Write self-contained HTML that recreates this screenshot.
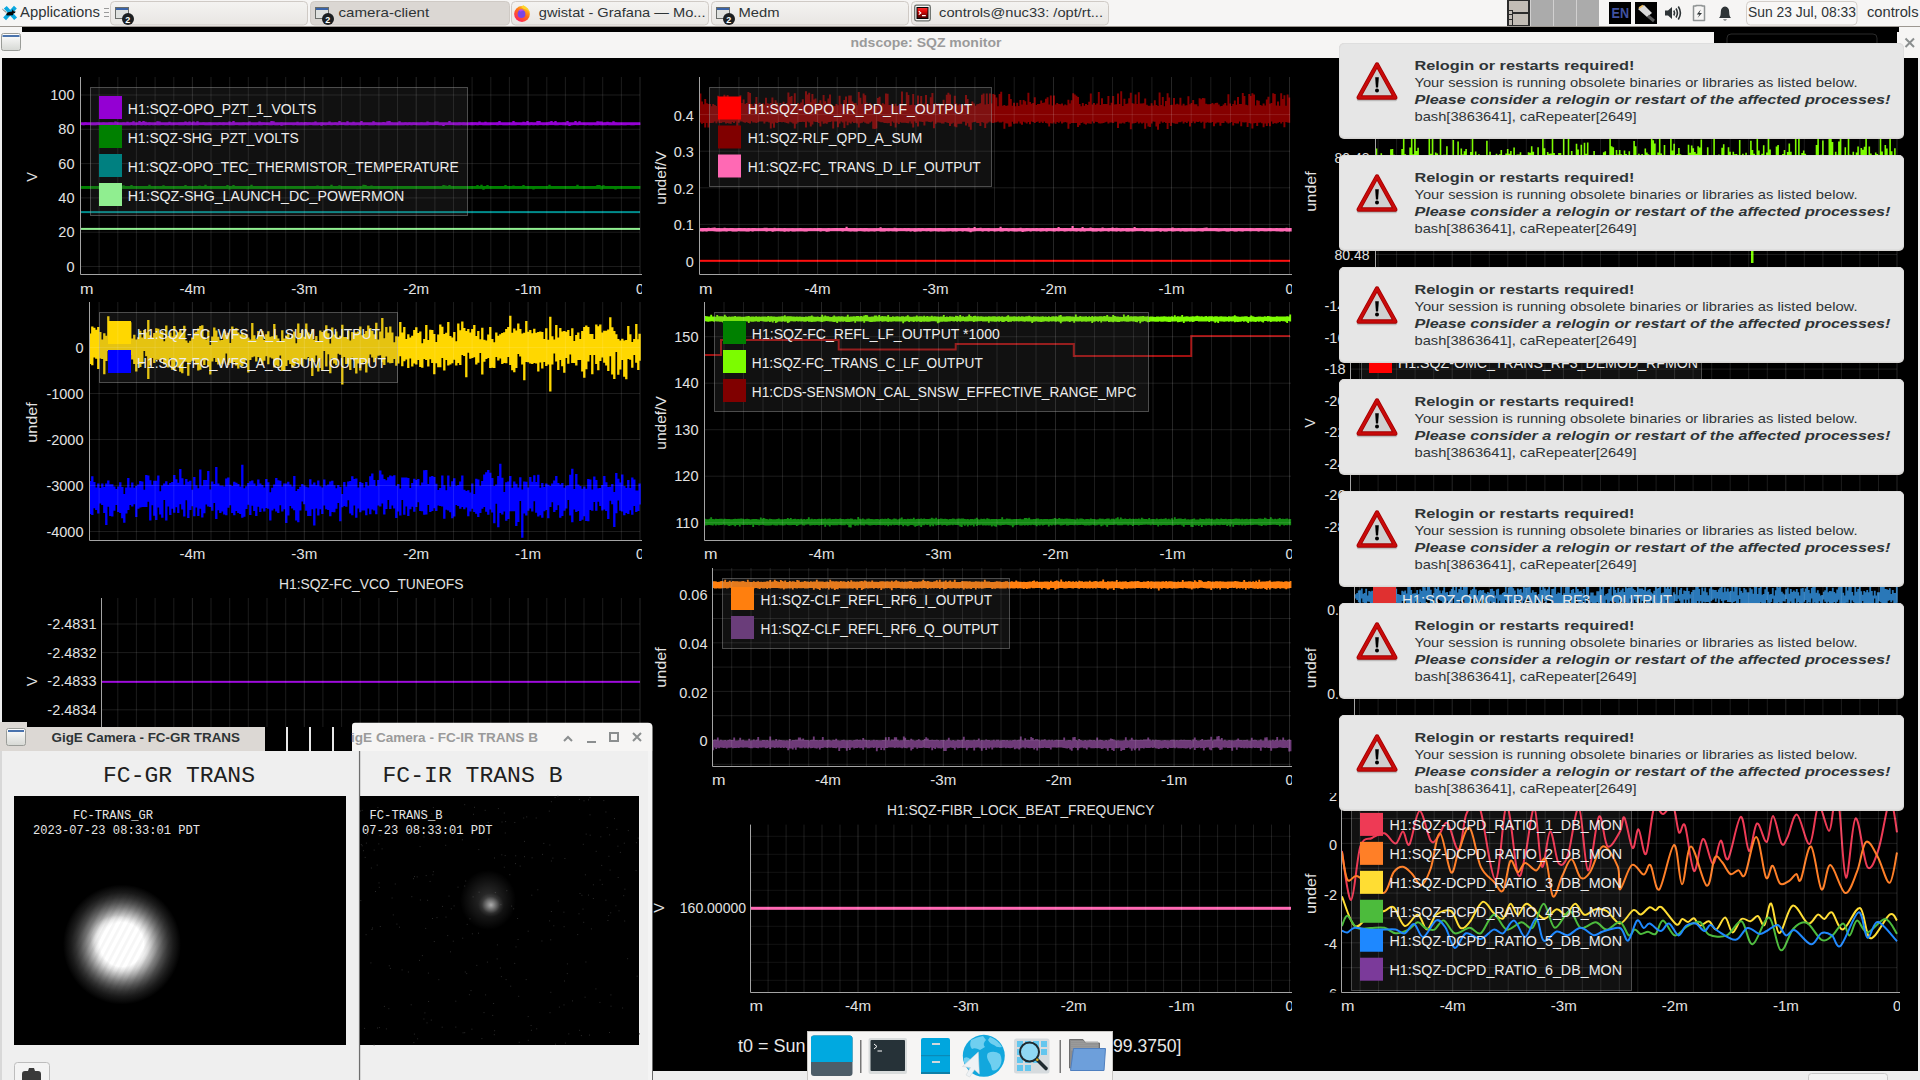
<!DOCTYPE html>
<html><head><meta charset="utf-8"><title>ndscope</title>
<style>html,body{margin:0;padding:0;background:#000;overflow:hidden}svg{display:block}text{font-family:"Liberation Sans",sans-serif}</style>
</head><body>
<svg width="1920" height="1080" viewBox="0 0 1920 1080">
<defs>
<linearGradient id="winico" x1="0" y1="0" x2="0" y2="1"><stop offset="0" stop-color="#ffffff"/><stop offset="1" stop-color="#d6d8d4"/></linearGradient>
<linearGradient id="ffg" x1="0.8" y1="0.1" x2="0.2" y2="0.95"><stop offset="0" stop-color="#ffc21a"/><stop offset="0.45" stop-color="#ff6a1a"/><stop offset="1" stop-color="#ff1f5e"/></linearGradient>
<linearGradient id="termg" x1="0" y1="0" x2="0" y2="1"><stop offset="0" stop-color="#ff3030"/><stop offset="0.35" stop-color="#e00808"/><stop offset="1" stop-color="#3a0000"/></linearGradient>
<radialGradient id="beamcore" cx="0.5" cy="0.5" r="0.5"><stop offset="0" stop-color="#fff" stop-opacity="1"/><stop offset="0.6" stop-color="#fff" stop-opacity="0.6"/><stop offset="1" stop-color="#fff" stop-opacity="0"/></radialGradient>
<linearGradient id="btn" x1="0" y1="0" x2="0" y2="1"><stop offset="0" stop-color="#f4f3f1"/><stop offset="1" stop-color="#e8e6e3"/></linearGradient>
<radialGradient id="beam1" cx="0.5" cy="0.5" r="0.5"><stop offset="0.000" stop-color="#ffffff"/><stop offset="0.367" stop-color="#ffffff"/><stop offset="0.450" stop-color="#dadada"/><stop offset="0.533" stop-color="#aaaaaa"/><stop offset="0.617" stop-color="#7a7a7a"/><stop offset="0.700" stop-color="#525252"/><stop offset="0.783" stop-color="#323232"/><stop offset="0.867" stop-color="#1a1a1a"/><stop offset="0.950" stop-color="#0a0a0a"/><stop offset="1.000" stop-color="#000000"/></radialGradient><pattern id="streak" width="6.5" height="6.5" patternUnits="userSpaceOnUse" patternTransform="rotate(28)"><rect width="2.6" height="6.5" fill="#000" fill-opacity="0.035"/></pattern>
<radialGradient id="beam2" cx="0.5" cy="0.5" r="0.5"><stop offset="0" stop-color="#fff" stop-opacity="0.62"/><stop offset="0.35" stop-color="#fff" stop-opacity="0.35"/><stop offset="0.7" stop-color="#fff" stop-opacity="0.08"/><stop offset="1" stop-color="#fff" stop-opacity="0"/></radialGradient>
<radialGradient id="beam2b" cx="0.5" cy="0.5" r="0.5"><stop offset="0" stop-color="#fff" stop-opacity="0.2"/><stop offset="0.5" stop-color="#fff" stop-opacity="0.1"/><stop offset="1" stop-color="#fff" stop-opacity="0"/></radialGradient>
<linearGradient id="warnfill" x1="0" y1="0" x2="0" y2="1"><stop offset="0" stop-color="#e8e8e8"/><stop offset="1" stop-color="#c8c8c8"/></linearGradient>
<linearGradient id="globe" x1="0" y1="0" x2="0" y2="1"><stop offset="0" stop-color="#5cc8ee"/><stop offset="1" stop-color="#2aa6dc"/></linearGradient>
<linearGradient id="folder" x1="0" y1="0" x2="0" y2="1"><stop offset="0" stop-color="#8fb7e6"/><stop offset="1" stop-color="#4f86c8"/></linearGradient>
</defs>
<rect x="0" y="0" width="1920" height="1080" fill="#000" />
<rect x="0" y="0" width="1920" height="27" fill="#f6f5f4" />
<rect x="0" y="26" width="1920" height="1.4" fill="#9c9791" />
<rect x="0" y="27" width="1920" height="5" fill="#f6f5f4" />
<rect x="22" y="27" width="1877" height="5" fill="#000" />
<rect x="0" y="32" width="1920" height="26" fill="#f6f5f4" />
<rect x="1.5" y="33.5" width="19" height="17" rx="2" fill="url(#winico)" stroke="#9a9c98" stroke-width="1"/>
<rect x="2.5" y="35" width="17" height="2" fill="#4a73ad" />
<text x="850.5" y="47" font-size="13.5" fill="#9a9a9a" font-weight="bold" textLength="151" lengthAdjust="spacingAndGlyphs" >ndscope: SQZ monitor</text>
<rect x="1714" y="32" width="183" height="11" fill="#000" />
<path d="M1727 43 V38 Q1727 34 1731 34 H1873 Q1877 34 1877 38 V43" fill="none" stroke="#2a2a2a" stroke-width="1"/>
<path d="M1905.5 38.5 L1914 47 M1914 38.5 L1905.5 47" stroke="#8a8e8e" stroke-width="2"/>
<rect x="0" y="58" width="2" height="1022" fill="#eeeeee" />
<rect x="1898" y="58" width="22" height="1022" fill="#000" />
<rect x="1918" y="58" width="2" height="1022" fill="#eeeeee" />
<path d="M5.3 7.2 L15.6 18.8 M15.4 7.2 L4.6 18.8" stroke="#0aa8e0" stroke-width="3.9" stroke-linecap="butt"/>
<path d="M6.2 14.8 Q6.5 12.2 9 12 L12 11.6 L12.6 9.3 L13.6 11.2 L15.6 11.5 L15 13 L13.4 13.6 L12.8 15.2 L6.8 15.4 Z" fill="#050505"/>
<path d="M2.4 9.2 L6.4 12.6" stroke="#555" stroke-width="0.8"/>
<text x="20" y="17.2" font-size="14" fill="#2e3436" textLength="80" lengthAdjust="spacingAndGlyphs" >Applications</text>
<rect x="104" y="8" width="5" height="1" fill="#9a9a9a" />
<rect x="104" y="12" width="5" height="1" fill="#9a9a9a" />
<rect x="104" y="16" width="5" height="1" fill="#9a9a9a" />
<rect x="110.5" y="1.5" width="197" height="23.5" rx="4" fill="url(#btn)" stroke="#cfcac5" stroke-width="1"/>
<rect x="115.5" y="7.5" width="13" height="11" fill="#dfe1de" stroke="#6a6d69" stroke-width="1"/>
<rect x="116" y="8" width="12" height="2" fill="#3b64a8" />
<circle cx="128" cy="19" r="6" fill="#1c1f21"/>
<text x="125.3" y="23.3" font-size="9" fill="#ffffff" font-weight="bold" >2</text>
<rect x="310.5" y="1.5" width="199" height="23.5" rx="4" fill="#dbd7d3" stroke="#cfcac5" stroke-width="1"/>
<rect x="315.5" y="7.5" width="13" height="11" fill="#dfe1de" stroke="#6a6d69" stroke-width="1"/>
<rect x="316" y="8" width="12" height="2" fill="#3b64a8" />
<circle cx="328" cy="19" r="6" fill="#1c1f21"/>
<text x="325.3" y="23.3" font-size="9" fill="#ffffff" font-weight="bold" >2</text>
<text x="338.5" y="17.2" font-size="13.5" fill="#2e3436" textLength="90.69999999999999" lengthAdjust="spacingAndGlyphs" >camera-client</text>
<rect x="511.5" y="1.5" width="197" height="23.5" rx="4" fill="url(#btn)" stroke="#cfcac5" stroke-width="1"/>
<circle cx="522" cy="14" r="7.9" fill="url(#ffg)"/>
<path d="M521 7 Q524 4.5 523 5 Q529 8 529.5 13 Q528 9 524 9 Z" fill="#ffd42a"/>
<circle cx="521.5" cy="14" r="3.9" fill="#7b45e6"/>
<path d="M518.5 10.5 Q521 8.5 524 10 Q522 11 520.5 11.5 Z" fill="#b44af0"/>
<text x="538.8" y="17.2" font-size="13.5" fill="#2e3436" textLength="166.70000000000005" lengthAdjust="spacingAndGlyphs" >gwistat - Grafana — Mo...</text>
<rect x="711.5" y="1.5" width="197" height="23.5" rx="4" fill="url(#btn)" stroke="#cfcac5" stroke-width="1"/>
<rect x="716.5" y="7.5" width="13" height="11" fill="#dfe1de" stroke="#6a6d69" stroke-width="1"/>
<rect x="717" y="8" width="12" height="2" fill="#3b64a8" />
<circle cx="729" cy="19" r="6" fill="#1c1f21"/>
<text x="726.3" y="23.3" font-size="9" fill="#ffffff" font-weight="bold" >2</text>
<text x="738.5" y="17.2" font-size="13.5" fill="#2e3436" textLength="41" lengthAdjust="spacingAndGlyphs" >Medm</text>
<rect x="911.5" y="1.5" width="197" height="23.5" rx="4" fill="url(#btn)" stroke="#cfcac5" stroke-width="1"/>
<rect x="914.7" y="5.2" width="15.6" height="15.6" rx="1.8" fill="#f6f6f6" stroke="#6b6f6b" stroke-width="1.3"/>
<rect x="917" y="7.5" width="11" height="11" fill="url(#termg)" stroke="#050505" stroke-width="1"/>
<path d="M918.8 11.2 L920.8 13 L918.8 14.6 M922 15.6 H925.8" stroke="#fff" stroke-width="1.1" fill="none"/>
<text x="939.1" y="17.2" font-size="13.5" fill="#2e3436" textLength="163.89999999999998" lengthAdjust="spacingAndGlyphs" >controls@nuc33: /opt/rt...</text>
<rect x="1507" y="0" width="23" height="26" fill="#2b2b2b" />
<rect x="1509" y="1" width="19" height="11" fill="#c2bcb5" />
<rect x="1509" y="14" width="19" height="11" fill="#c2bcb5" />
<rect x="1508" y="10" width="5" height="16" fill="#2b2b2b" />
<rect x="1509" y="11" width="3" height="3" fill="#c2bcb5" />
<rect x="1509" y="15" width="3" height="4" fill="#c2bcb5" />
<rect x="1509" y="20" width="3" height="5" fill="#c2bcb5" />
<rect x="1530.5" y="0" width="22.5" height="26" fill="#ababab" />
<rect x="1553.5" y="0" width="22.5" height="26" fill="#ababab" />
<rect x="1576.5" y="0" width="22.5" height="26" fill="#ababab" />
<rect x="1609" y="2" width="22" height="22" fill="#000" />
<text x="1611.5" y="17.8" font-size="14" fill="#4052a0" font-weight="bold" textLength="17.5" lengthAdjust="spacingAndGlyphs" >EN</text>
<rect x="1635" y="2" width="22" height="22" fill="#000" />
<path d="M1638 9 L1644 5 L1652 13 L1647 17 Z" fill="#d8d8d8"/>
<path d="M1639 8 L1643 5.5" stroke="#f0c060" stroke-width="1.5"/>
<path d="M1648 16 L1654 21" stroke="#5a5a5a" stroke-width="3"/>
<path d="M1665 10.5 H1668 L1672 7 V19 L1668 15.5 H1665 Z" fill="#2e3436"/>
<path d="M1673.8 10.5 Q1675.3 13 1673.8 15.5 M1676 8.5 Q1678.8 13 1676 17.5 M1678.3 6.5 Q1682.5 13 1678.3 19.5" stroke="#2e3436" stroke-width="1.6" fill="none"/>
<path d="M1696 6 V5.5 H1702 V6 H1704.5 V20.5 H1693.5 V6 Z" fill="none" stroke="#8f9393" stroke-width="1.5" stroke-linejoin="round"/>
<path d="M1700.8 9.5 L1696.8 14.5 H1699.5 L1697.5 18 L1702 13 H1699.3 Z" fill="#2e3436"/>
<path d="M1719 18 Q1720.8 16.5 1720.8 12 Q1720.8 7 1725 6.5 Q1729.2 7 1729.2 12 Q1729.2 16.5 1731 18 Z" fill="#2e3436"/>
<path d="M1723 19.5 H1727 Q1725 21.5 1723 19.5 Z" fill="#2e3436"/>
<rect x="1746.5" y="1.5" width="110.5" height="23.5" rx="4" fill="#f8f7f6" stroke="#d3cec9" stroke-width="1"/>
<text x="1748" y="17.2" font-size="14" fill="#2e3436" textLength="108" lengthAdjust="spacingAndGlyphs" >Sun 23 Jul, 08:33</text>
<text x="1867" y="17.2" font-size="14" fill="#2e3436" textLength="51.5" lengthAdjust="spacingAndGlyphs" >controls</text>
<rect x="80.5" y="227.9" width="559.5" height="2" fill="#90ee90" />
<rect x="80.5" y="211.1" width="559.5" height="2" fill="#008b8b" />
<rect x="80.5" y="186.1" width="559.5" height="2.6" fill="#008000" />
<path d="M81.5 186.1V188.8M83.5 186.1V188.7M85.5 185.9V188.7M87.5 186V188.7M89.5 186V188.8M91.5 185.9V188.8M93.5 186V188.7M95.5 185.9V188.7M97.5 186.1V188.7M99.5 186V188.8M101.5 186.1V188.7M103.5 185.9V189.3M105.5 185.9V188.8M107.5 186.1V188.8M109.5 185.4V188.7M111.5 186V188.8M113.5 186.1V188.8M115.5 185.9V189.4M117.5 186V188.8M119.5 186V188.8M121.5 186V188.7M123.5 185.2V188.7M125.5 186V188.8M127.5 185.9V188.7M129.5 186.1V188.8M131.5 185.1V188.7M133.5 186.1V188.7M135.5 185.9V188.7M137.5 186.1V188.7M139.5 186.1V188.8M141.5 186V188.7M143.5 186V188.7M145.5 186V188.8M147.5 186.1V188.8M149.5 184.7V188.8M151.5 185.9V188.8M153.5 186.1V188.7M155.5 186V188.7M157.5 186V188.7M159.5 186V188.8M161.5 186V188.7M163.5 185.3V188.8M165.5 186V188.8M167.5 186V188.8M169.5 186.1V188.8M171.5 186V188.7M173.5 186.1V188.8M175.5 185.9V188.8M177.5 185.9V188.7M179.5 186V188.8M181.5 186V188.8M183.5 186.1V188.8M185.5 185.1V188.8M187.5 185.9V188.7M189.5 186.1V188.8M191.5 186V188.8M193.5 186V188.8M195.5 186.1V188.8M197.5 186.1V188.7M199.5 185.4V188.7M201.5 185.9V188.8M203.5 186V188.7M205.5 184.8V188.8M207.5 186V188.8M209.5 185.9V188.8M211.5 186.1V188.8M213.5 186V188.7M215.5 186.1V188.7M217.5 186V188.7M219.5 186V188.7M221.5 186V188.8M223.5 185.9V188.7M225.5 186V188.7M227.5 185.1V188.8M229.5 186V189.5M231.5 186V188.7M233.5 185V188.7M235.5 186.1V188.7M237.5 185.9V188.7M239.5 186.1V188.7M241.5 186.1V188.8M243.5 185.9V188.8M245.5 186.1V188.8M247.5 185.9V189.3M249.5 186V188.7M251.5 184.8V188.7M253.5 186V188.7M255.5 185.9V188.7M257.5 186.1V188.7M259.5 186.1V188.8M261.5 186V188.7M263.5 186.1V188.7M265.5 186V188.7M267.5 186V188.8M269.5 186.1V188.8M271.5 185.9V188.7M273.5 186V188.8M275.5 186V188.7M277.5 185.9V188.7M279.5 185.9V188.8M281.5 186V188.8M283.5 186.1V188.8M285.5 185.9V188.8M287.5 186V188.8M289.5 186V188.8M291.5 185.9V188.7M293.5 186V188.7M295.5 186V188.7M297.5 185.9V188.8M299.5 186V188.7M301.5 186V188.8M303.5 185.9V188.8M305.5 186.1V188.7M307.5 186.1V188.7M309.5 186V188.7M311.5 185.9V188.8M313.5 186V188.7M315.5 186V188.7M317.5 185.5V188.8M319.5 186V188.7M321.5 186.1V188.8M323.5 186.1V188.7M325.5 185.9V188.8M327.5 185.9V188.8M329.5 186.1V188.8M331.5 184.8V188.8M333.5 185.9V188.8M335.5 185.9V188.8M337.5 186V188.8M339.5 185.3V188.8M341.5 186V188.7M343.5 186V188.8M345.5 185.9V188.7M347.5 185.9V188.7M349.5 186V188.7M351.5 186.1V188.8M353.5 185.9V188.8M355.5 186V188.8M357.5 186V189.3M359.5 186V188.8M361.5 185.9V188.8M363.5 184.8V188.7M365.5 184.9V188.7M367.5 186V188.7M369.5 186.1V188.8M371.5 185.4V188.7M373.5 186.1V188.7M375.5 186V188.7M377.5 186V188.7M379.5 186V188.7M381.5 186V188.8M383.5 186V188.8M385.5 185.9V188.7M387.5 186V188.8M389.5 185.9V188.7M391.5 186V189.6M393.5 186V188.7M395.5 186.1V188.8M397.5 185.9V188.8M399.5 186V188.8M401.5 186V188.8M403.5 186V188.7M405.5 185.9V188.8M407.5 186.1V188.8M409.5 185.9V188.8M411.5 186.1V188.7M413.5 186.1V188.8M415.5 185.9V188.8M417.5 186V188.7M419.5 186V188.8M421.5 186V188.8M423.5 185.9V188.7M425.5 185.9V188.8M427.5 186V188.7M429.5 186V188.7M431.5 186V188.7M433.5 185.9V188.8M435.5 186V188.8M437.5 186V188.8M439.5 186.1V188.7M441.5 186.1V188.8M443.5 185V188.7M445.5 185.5V188.7M447.5 186V188.7M449.5 185.1V188.8M451.5 186.1V188.8M453.5 186.1V188.7M455.5 186V188.8M457.5 186.1V188.8M459.5 186V188.7M461.5 186.1V188.7M463.5 186V188.7M465.5 186.1V188.7M467.5 186V188.7M469.5 186.1V188.7M471.5 186V188.7M473.5 186V188.7M475.5 186V188.8M477.5 184.9V188.7M479.5 186V188.7M481.5 184.7V188.7M483.5 186V189.7M485.5 185.9V188.8M487.5 185.1V188.7M489.5 186V188.7M491.5 186V188.8M493.5 186V188.8M495.5 186V188.7M497.5 186V188.8M499.5 185.9V188.8M501.5 186.1V188.8M503.5 186V188.7M505.5 185.1V188.8M507.5 186V188.7M509.5 185.9V188.7M511.5 185.9V188.8M513.5 185.4V188.8M515.5 186V188.8M517.5 186.1V188.8M519.5 185.9V188.8M521.5 186V188.8M523.5 185.1V188.7M525.5 186V188.8M527.5 186V188.8M529.5 186V188.8M531.5 186V188.8M533.5 186V189.5M535.5 186V188.8M537.5 186V188.7M539.5 185.9V188.7M541.5 185.9V188.8M543.5 186V188.8M545.5 186V188.8M547.5 186V188.7M549.5 184.7V188.7M551.5 186.1V188.8M553.5 186.1V188.7M555.5 186.1V188.7M557.5 186V188.7M559.5 186V188.8M561.5 186.1V188.8M563.5 186V188.7M565.5 186V188.8M567.5 186V188.7M569.5 186V188.7M571.5 186V188.7M573.5 186V188.8M575.5 185.9V188.7M577.5 184.7V188.7M579.5 186V188.7M581.5 186V188.7M583.5 186V188.8M585.5 186V188.7M587.5 186V188.7M589.5 186V188.8M591.5 186V188.8M593.5 186V188.8M595.5 186V188.7M597.5 185V188.8M599.5 185.1V188.7M601.5 186.1V189.4M603.5 185.2V188.8M605.5 186V188.8M607.5 186V188.7M609.5 186.1V188.7M611.5 185.9V188.8M613.5 186V188.8M615.5 185.9V189.4M617.5 185.9V188.8M619.5 186V188.8M621.5 185.9V188.7M623.5 186.1V188.8M625.5 186.1V188.8M627.5 186V188.8M629.5 186.1V188.8M631.5 186V188.7M633.5 186V188.8M635.5 186V188.7M637.5 185.9V188.8M639.2 185.9V188.8" stroke="#008000" stroke-width="2.35" fill="none"/>
<rect x="80.5" y="122.5" width="559.5" height="2.6" fill="#9400d3" />
<path d="M81.5 122.4V125.1M83.5 122.4V125.2M85.5 122.3V125.1M87.5 122.5V125.1M89.5 122.4V125.1M91.5 122.4V125.2M93.5 122.5V125.2M95.5 122.4V125.2M97.5 122.3V125.1M99.5 122.5V125.1M101.5 122.4V125.1M103.5 122.3V125.2M105.5 122.4V125.2M107.5 122.5V125.2M109.5 122.3V125.2M111.5 122.3V125.1M113.5 122.4V125.1M115.5 121.4V125.2M117.5 122.3V125.2M119.5 122.5V125.1M121.5 122.4V125.2M123.5 122.3V125.2M125.5 122.4V125.2M127.5 121.8V125.2M129.5 122.4V125.2M131.5 122.3V125.1M133.5 121.2V125.2M135.5 122.4V125.2M137.5 122.4V125.1M139.5 121V125.1M141.5 121.9V125.2M143.5 121.1V125.1M145.5 121.8V125.2M147.5 122.5V125.1M149.5 122.3V125.2M151.5 122.4V125.1M153.5 122.4V125.2M155.5 122.4V125.1M157.5 121.3V125.2M159.5 121.5V125.2M161.5 122.4V125.1M163.5 122.5V125.1M165.5 122.4V125.2M167.5 122.4V125.2M169.5 121.7V125.1M171.5 122.4V125.2M173.5 122.5V125.2M175.5 122.5V125.1M177.5 122.4V125.1M179.5 122.3V125.2M181.5 122.3V125.2M183.5 122.3V125.2M185.5 121.5V125.1M187.5 122.3V125.2M189.5 121.5V125.2M191.5 122.4V125.1M193.5 121.4V125.2M195.5 122.5V125.2M197.5 121.2V125.2M199.5 122.4V125.1M201.5 122.4V125.1M203.5 122.3V125.1M205.5 122.4V125.2M207.5 122.4V125.2M209.5 122.3V125.2M211.5 122.5V125.2M213.5 122.4V125.1M215.5 122.4V125.1M217.5 122.4V125.2M219.5 122.3V125.1M221.5 122.4V125.1M223.5 122.3V125.2M225.5 122.4V125.1M227.5 122.4V125.1M229.5 121.4V125.2M231.5 122.3V125.2M233.5 121V125.2M235.5 122.4V125.1M237.5 122.4V125.1M239.5 122.5V125.2M241.5 122.5V125.2M243.5 122.3V125.2M245.5 122.4V125.1M247.5 122.4V125.2M249.5 121.5V125.2M251.5 122.5V125.1M253.5 122.4V125.2M255.5 122.5V125.2M257.5 122.5V125.1M259.5 121.5V125.2M261.5 122.3V125.2M263.5 122.3V125.1M265.5 122.5V125.1M267.5 122.4V125.1M269.5 122.4V125.2M271.5 121.1V125.2M273.5 121.2V125.1M275.5 122.5V125.2M277.5 122.4V125.2M279.5 122.5V125.1M281.5 122.3V125.8M283.5 122.4V125.2M285.5 122.5V125.1M287.5 122.5V125.1M289.5 122.4V125.1M291.5 122.5V125.1M293.5 122.5V125.2M295.5 122.4V125.1M297.5 121.7V125.2M299.5 122.5V125.2M301.5 122.3V125.2M303.5 122.4V125.2M305.5 121.9V125.2M307.5 122.3V125.2M309.5 122.3V125.1M311.5 122.4V125.1M313.5 122.3V125.2M315.5 121.6V125.2M317.5 122.4V125.2M319.5 122.5V125.1M321.5 122.3V125.8M323.5 122.5V125.1M325.5 122.5V125.2M327.5 122.5V125.1M329.5 121.4V125.1M331.5 122.5V125.2M333.5 122.5V125.1M335.5 122.3V125.1M337.5 122.5V125.2M339.5 121V125.1M341.5 122.4V125.1M343.5 122.3V125.1M345.5 122.5V125.2M347.5 121.3V125.2M349.5 122.5V125.1M351.5 122.4V125.2M353.5 121.8V125.2M355.5 122.4V125.2M357.5 122.4V125.1M359.5 122.4V125.2M361.5 121V125.1M363.5 122.4V125.2M365.5 122.5V125.1M367.5 122.5V125.1M369.5 122.5V125.2M371.5 122.4V125.2M373.5 121.2V125.2M375.5 122.3V125.1M377.5 122.5V125.2M379.5 122.5V125.2M381.5 122.5V125.2M383.5 121.9V125.2M385.5 122.4V125.2M387.5 121.2V125.2M389.5 121V125.2M391.5 122.3V125.2M393.5 122.4V125.2M395.5 122.4V125.2M397.5 122.5V125.2M399.5 121.2V125.2M401.5 122.4V125.2M403.5 122.5V125.2M405.5 122.3V125.1M407.5 122.4V125.2M409.5 122.3V125.1M411.5 122.5V125.2M413.5 122.3V125.1M415.5 122.4V125.1M417.5 122.4V125.2M419.5 122.4V125.2M421.5 122.3V125.2M423.5 122.4V125.2M425.5 122.4V125.2M427.5 121.4V125.2M429.5 122.3V125.1M431.5 122.4V125.1M433.5 122.4V125.1M435.5 121.6V125.1M437.5 121.4V125.1M439.5 122.4V125.2M441.5 122.4V125.2M443.5 122.5V126.1M445.5 122.4V125.1M447.5 122.4V125.1M449.5 121V125.1M451.5 122.4V125.1M453.5 122.5V125.1M455.5 122.5V125.2M457.5 122.4V125.2M459.5 122.3V125.2M461.5 122.4V125.1M463.5 122.3V125.2M465.5 122.4V125.2M467.5 122.4V125.2M469.5 122.4V125.1M471.5 122.3V125.2M473.5 122.3V125.2M475.5 122.3V125.1M477.5 122.4V125.2M479.5 121.5V125.1M481.5 122.4V125.1M483.5 122.4V125.2M485.5 121.8V125.2M487.5 122.4V125.2M489.5 122.5V125.2M491.5 122.4V125.1M493.5 122.5V125.1M495.5 122.4V125.1M497.5 122.3V125.2M499.5 121V125.1M501.5 122.4V125.1M503.5 122.4V125.2M505.5 122.4V125.2M507.5 122.4V125.2M509.5 122.5V125.1M511.5 122.4V125.2M513.5 121.1V125.2M515.5 122.3V125.2M517.5 122.4V125.1M519.5 122.4V125.1M521.5 122.4V125.2M523.5 121.8V125.2M525.5 122.3V125.2M527.5 121.1V125.1M529.5 122.4V125.2M531.5 122.3V125.1M533.5 122.4V125.2M535.5 122.4V125.1M537.5 121.1V125.2M539.5 121V125.1M541.5 122.4V125.1M543.5 122.4V125.2M545.5 122.4V125.1M547.5 122.3V125.2M549.5 121.8V125.1M551.5 120.9V125.1M553.5 122.3V125.1M555.5 121.1V125.2M557.5 122.4V125.2M559.5 122.4V125.1M561.5 122.4V125.1M563.5 122.3V125.2M565.5 122.5V125.2M567.5 121.1V125.2M569.5 122.5V125.9M571.5 122.5V125.2M573.5 122.4V125.1M575.5 121.1V125.1M577.5 122.5V125.2M579.5 121.3V125.1M581.5 122.4V125.1M583.5 122.4V125.1M585.5 122.4V125.2M587.5 122.4V125.1M589.5 122.4V125.2M591.5 122.4V125.2M593.5 122.5V125.1M595.5 122.4V125.2M597.5 121.3V125.2M599.5 121.4V125.1M601.5 121.4V125.2M603.5 122.4V125.2M605.5 122.3V125.2M607.5 121.7V125.1M609.5 122.3V125.2M611.5 122.4V125.2M613.5 121.2V125.2M615.5 122.3V125.2M617.5 122.5V125.2M619.5 122.4V125.2M621.5 122.4V125.1M623.5 122.5V125.2M625.5 122.4V125.2M627.5 122.4V125.1M629.5 122.4V125.1M631.5 122.5V125.2M633.5 122.4V125.2M635.5 122.4V125.1M637.5 122.5V125.1M639.2 122.4V125.1" stroke="#9400d3" stroke-width="2.35" fill="none"/>
<path d="M621.4 77V274.5M602.7 77V274.5M584 77V274.5M565.4 77V274.5M546.8 77V274.5M509.4 77V274.5M490.8 77V274.5M472.1 77V274.5M453.5 77V274.5M434.9 77V274.5M397.5 77V274.5M378.9 77V274.5M360.2 77V274.5M341.6 77V274.5M322.9 77V274.5M285.7 77V274.5M267 77V274.5M248.3 77V274.5M229.7 77V274.5M211 77V274.5M173.8 77V274.5M155.1 77V274.5M136.4 77V274.5M117.8 77V274.5M99.1 77V274.5M80.5 266.5H640M80.5 232.2H640M80.5 197.9H640M80.5 163.6H640M80.5 129.3H640M80.5 95H640" stroke="rgba(255,255,255,0.11)" stroke-width="1" fill="none"/>
<path d="M640 77V274.5M528.1 77V274.5M416.2 77V274.5M304.3 77V274.5M192.4 77V274.5" stroke="rgba(255,255,255,0.15)" stroke-width="1" fill="none"/>
<path d="M80.5 77V274.5H642" stroke="#a4a4a4" stroke-width="1" fill="none"/>
<text x="74.5" y="271.5" font-size="14.5" fill="#e2e2e2" text-anchor="end" >0</text>
<text x="74.5" y="237.2" font-size="14.5" fill="#e2e2e2" text-anchor="end" >20</text>
<text x="74.5" y="202.9" font-size="14.5" fill="#e2e2e2" text-anchor="end" >40</text>
<text x="74.5" y="168.6" font-size="14.5" fill="#e2e2e2" text-anchor="end" >60</text>
<text x="74.5" y="134.3" font-size="14.5" fill="#e2e2e2" text-anchor="end" >80</text>
<text x="74.5" y="100" font-size="14.5" fill="#e2e2e2" text-anchor="end" >100</text>
<rect x="90.5" y="87.5" width="377" height="128" fill="rgba(100,100,100,0.17)" stroke="rgba(160,160,160,0.45)" stroke-width="1"/>
<rect x="99" y="96.0" width="23" height="23" fill="#9400d3" />
<text x="127.80000000000001" y="113.5" font-size="14" fill="#ececec" textLength="188.5" lengthAdjust="spacingAndGlyphs" >H1:SQZ-OPO_PZT_1_VOLTS</text>
<rect x="99" y="125.0" width="23" height="23" fill="#008000" />
<text x="127.80000000000001" y="142.5" font-size="14" fill="#ececec" textLength="171" lengthAdjust="spacingAndGlyphs" >H1:SQZ-SHG_PZT_VOLTS</text>
<rect x="99" y="154.0" width="23" height="23" fill="#008080" />
<text x="127.80000000000001" y="171.5" font-size="14" fill="#ececec" textLength="331" lengthAdjust="spacingAndGlyphs" >H1:SQZ-OPO_TEC_THERMISTOR_TEMPERATURE</text>
<rect x="99" y="183.0" width="23" height="23" fill="#90ee90" />
<text x="127.80000000000001" y="200.5" font-size="14" fill="#ececec" textLength="276.5" lengthAdjust="spacingAndGlyphs" >H1:SQZ-SHG_LAUNCH_DC_POWERMON</text>
<text x="528.1" y="293.8" font-size="14.5" fill="#e2e2e2" text-anchor="middle" textLength="26" lengthAdjust="spacingAndGlyphs" >-1m</text>
<text x="416.2" y="293.8" font-size="14.5" fill="#e2e2e2" text-anchor="middle" textLength="26" lengthAdjust="spacingAndGlyphs" >-2m</text>
<text x="304.3" y="293.8" font-size="14.5" fill="#e2e2e2" text-anchor="middle" textLength="26" lengthAdjust="spacingAndGlyphs" >-3m</text>
<text x="192.4" y="293.8" font-size="14.5" fill="#e2e2e2" text-anchor="middle" textLength="26" lengthAdjust="spacingAndGlyphs" >-4m</text>
<clipPath id="cz103"><rect x="620" y="273.8" width="22" height="30"/></clipPath><g clip-path="url(#cz103)">
<text x="640" y="293.8" font-size="14.5" fill="#e2e2e2" text-anchor="middle" >0</text>
</g>
<text x="80.0" y="293.8" font-size="14.5" fill="#e2e2e2" textLength="13.5" lengthAdjust="spacingAndGlyphs" >m</text>
<text transform="translate(32 177) rotate(-90)" x="0" y="5" font-size="14.5" fill="#e2e2e2" text-anchor="middle">V</text>
<path d="M90.3 481V514M92.3 476.3V515M94.3 481.9V508.2M96.3 487.6V510M98.3 483.5V513.4M100.3 488.1V503.6M102.3 483.5V505M104.3 487V513M106.3 483.5V524.9M108.3 480.5V506.7M110.3 484.3V515.9M112.3 484.2V516.6M114.3 486.6V510.7M116.3 488.9V505.1M118.3 486.5V511.9M120.3 482.2V513.1M122.3 487V518.3M124.3 494.1V522.8M126.3 487.5V513.5M128.3 478.1V510.1M130.3 487.5V504.9M132.3 482.5V506.6M134.3 487.7V504.3M136.3 485.9V517M138.3 484.4V508.7M140.3 481.1V507.6M142.3 481.5V507.1M144.3 489.7V507M146.3 474.9V507M148.3 475.5V501.7M150.3 480.3V520.5M152.3 484.7V505.2M154.3 480.8V515.8M156.3 480.8V519.9M158.3 475.4V507.4M160.3 491.3V514.4M162.3 485.5V517.8M164.3 483.6V499.9M166.3 481.3V520.4M168.3 484.7V506.5M170.3 483V514.9M172.3 482.1V508.8M174.3 475V512.7M176.3 479.2V507.2M178.3 482.7V512.9M180.3 468.9V504.3M182.3 478.3V509.5M184.3 484.7V516.5M186.3 478.9V500.3M188.3 481.8V518M190.3 480.7V509.9M192.3 489.7V506.2M194.3 477.1V516.2M196.3 485.3V507.6M198.3 488.2V516.1M200.3 469.4V508.8M202.3 485.4V517.6M204.3 479.9V513.3M206.3 479.9V504.6M208.3 471V506.4M210.3 489.4V507M212.3 481.4V510.7M214.3 484V503M216.3 467V518.9M218.3 483.6V510.2M220.3 485.6V513.1M222.3 485.5V511.5M224.3 486.4V514.5M226.3 478.5V515.2M228.3 477.4V507.8M230.3 484.8V505.2M232.3 486.1V513M234.3 481.8V515.3M236.3 482.8V511M238.3 484V513.1M240.3 486.5V514M242.3 464.8V517.7M244.3 488.2V516.8M246.3 486.2V509.1M248.3 483.1V504.8M250.3 481.3V515.1M252.3 480.4V505.7M254.3 483.4V511M256.3 485.9V516M258.3 479.6V506.8M260.3 483.5V512.1M262.3 485V508.4M264.3 487.5V511.5M266.3 479V508M268.3 482.2V508.7M270.3 492.3V520.4M272.3 487.7V510.4M274.3 484.6V508.8M276.3 478V511.6M278.3 480.2V512.9M280.3 480.7V505.3M282.3 486.6V511.4M284.3 483.4V509.3M286.3 483.6V523M288.3 481.8V515.4M290.3 484.4V505.9M292.3 486.5V508.4M294.3 475.9V510.3M296.3 490.9V520.5M298.3 489.1V522.2M300.3 486.7V510.5M302.3 484.1V501.4M304.3 485.6V504.3M306.3 486.7V510.8M308.3 487.5V515.9M310.3 479.3V515.9M312.3 484.4V509.3M314.3 482.5V525.5M316.3 485.3V508.5M318.3 480.5V515.5M320.3 486.3V509.3M322.3 487.6V514.1M324.3 479.4V505.5M326.3 485.5V509.3M328.3 484.4V510M330.3 481.5V516.2M332.3 480.8V511.9M334.3 485.3V512.3M336.3 488.2V508.8M338.3 484.9V503M340.3 486.9V521.2M342.3 494.1V507.2M344.3 482V506.1M346.3 486.4V506.8M348.3 481.4V500.3M350.3 481.1V513.6M352.3 476.3V515.2M354.3 479.1V505.5M356.3 478.6V517.8M358.3 487.5V508.4M360.3 482V512.3M362.3 483.1V510.4M364.3 487.6V510.6M366.3 482.1V515.2M368.3 485.7V508.5M370.3 476.2V514.2M372.3 473.5V509.5M374.3 479.9V510.5M376.3 486.1V514.2M378.3 480V505.6M380.3 470.5V506.6M382.3 474.5V503.6M384.3 479.1V514.4M386.3 480.3V509M388.3 477.3V499.9M390.3 475.5V509M392.3 476.2V505.6M394.3 475.3V508.5M396.3 485.9V518M398.3 484.1V511.5M400.3 488.4V515.6M402.3 477.4V500.1M404.3 477.6V514.7M406.3 477.4V506.4M408.3 478V515.9M410.3 487.9V509.2M412.3 483.1V506.7M414.3 478.8V511.8M416.3 480V507.1M418.3 479V502.3M420.3 485.6V510.9M422.3 482.4V511.2M424.3 470.3V514.8M426.3 469.9V514.5M428.3 483.9V505M430.3 476.8V511.9M432.3 476.1V511M434.3 477.1V508.2M436.3 483.8V511.1M438.3 489.9V505.5M440.3 488V506M442.3 475.6V506.5M444.3 485.3V518.8M446.3 490.3V509.8M448.3 475.4V510.4M450.3 486.6V512.2M452.3 481.3V518.2M454.3 478.3V516.6M456.3 485.7V505.1M458.3 484.9V506M460.3 481.6V508.8M462.3 475.6V507.1M464.3 489.8V509.2M466.3 491V507.6M468.3 490.3V516.2M470.3 492.6V511.4M472.3 483.4V508.8M474.3 494.1V512M476.3 478.8V513.7M478.3 479.5V517.1M480.3 485.8V512.9M482.3 480.9V508.7M484.3 474.5V507M486.3 472.2V511.7M488.3 469.9V514.8M490.3 472.7V509.5M492.3 478.1V512.5M494.3 485.9V523.3M496.3 484.5V503.7M498.3 476V527.3M500.3 463.7V513.1M502.3 477.8V514.5M504.3 492.1V511.6M506.3 482.3V520.7M508.3 481.5V519.1M510.3 476.1V511.3M512.3 487.7V511.3M514.3 481.4V511.2M516.3 483.7V526.1M518.3 487.4V521.9M520.3 477.3V501.1M522.3 489.5V537.7M524.3 481.6V513.6M526.3 481.8V515.4M528.3 487.5V510.7M530.3 477V508.4M532.3 481.8V511.6M534.3 475.3V501.3M536.3 481.9V512.8M538.3 474.7V516.6M540.3 487.8V515.3M542.3 483V517.8M544.3 486.9V511.3M546.3 483.4V510M548.3 484.8V518.2M550.3 485.9V506.9M552.3 483.6V502.2M554.3 480.4V511.9M556.3 475.9V509.9M558.3 483V505.3M560.3 484.5V517.7M562.3 483.1V516.1M564.3 487.7V510.7M566.3 485.7V508.5M568.3 485.3V499.9M570.3 474.8V515.5M572.3 468.8V522.3M574.3 488.9V509.5M576.3 473.9V512.1M578.3 484.4V511.1M580.3 486.1V521.1M582.3 488.7V519.8M584.3 486.4V516.3M586.3 488.8V520.9M588.3 479.1V521.3M590.3 479.5V510.1M592.3 489.5V510.7M594.3 476.6V502.1M596.3 480V510.7M598.3 488.3V501.8M600.3 488.1V505.9M602.3 484.9V510.4M604.3 475.9V509.6M606.3 482.3V511.1M608.3 486.9V519M610.3 486.8V500.7M612.3 483.9V504.2M614.3 492.1V526.9M616.3 473V513.3M618.3 478.8V500.5M620.3 482.5V510.8M622.3 474.5V511.5M624.3 485.9V515.2M626.3 488.1V513.1M628.3 480V514.1M630.3 487.9V510.3M632.3 477.6V514.8M634.3 479.5V505.9M636.3 490.5V511.9M638.3 490.4V511.1M639.6 483.6V504.4" stroke="#0000ff" stroke-width="2.35" fill="none"/>
<path d="M90.3 333.5V364M92.3 326.4V365.2M94.3 327.8V357.5M96.3 329.7V358.8M98.3 327.1V369.1M100.3 331.9V358.6M102.3 339.6V359.1M104.3 333.3V374.3M106.3 335.7V361M108.3 316.2V351M110.3 341.1V362M112.3 336.2V358.2M114.3 322.7V357.9M116.3 337.4V365.6M118.3 330.3V356.7M120.3 330.1V363M122.3 341.1V363.3M124.3 338V357.5M126.3 324.3V356.4M128.3 332.3V358.6M130.3 322.2V355.1M132.3 338.6V359.6M134.3 334.7V364M136.3 339.5V371.5M138.3 337.3V363.9M140.3 330.8V367M142.3 337.4V363.9M144.3 329.9V351M146.3 332.6V356.2M148.3 320.1V379M150.3 335.3V365.6M152.3 337.3V357.9M154.3 332.9V363M156.3 328.3V359.8M158.3 328.8V359.7M160.3 332.8V361.5M162.3 331.2V359.2M164.3 341.3V364.4M166.3 325.6V363.5M168.3 336V367.5M170.3 332.4V358.2M172.3 336.6V369.7M174.3 326V370M176.3 334.7V361.8M178.3 332.3V367.6M180.3 329.7V371.7M182.3 332.7V373.2M184.3 325.7V361.5M186.3 340.4V361.7M188.3 342.7V375.8M190.3 340.7V362.5M192.3 337.6V360.7M194.3 333.2V360.7M196.3 331.8V364.6M198.3 328.5V370.5M200.3 325.9V369.8M202.3 325.3V359.4M204.3 336.9V364.9M206.3 339.5V360.3M208.3 330.8V366.2M210.3 345V374.6M212.3 336.6V361.4M214.3 327.5V358M216.3 330.5V361.9M218.3 336.8V364.6M220.3 340.3V365.6M222.3 339.9V363.8M224.3 331V359.8M226.3 335.1V353.5M228.3 332.7V365.1M230.3 343V362.9M232.3 326.5V363.5M234.3 329.9V361.9M236.3 328.2V365.5M238.3 332.5V368.5M240.3 334.4V364.8M242.3 332.5V365.9M244.3 335.3V363.4M246.3 334.1V359.2M248.3 337.6V372.4M250.3 339.4V360M252.3 323V357.2M254.3 335.3V356.6M256.3 339.3V361.5M258.3 331V357M260.3 336.1V361.5M262.3 331V364.1M264.3 340.1V360.8M266.3 334.3V356.2M268.3 331.3V364.2M270.3 336.7V357.4M272.3 336.3V358.6M274.3 324.1V367.6M276.3 335.3V365.5M278.3 338.5V366.4M280.3 341V355.5M282.3 330.2V370.9M284.3 338.6V371.1M286.3 335.6V365.9M288.3 333.7V360.2M290.3 338.2V364M292.3 335.2V367.8M294.3 331.6V365.7M296.3 343.3V361.8M298.3 323.6V363.7M300.3 332.9V364.4M302.3 329.8V366.3M304.3 336.7V359.1M306.3 323.5V359.4M308.3 332.6V357.1M310.3 334.1V361.1M312.3 328.9V376M314.3 339.7V361.9M316.3 335.9V355.4M318.3 341.9V371.5M320.3 330.4V358.4M322.3 332.1V371.1M324.3 330.5V351M326.3 325.2V366.6M328.3 333.2V354.3M330.3 343.4V373.2M332.3 327.4V358.2M334.3 334.5V363.4M336.3 331.6V365.3M338.3 337.5V353.7M340.3 335.8V354.8M342.3 324.7V384.5M344.3 337.1V356.9M346.3 336.9V364.1M348.3 330.9V363.7M350.3 340.4V369.9M352.3 332V357.7M354.3 332.4V360.4M356.3 332.5V373.4M358.3 331.6V363.6M360.3 326.5V370.5M362.3 335.3V363.3M364.3 334.1V362M366.3 331V372.4M368.3 325.4V363.5M370.3 327.9V354.4M372.3 330.9V357.4M374.3 334.3V362.3M376.3 322.7V358.5M378.3 339.5V355.7M380.3 331.4V355.3M382.3 317.9V362.2M384.3 338.3V365.1M386.3 327V356.6M388.3 332.6V362.6M390.3 326.4V363.3M392.3 332.6V363.1M394.3 342.2V359.1M396.3 336.2V365.8M398.3 336.4V363.4M400.3 322.1V356.2M402.3 332.5V366.2M404.3 326.9V361.3M406.3 339.1V359.5M408.3 334.3V367.9M410.3 337.6V358.4M412.3 335.8V366.6M414.3 329.9V363.5M416.3 327.3V364.5M418.3 332.9V359.9M420.3 331.4V366.9M422.3 343.2V367.8M424.3 338.9V359.1M426.3 324.9V359.9M428.3 340V366.6M430.3 329.7V359.3M432.3 330V363.1M434.3 334V374.2M436.3 342V363.2M438.3 334.5V367.2M440.3 324.5V367.2M442.3 326.7V358.1M444.3 334.1V370.5M446.3 332.7V360.1M448.3 322V365.6M450.3 336.1V364.6M452.3 337.6V363.2M454.3 332V359.8M456.3 341.3V365.5M458.3 323.5V363M460.3 330.2V365M462.3 321.5V355.1M464.3 328.1V356M466.3 331V377.2M468.3 329.1V352.8M470.3 332.4V358.8M472.3 329V358M474.3 324.9V357.3M476.3 336.1V364.5M478.3 331V362.8M480.3 339.2V353M482.3 327.7V374.6M484.3 339.8V361.7M486.3 340.6V358.9M488.3 334.5V358M490.3 326.9V368M492.3 338.9V367.7M494.3 342.3V368M496.3 332.6V356.9M498.3 335.8V360.6M500.3 334.2V358.6M502.3 332.9V363.9M504.3 332.3V363.1M506.3 328.9V363.2M508.3 327.1V357M510.3 315.8V364.9M512.3 332.7V370.3M514.3 328.5V372.3M516.3 330.5V367.9M518.3 323.6V353.9M520.3 329.1V356.5M522.3 333.4V364.5M524.3 332.7V380.3M526.3 321.1V362.1M528.3 331.8V362.3M530.3 330.1V363.4M532.3 333.3V364.1M534.3 328.7V362.9M536.3 332.7V363.5M538.3 332.1V371.5M540.3 331.5V362.6M542.3 332V368.4M544.3 339.1V362.1M546.3 328.3V366M548.3 339.7V364.6M550.3 316.7V391.4M552.3 336.2V364.6M554.3 339.4V353.5M556.3 325.1V361.5M558.3 337.4V370M560.3 328.1V360.1M562.3 331.6V366.2M564.3 330.9V372.7M566.3 331.7V358M568.3 329.9V363.8M570.3 335.9V354.5M572.3 328.3V363.1M574.3 341.1V363M576.3 334.9V365.6M578.3 332.5V360M580.3 339V359.9M582.3 330.9V371.6M584.3 326.9V377.8M586.3 325.5V369.3M588.3 326.9V361.5M590.3 333.9V355M592.3 334V374.3M594.3 339V355M596.3 324.4V364M598.3 326.2V370.2M600.3 324.6V361M602.3 332.4V357.4M604.3 330.7V362.8M606.3 330.8V365.6M608.3 329.6V371.1M610.3 317.3V356.3M612.3 327.2V374.5M614.3 330.9V378.9M616.3 334.2V352.1M618.3 338.9V374.7M620.3 340.6V369.4M622.3 338.7V359.9M624.3 340.4V376.8M626.3 340V379.3M628.3 326V359M630.3 334.2V359.8M632.3 342V367.7M634.3 339.1V354.9M636.3 323.9V362.7M638.3 339.2V370M639.6 333.7V360.7" stroke="#ffd700" stroke-width="2.35" fill="none"/>
<rect x="99.5" y="312.5" width="298" height="70" fill="rgba(100,100,100,0.17)" stroke="rgba(160,160,160,0.45)" stroke-width="1"/>
<rect x="108" y="321.0" width="23" height="23" fill="#ffd700" />
<text x="137.0" y="338.5" font-size="14" fill="#ececec" textLength="243" lengthAdjust="spacingAndGlyphs" >H1:SQZ-FC_WFS_A_I_SUM_OUTPUT</text>
<rect x="108" y="350.0" width="23" height="23" fill="#0000ff" />
<text x="137.0" y="367.5" font-size="14" fill="#ececec" textLength="249" lengthAdjust="spacingAndGlyphs" >H1:SQZ-FC_WFS_A_Q_SUM_OUTPUT</text>
<path d="M621.4 302V540.4M602.7 302V540.4M584 302V540.4M565.4 302V540.4M546.8 302V540.4M509.4 302V540.4M490.8 302V540.4M472.1 302V540.4M453.5 302V540.4M434.9 302V540.4M397.5 302V540.4M378.9 302V540.4M360.2 302V540.4M341.6 302V540.4M322.9 302V540.4M285.7 302V540.4M267 302V540.4M248.3 302V540.4M229.7 302V540.4M211 302V540.4M173.8 302V540.4M155.1 302V540.4M136.4 302V540.4M117.8 302V540.4M99.1 302V540.4M89.3 347.5H640M89.3 393.5H640M89.3 439.5H640M89.3 485.5H640M89.3 531.5H640" stroke="rgba(255,255,255,0.11)" stroke-width="1" fill="none"/>
<path d="M640 302V540.4M528.1 302V540.4M416.2 302V540.4M304.3 302V540.4M192.4 302V540.4" stroke="rgba(255,255,255,0.15)" stroke-width="1" fill="none"/>
<path d="M89.5 302V540.5H642" stroke="#a4a4a4" stroke-width="1" fill="none"/>
<text x="83.5" y="352.5" font-size="14.5" fill="#e2e2e2" text-anchor="end" >0</text>
<text x="83.5" y="398.5" font-size="14.5" fill="#e2e2e2" text-anchor="end" >-1000</text>
<text x="83.5" y="444.5" font-size="14.5" fill="#e2e2e2" text-anchor="end" >-2000</text>
<text x="83.5" y="490.5" font-size="14.5" fill="#e2e2e2" text-anchor="end" >-3000</text>
<text x="83.5" y="536.5" font-size="14.5" fill="#e2e2e2" text-anchor="end" >-4000</text>
<text x="528.1" y="559" font-size="14.5" fill="#e2e2e2" text-anchor="middle" textLength="26" lengthAdjust="spacingAndGlyphs" >-1m</text>
<text x="416.2" y="559" font-size="14.5" fill="#e2e2e2" text-anchor="middle" textLength="26" lengthAdjust="spacingAndGlyphs" >-2m</text>
<text x="304.3" y="559" font-size="14.5" fill="#e2e2e2" text-anchor="middle" textLength="26" lengthAdjust="spacingAndGlyphs" >-3m</text>
<text x="192.4" y="559" font-size="14.5" fill="#e2e2e2" text-anchor="middle" textLength="26" lengthAdjust="spacingAndGlyphs" >-4m</text>
<clipPath id="cz127"><rect x="620" y="539" width="22" height="30"/></clipPath><g clip-path="url(#cz127)">
<text x="640" y="559" font-size="14.5" fill="#e2e2e2" text-anchor="middle" >0</text>
</g>
<text transform="translate(32 422.5) rotate(-90)" x="0" y="5" font-size="14.5" fill="#e2e2e2" text-anchor="middle" textLength="40.5" lengthAdjust="spacingAndGlyphs">undef</text>
<text x="279" y="589" font-size="14" fill="#e2e2e2" textLength="184.5" lengthAdjust="spacingAndGlyphs" >H1:SQZ-FC_VCO_TUNEOFS</text>
<rect x="101.5" y="680.9" width="538.5" height="2" fill="#9400d3" />
<path d="M621.4 598V760M602.7 598V760M584 598V760M565.4 598V760M546.8 598V760M509.4 598V760M490.8 598V760M472.1 598V760M453.5 598V760M434.9 598V760M397.5 598V760M378.9 598V760M360.2 598V760M341.6 598V760M322.9 598V760M285.7 598V760M267 598V760M248.3 598V760M229.7 598V760M211 598V760M173.8 598V760M155.1 598V760M136.4 598V760M117.8 598V760M101.5 624H640M101.5 652.6H640M101.5 681.2H640M101.5 709.8H640" stroke="rgba(255,255,255,0.11)" stroke-width="1" fill="none"/>
<path d="M640 598V760M528.1 598V760M416.2 598V760M304.3 598V760M192.4 598V760" stroke="rgba(255,255,255,0.15)" stroke-width="1" fill="none"/>
<path d="M101.5 598V760.5H642" stroke="#a4a4a4" stroke-width="1" fill="none"/>
<text x="96.5" y="629" font-size="14.5" fill="#e2e2e2" text-anchor="end" >-2.4831</text>
<text x="96.5" y="657.6" font-size="14.5" fill="#e2e2e2" text-anchor="end" >-2.4832</text>
<text x="96.5" y="686.2" font-size="14.5" fill="#e2e2e2" text-anchor="end" >-2.4833</text>
<text x="96.5" y="714.8" font-size="14.5" fill="#e2e2e2" text-anchor="end" >-2.4834</text>
<text transform="translate(32 681.5) rotate(-90)" x="0" y="5" font-size="14.5" fill="#e2e2e2" text-anchor="middle">V</text>
<path d="M700.4 93.4V122.5M702 101.4V123.7M703.6 104.2V123.1M705.2 99V127.4M706.8 103.2V122.9M708.4 104V127.5M710 103.9V123M711.6 106.2V122.9M713.2 104V122.8M714.8 104.9V121.4M716.4 106V123.3M718 95.8V121.4M719.6 103.7V122.9M721.2 104.1V123M722.8 103.4V122.3M724.4 94.7V122.3M726 105.5V123.4M727.6 95.1V123M729.2 105.2V123.5M730.8 106.1V123.7M732.4 103.3V121.9M734 105.5V123M735.6 106.1V121.5M737.2 101.5V127.4M738.8 100.4V122.7M740.4 95.2V121.4M742 103.1V121.6M743.6 99.4V122.3M745.2 104V122.8M746.8 102.9V122M748.4 92.1V122.9M750 93V123.6M751.6 104.1V121.3M753.2 106V122.5M754.8 103.5V122.6M756.4 97.1V122.9M758 104.5V122.3M759.6 102.8V121.5M761.2 104.9V121.5M762.8 103.3V121.6M764.4 104.6V123.4M766 97.8V121.7M767.6 103.3V121.8M769.2 104.1V122.4M770.8 102.9V128.5M772.4 97.4V123.4M774 105V127.7M775.6 100.2V122.6M777.2 102.8V123M778.8 105.8V121.9M780.4 103.1V122M782 105V122.2M783.6 101.8V121.9M785.2 104.5V122.5M786.8 103.2V123M788.4 92.4V123.4M790 96.9V121.8M791.6 96V122.4M793.2 105.2V123.6M794.8 93.2V128.5M796.4 105.4V123.7M798 103V122.4M799.6 104.1V122M801.2 102.4V122M802.8 99.3V121.7M804.4 105V122M806 91.3V127.5M807.6 94.5V121.5M809.2 92.8V122.6M810.8 102.3V126.6M812.4 94V124.5M814 99.5V121.5M815.6 98.5V122M817.2 105.2V122M818.8 103.1V123.1M820.4 100.2V126.6M822 104.5V121.5M823.6 94.9V123.8M825.2 101.3V123.2M826.8 103.6V123.7M828.4 98.5V122.3M830 94.6V122M831.6 105.9V121.5M833.2 106.1V128.4M834.8 106V121.5M836.4 104V121.6M838 105.3V127.3M839.6 95.7V123.5M841.2 104V121.6M842.8 105.4V122.4M844.4 100V128M846 96.5V121.4M847.6 105.5V125.3M849.2 95.5V122.6M850.8 95.4V123.5M852.4 101.6V121.8M854 103.2V122.9M855.6 103.1V122.8M857.2 105.3V123.5M858.8 91.9V127.6M860.4 97.7V123.3M862 104.1V122.8M863.6 93.4V121.8M865.2 95.2V122.8M866.8 102.8V123.6M868.4 103.9V123.8M870 103V122.6M871.6 104.5V121.6M873.2 105.7V128.8M874.8 103.7V129M876.4 105.7V128.4M878 98V121.3M879.6 96.8V121.8M881.2 104.7V122.2M882.8 103.3V122.3M884.4 104.3V123.1M886 93.4V123M887.6 93.8V123.3M889.2 105.1V123M890.8 105.1V126.1M892.4 103.7V121.5M894 106.3V122.8M895.6 103.7V127.5M897.2 106V122.7M898.8 105.3V123.9M900.4 103.8V122.2M902 91.5V122.7M903.6 106.2V122.7M905.2 105.6V122.8M906.8 92.2V123.1M908.4 94.9V123.3M910 105.3V121.6M911.6 104.7V123.5M913.2 93.9V127.6M914.8 105.1V121.4M916.4 105.3V123.1M918 95.5V126.5M919.6 103.8V121.6M921.2 96V121.8M922.8 105.2V121.9M924.4 103.7V125.4M926 94.9V121.5M927.6 104.6V121.4M929.2 104.9V122M930.8 97.2V122.2M932.4 93.1V121.6M934 104.4V128.2M935.6 103.2V123.8M937.2 104.2V122.6M938.8 103.5V122.4M940.4 103.9V122.7M942 104.3V123.4M943.6 99.7V123.4M945.2 103.9V122M946.8 94.8V122.6M948.4 92.8V123.1M950 94.5V126.1M951.6 103.9V123.7M953.2 105.7V122.8M954.8 95.8V126.4M956.4 103.4V127.2M958 105.2V123.8M959.6 103.9V123.8M961.2 104.4V123.7M962.8 105V121.8M964.4 105.6V121.7M966 95.1V125.6M967.6 99.1V123.2M969.2 105.1V126.7M970.8 105.9V129.7M972.4 101.5V122.4M974 103.5V122.1M975.6 105.7V121.7M977.2 104.3V123M978.8 103.9V123M980.4 103.3V125.9M982 94.8V121.9M983.6 93.5V122.7M985.2 104.5V127.9M986.8 93.5V123.4M988.4 104.1V122.4M990 93.5V121.5M991.6 103.4V122.8M993.2 94.1V123.1M994.8 94.7V122.4M996.4 97.5V122.3M998 106.3V121.5M999.6 94V122.6M1001.2 91.7V122.4M1002.8 105.8V121.8M1004.4 105V128.8M1006 105.9V123.3M1007.6 105.5V123.4M1009.2 94.1V126.7M1010.8 98.9V126.6M1012.4 105.8V121.7M1014 102.8V123.8M1015.6 106.3V123.4M1017.2 102.8V123.5M1018.8 106V121.4M1020.4 99.9V123.6M1022 104.6V124.8M1023.6 99.9V121.7M1025.2 101.3V122.4M1026.8 104.8V123.4M1028.4 92.8V121.9M1030 101.9V124.3M1031.6 103.7V121.6M1033.2 103.1V122M1034.8 97.3V122.9M1036.4 104.9V122M1038 104V121.4M1039.6 103.9V123.1M1041.2 100.4V121.7M1042.8 103.1V123M1044.4 102.5V121.6M1046 98.8V123.1M1047.6 97.3V123.5M1049.2 104.6V126.5M1050.8 95.4V123.2M1052.4 105.4V123.4M1054 95.4V122.4M1055.6 104.6V123.7M1057.2 102.9V122M1058.8 104.1V122.7M1060.4 104.3V121.6M1062 103.5V123.6M1063.6 105.5V122.6M1065.2 104.6V122.1M1066.8 105.3V122.4M1068.4 99.7V128.8M1070 103.4V123.7M1071.6 100.3V123M1073.2 93.2V123M1074.8 94.4V123M1076.4 95.8V123.1M1078 96.9V127M1079.6 103.9V125.2M1081.2 106.2V123M1082.8 103.1V122.6M1084.4 105.8V123.7M1086 104.1V124.5M1087.6 105.1V123.2M1089.2 101.8V123.4M1090.8 93.5V123.7M1092.4 104.6V121.4M1094 103V123.2M1095.6 104.8V121.8M1097.2 103.6V122M1098.8 92.1V123.3M1100.4 104.9V123.6M1102 98.3V123.3M1103.6 104.1V122.9M1105.2 104V122.2M1106.8 103.9V121.8M1108.4 96.1V123.6M1110 105.2V122.4M1111.6 102.8V122.5M1113.2 96V123.1M1114.8 104.6V121.8M1116.4 104.3V121.7M1118 93.4V127.9M1119.6 103.9V123.5M1121.2 91.2V123.5M1122.8 105.9V122.8M1124.4 98.7V123.6M1126 103.9V122M1127.6 103.6V121.8M1129.2 98.2V122.6M1130.8 92.7V129.2M1132.4 103.2V123.5M1134 103.7V123.2M1135.6 94.6V123.1M1137.2 103.9V121.8M1138.8 92.2V123.4M1140.4 103.4V122.4M1142 103.6V123.4M1143.6 103.3V122.7M1145.2 98.6V128.7M1146.8 104.8V123.3M1148.4 105.7V126.5M1150 105.7V127M1151.6 103.3V123.6M1153.2 105.5V121.4M1154.8 100.3V121.8M1156.4 104.9V126.4M1158 105.9V129.7M1159.6 92.6V123.7M1161.2 104.9V121.4M1162.8 96.9V122.7M1164.4 106.2V121.9M1166 101V122.9M1167.6 93.2V128.9M1169.2 97.5V122.9M1170.8 105V126.1M1172.4 104.8V122.8M1174 98V123.2M1175.6 104.4V123.7M1177.2 103.8V123.7M1178.8 104.4V122.3M1180.4 97.8V122.2M1182 105.5V121.4M1183.6 103.8V123.5M1185.2 105.5V121.9M1186.8 105.2V123.1M1188.4 96.2V121.6M1190 104.3V126.5M1191.6 103.1V123M1193.2 100V121.6M1194.8 104.3V123.3M1196.4 104.3V121.8M1198 106.2V122M1199.6 98.2V121.5M1201.2 99.3V122.8M1202.8 97.9V121.8M1204.4 98.3V128.5M1206 103.8V122.7M1207.6 104.3V122.2M1209.2 104.2V122.7M1210.8 103.9V122.7M1212.4 102.9V121.9M1214 104.3V126.2M1215.6 102.9V123.4M1217.2 102.8V122.5M1218.8 104.5V122.5M1220.4 106.2V125.8M1222 106V123.1M1223.6 104.4V122.9M1225.2 103V121.3M1226.8 105.5V122.6M1228.4 94.3V123.6M1230 103.6V122.8M1231.6 106.1V122.1M1233.2 104V125.5M1234.8 100.4V123.1M1236.4 104.8V123.4M1238 97V123.6M1239.6 104V121.5M1241.2 104.1V126.3M1242.8 92.9V122.2M1244.4 95.9V122.4M1246 104.7V122.3M1247.6 105.3V127M1249.2 94V123M1250.8 96V123.5M1252.4 93.3V128.5M1254 94.4V123.3M1255.6 105.5V122.9M1257.2 100.2V125.9M1258.8 100.7V122.7M1260.4 105.1V122.4M1262 105.7V123.3M1263.6 103.4V127.2M1265.2 105.4V123.4M1266.8 99.5V126.1M1268.4 96.7V123.3M1270 103.7V126.3M1271.6 103V121.5M1273.2 93.3V123.7M1274.8 94.1V123M1276.4 105.4V123.6M1278 101.5V122.7M1279.6 105.7V121.9M1281.2 93.3V123.4M1282.8 99V121.9M1284.4 95.2V127.3M1286 105.7V121.9M1287.6 94.5V122.4M1289.2 97.5V122.8" stroke="#850000" stroke-width="1.9500000000000002" fill="none"/>
<rect x="699.6" y="228.2" width="590.4" height="3" fill="#ff69b4" />
<path d="M700.6 228.5V231.3M702.6 228.1V231.6M704.6 228V231.2M706.6 228.1V231.5M708.6 227.7V230.9M710.6 227.9V230.8M712.6 227.7V230.9M714.6 227.5V231.3M716.6 228.2V231.6M718.6 228V231.4M720.6 228.5V231.5M722.6 228.4V231.2M724.6 227.8V231.2M726.6 228.3V231.4M728.6 228.4V231.1M730.6 228V231M732.6 227.9V231.4M734.6 228.4V231.5M736.6 228.6V231.5M738.6 228.1V231.1M740.6 227.9V231.2M742.6 228.2V231.2M744.6 228.1V231.2M746.6 228.4V231.4M748.6 228V231.4M750.6 228.4V230.9M752.6 228.1V231.4M754.6 228V231.1M756.6 228.5V231M758.6 228.5V231.1M760.6 228.6V231M762.6 228.2V230.9M764.6 227.8V230.9M766.6 227.7V231.5M768.6 228.4V231.1M770.6 228.2V230.9M772.6 228.3V231.7M774.6 227.8V231.3M776.6 228.5V230.9M778.6 228.2V230.9M780.6 228.2V231.2M782.6 228.5V231.2M784.6 228.1V231.7M786.6 228.5V231.2M788.6 228.5V231.5M790.6 228.5V230.9M792.6 228.2V231.6M794.6 228.4V231.4M796.6 228.6V231.3M798.6 228.4V231.3M800.6 228V231.3M802.6 228.4V231.3M804.6 228.4V231.4M806.6 228.5V231.5M808.6 228.6V231M810.6 228.3V231.1M812.6 228.4V231M814.6 228.1V230.8M816.6 228.5V230.8M818.6 228V231M820.6 227.9V231.4M822.6 228.5V230.9M824.6 228.4V231.1M826.6 228.5V231.8M828.6 227.9V231.4M830.6 228.6V230.9M832.6 228.2V230.9M834.6 228V231.1M836.6 227.9V230.9M838.6 228.3V231M840.6 227.9V231M842.6 228V231.5M844.6 228.3V231M846.6 226.8V231M848.6 227.9V231.3M850.6 228.3V231.4M852.6 228.3V231.2M854.6 228V231.5M856.6 228.4V231.4M858.6 228.5V230.9M860.6 228.1V230.9M862.6 228.3V231.3M864.6 227.9V231.4M866.6 228.1V231.2M868.6 228.4V231.4M870.6 228.6V231.2M872.6 228.5V231.2M874.6 228.2V231.4M876.6 228.4V230.9M878.6 228.3V231.1M880.6 227.3V231.4M882.6 228.4V231.5M884.6 228.3V231.4M886.6 228.4V231M888.6 228.3V231.2M890.6 228.4V231M892.6 228.5V231.2M894.6 227.8V231.2M896.6 228.3V231.4M898.6 228.4V230.9M900.6 228.2V230.9M902.6 228.4V231M904.6 228V230.9M906.6 228.2V231.3M908.6 228V231.1M910.6 228.4V231.4M912.6 228.4V231.1M914.6 228.3V231.7M916.6 228.6V231.6M918.6 228V231.2M920.6 228.2V231.4M922.6 228.1V231M924.6 228.4V231M926.6 228.2V231.2M928.6 227.9V231.1M930.6 228.1V231.5M932.6 228.2V231.2M934.6 228.3V231.1M936.6 228.2V231.2M938.6 228.1V231.5M940.6 228V231.3M942.6 228V231.5M944.6 228.1V231.4M946.6 228.4V231.2M948.6 228V231.2M950.6 228.2V231M952.6 228.1V231.5M954.6 227.9V231.3M956.6 228.1V231.5M958.6 228.2V231M960.6 228.3V231M962.6 228V231.4M964.6 228V231.1M966.6 228V231.2M968.6 227.8V231.4M970.6 228.4V232.3M972.6 228.3V231.4M974.6 227V231.3M976.6 228.4V231.1M978.6 227.9V231M980.6 227.8V231.1M982.6 228.5V231.5M984.6 228.3V231M986.6 228.2V230.9M988.6 228V231.5M990.6 228.5V231.1M992.6 228.6V231.1M994.6 228.4V231.4M996.6 228.3V231.3M998.6 228.3V231M1000.6 226.8V231.6M1002.6 228.3V231.4M1004.6 228.3V231M1006.6 228V231.1M1008.6 228.5V231.4M1010.6 228.4V230.8M1012.6 228.1V231.2M1014.6 228.3V231.5M1016.6 228.4V231.5M1018.6 228.2V231.3M1020.6 227.7V231.2M1022.6 228.6V232M1024.6 228.4V231.4M1026.6 228.1V231.2M1028.6 228.3V231.1M1030.6 228.4V231.4M1032.6 228.3V230.9M1034.6 228.4V231M1036.6 227.9V231.3M1038.6 228.4V231M1040.6 228.3V231.4M1042.6 228.1V231.3M1044.6 228.4V230.8M1046.6 228V231.4M1048.6 227.9V230.8M1050.6 228.3V230.9M1052.6 228.5V231.3M1054.6 228V231.5M1056.6 228.2V230.8M1058.6 227.1V231.3M1060.6 228.1V230.9M1062.6 228.3V231M1064.6 228.1V231.4M1066.6 227.9V231.2M1068.6 228.3V230.8M1070.6 227.9V231.2M1072.6 225.9V231.1M1074.6 227.9V231.2M1076.6 227.9V231.4M1078.6 228.4V230.9M1080.6 228.5V231.5M1082.6 227V231.3M1084.6 228.2V231.4M1086.6 228.4V231.1M1088.6 228.2V230.9M1090.6 227.6V231M1092.6 227.9V231.6M1094.6 228.4V231.5M1096.6 228.3V231.5M1098.6 228.5V230.9M1100.6 228.5V231.4M1102.6 227.5V231.2M1104.6 228.2V231.1M1106.6 228.6V231.1M1108.6 227.9V231.4M1110.6 228.1V231.1M1112.6 227.4V231.3M1114.6 228V231.3M1116.6 227.8V231.4M1118.6 227.9V231.1M1120.6 228.5V231.4M1122.6 228.1V231.3M1124.6 228.5V231M1126.6 228.1V231.5M1128.6 227.9V231.5M1130.6 228.2V231.3M1132.6 228.5V231.4M1134.6 227.1V231.2M1136.6 227.9V231M1138.6 228.5V231.1M1140.6 228.5V230.9M1142.6 228V230.9M1144.6 228.3V231.4M1146.6 228.1V231.1M1148.6 228.2V231.2M1150.6 227.9V231.4M1152.6 227.9V231.6M1154.6 227.9V231.2M1156.6 228V230.9M1158.6 228.4V231M1160.6 228.3V231.7M1162.6 228.5V230.9M1164.6 228.4V231.5M1166.6 228.5V231.5M1168.6 228.2V231.1M1170.6 228.4V230.8M1172.6 227.5V231.5M1174.6 228.3V231.2M1176.6 228.5V230.9M1178.6 227.9V230.9M1180.6 228.5V231.6M1182.6 228V231.1M1184.6 228V231.5M1186.6 228V231.5M1188.6 228.2V231.3M1190.6 227.9V231.3M1192.6 228.3V231.3M1194.6 227.9V231.4M1196.6 228.6V231.3M1198.6 228.4V231.1M1200.6 228.2V231.2M1202.6 227.9V231.5M1204.6 227.8V231.1M1206.6 227.5V230.9M1208.6 228.4V230.9M1210.6 228.2V230.9M1212.6 228.3V230.9M1214.6 228V230.9M1216.6 228.1V231.2M1218.6 228.4V231.4M1220.6 228.5V231.3M1222.6 228.5V230.8M1224.6 228V231M1226.6 228.3V231.5M1228.6 228.2V231.5M1230.6 228.5V231.1M1232.6 228V231.1M1234.6 227.9V231.5M1236.6 227.9V231.4M1238.6 228V231.1M1240.6 227.9V231.3M1242.6 227.9V231.4M1244.6 228.2V231.1M1246.6 227.9V231.1M1248.6 228.2V230.9M1250.6 227.9V231.2M1252.6 228.2V230.9M1254.6 228.4V231M1256.6 228V231.1M1258.6 228V231.5M1260.6 228.1V231M1262.6 228V231M1264.6 228.3V231.2M1266.6 228.5V231.3M1268.6 228.2V230.9M1270.6 227.9V231.3M1272.6 228.5V230.9M1274.6 228.5V231M1276.6 228V231.3M1278.6 228.6V231.2M1280.6 228.3V231.4M1282.6 228.4V231.6M1284.6 228.5V231M1286.6 227.7V231.5M1288.6 228.2V231.4M1290.6 228V231.5" stroke="#ff69b4" stroke-width="2.15" fill="none"/>
<rect x="699.6" y="259.8" width="590.4" height="2" fill="#ff0000" />
<path d="M1269.8 77V274.2M1250.2 77V274.2M1230.5 77V274.2M1210.8 77V274.2M1191.2 77V274.2M1151.9 77V274.2M1132.2 77V274.2M1112.5 77V274.2M1092.9 77V274.2M1073.2 77V274.2M1033.9 77V274.2M1014.2 77V274.2M994.5 77V274.2M974.9 77V274.2M955.2 77V274.2M915.9 77V274.2M896.2 77V274.2M876.6 77V274.2M856.9 77V274.2M837.2 77V274.2M797.9 77V274.2M778.3 77V274.2M758.6 77V274.2M738.9 77V274.2M719.3 77V274.2M699.6 261H1290M699.6 224.4H1290M699.6 187.8H1290M699.6 151.2H1290M699.6 114.6H1290" stroke="rgba(255,255,255,0.11)" stroke-width="1" fill="none"/>
<path d="M1289.5 77V274.2M1171.5 77V274.2M1053.5 77V274.2M935.6 77V274.2M817.6 77V274.2" stroke="rgba(255,255,255,0.15)" stroke-width="1" fill="none"/>
<path d="M699.5 77V274.5H1292" stroke="#a4a4a4" stroke-width="1" fill="none"/>
<text x="693.8" y="267" font-size="14.5" fill="#e2e2e2" text-anchor="end" >0</text>
<text x="693.8" y="230.4" font-size="14.5" fill="#e2e2e2" text-anchor="end" >0.1</text>
<text x="693.8" y="193.8" font-size="14.5" fill="#e2e2e2" text-anchor="end" >0.2</text>
<text x="693.8" y="157.2" font-size="14.5" fill="#e2e2e2" text-anchor="end" >0.3</text>
<text x="693.8" y="120.6" font-size="14.5" fill="#e2e2e2" text-anchor="end" >0.4</text>
<rect x="709.5" y="87.5" width="282" height="99" fill="rgba(100,100,100,0.17)" stroke="rgba(160,160,160,0.45)" stroke-width="1"/>
<rect x="718" y="96.5" width="23" height="23" fill="#ff0000" />
<text x="747.8" y="114" font-size="14" fill="#ececec" textLength="224.5" lengthAdjust="spacingAndGlyphs" >H1:SQZ-OPO_IR_PD_LF_OUTPUT</text>
<rect x="718" y="125.5" width="23" height="23" fill="#800000" />
<text x="747.8" y="143" font-size="14" fill="#ececec" textLength="174.5" lengthAdjust="spacingAndGlyphs" >H1:SQZ-RLF_QPD_A_SUM</text>
<rect x="718" y="154.5" width="23" height="23" fill="#ff69b4" />
<text x="747.8" y="172" font-size="14" fill="#ececec" textLength="233" lengthAdjust="spacingAndGlyphs" >H1:SQZ-FC_TRANS_D_LF_OUTPUT</text>
<text x="1171.5" y="293.8" font-size="14.5" fill="#e2e2e2" text-anchor="middle" textLength="26" lengthAdjust="spacingAndGlyphs" >-1m</text>
<text x="1053.5" y="293.8" font-size="14.5" fill="#e2e2e2" text-anchor="middle" textLength="26" lengthAdjust="spacingAndGlyphs" >-2m</text>
<text x="935.6" y="293.8" font-size="14.5" fill="#e2e2e2" text-anchor="middle" textLength="26" lengthAdjust="spacingAndGlyphs" >-3m</text>
<text x="817.6" y="293.8" font-size="14.5" fill="#e2e2e2" text-anchor="middle" textLength="26" lengthAdjust="spacingAndGlyphs" >-4m</text>
<clipPath id="cz164"><rect x="1269.5" y="273.8" width="22.5" height="30"/></clipPath><g clip-path="url(#cz164)">
<text x="1289.5" y="293.8" font-size="14.5" fill="#e2e2e2" text-anchor="middle" >0</text>
</g>
<text x="699.1" y="293.8" font-size="14.5" fill="#e2e2e2" textLength="13.5" lengthAdjust="spacingAndGlyphs" >m</text>
<text transform="translate(661 178) rotate(-90)" x="0" y="5" font-size="14.5" fill="#e2e2e2" text-anchor="middle" textLength="53.5" lengthAdjust="spacingAndGlyphs">undef/V</text>
<path d="M705.2 316.1V321.2M706.8 316.2V321.5M708.2 316.6V321.7M709.8 316.6V321.6M711.2 314.7V321.2M712.8 316.4V321.2M714.2 316.6V321.8M715.8 316.8V321.2M717.2 314.9V321.4M718.8 316.2V321.4M720.2 316.2V321.8M721.8 316.2V321.8M723.2 316.6V322.5M724.8 314.7V321.3M726.2 316.2V321.1M727.8 316.9V323.3M729.2 316.4V321.7M730.8 316.8V322.2M732.2 316.4V321.5M733.8 316.5V321.2M735.2 316.1V321.5M736.8 316.8V321.5M738.2 316.5V321.3M739.8 316.6V321.9M741.2 316.8V321.5M742.8 316.8V321.6M744.2 316.8V321.9M745.8 316.5V321.3M747.2 316.3V321.4M748.8 316.1V322.9M750.2 316.7V321.6M751.8 316.4V321.7M753.2 316.5V321.7M754.8 316.7V321.4M756.2 316.2V321.3M757.8 316.8V321.8M759.2 316.4V321.8M760.8 316.8V321.1M762.2 316.6V321.3M763.8 316.4V321.4M765.2 316.6V321.7M766.8 316.7V321.8M768.2 316.1V321.3M769.8 316.4V322M771.2 316.2V321.5M772.8 316.5V322.5M774.2 316.5V321.1M775.8 316.7V323M777.2 316.7V322.2M778.8 316.5V321.4M780.2 316.6V321.4M781.8 316.3V321.7M783.2 316.3V321.3M784.8 315.3V321.8M786.2 316.4V321.5M787.8 316.3V323.1M789.2 316.2V322.3M790.8 316.3V321.2M792.2 316.5V321.3M793.8 316.6V321.4M795.2 316.7V321.5M796.8 316.6V321.1M798.2 316.7V321.5M799.8 316.5V321.3M801.2 316.8V321.6M802.8 316.7V321.2M804.2 316.9V321.8M805.8 316.5V321.7M807.2 316.8V321.1M808.8 316.3V321.8M810.2 316.3V321.8M811.8 315.6V321.9M813.2 316.4V321.8M814.8 316.7V321.7M816.2 316.8V321.4M817.8 316.4V321.3M819.2 316.9V321.4M820.8 316.8V321.8M822.2 314.8V321.9M823.8 316.6V321.6M825.2 315.6V321.3M826.8 316.3V321.1M828.2 316.2V321.2M829.8 316.7V321.6M831.2 316.9V321.4M832.8 316.5V321.7M834.2 315.4V321.9M835.8 316.4V321.8M837.2 316.5V322.9M838.8 316.3V321.5M840.2 316.4V321.8M841.8 316.3V321.6M843.2 316.4V321.8M844.8 316.7V321.3M846.2 316.4V321.9M847.8 314.8V321.9M849.2 316.7V321.9M850.8 316.5V321.8M852.2 316.5V321.4M853.8 316.3V321.3M855.2 316.4V322.7M856.8 316.1V321.3M858.2 316.1V321.5M859.8 316.4V321.5M861.2 316.1V321.6M862.8 316.5V321.2M864.2 315.4V322.7M865.8 315V321.3M867.2 315.3V321.2M868.8 316.8V321.4M870.2 316.7V321.9M871.8 316.4V321.9M873.2 316.5V321.7M874.8 315.4V321.7M876.2 315.5V321.5M877.8 316.4V321.6M879.2 315.1V321.4M880.8 316.4V321.1M882.2 316.1V321.7M883.8 316.2V321.5M885.2 316.2V321.3M886.8 316.6V321.5M888.2 315V322M889.8 316.7V321.6M891.2 316.9V321.7M892.8 316.2V321.6M894.2 316.7V321.2M895.8 316.6V321.4M897.2 316.3V321.4M898.8 316.6V321.5M900.2 316.7V321.4M901.8 316.3V321.6M903.2 316.3V323.3M904.8 316.7V321.7M906.2 316.3V321.2M907.8 315.3V321.3M909.2 316.4V321.9M910.8 316.7V321.2M912.2 316.8V321.5M913.8 316.5V321.9M915.2 316.6V321.3M916.8 315.5V321.7M918.2 316.4V321.2M919.8 316.2V321.7M921.2 316.2V321.9M922.8 316.5V321.5M924.2 315.8V321.7M925.8 316.8V321.5M927.2 316.1V321.7M928.8 316.4V321.8M930.2 316.4V321.4M931.8 315.8V321.2M933.2 316.6V321.3M934.8 316.2V321.3M936.2 316.6V321.4M937.8 316.4V323.3M939.2 316.7V322.4M940.8 316.6V321.8M942.2 316.4V321.7M943.8 315.1V321.4M945.2 316.9V321.8M946.8 316.4V321.7M948.2 316.9V321.4M949.8 316.3V321.4M951.2 316.6V321.1M952.8 316.5V321.2M954.2 316.9V321.5M955.8 315.7V321.1M957.2 316.1V321.8M958.8 316.5V321.1M960.2 315.1V321.7M961.8 316.4V321.3M963.2 316.2V321.1M964.8 316.9V321.6M966.2 316.4V321.4M967.8 316.2V321.6M969.2 314.5V321.3M970.8 316.1V321.2M972.2 316.7V321.2M973.8 316.1V321.9M975.2 315.8V321.4M976.8 316.6V321.5M978.2 316.2V321.2M979.8 316.4V321.2M981.2 316.2V321.1M982.8 316.6V321.6M984.2 316.8V321.4M985.8 316.4V321.5M987.2 316.8V321.3M988.8 316.2V322.7M990.2 316.5V321.2M991.8 316.6V321.5M993.2 316.3V321.6M994.8 316.2V321.8M996.2 316.7V321.8M997.8 316.6V321.2M999.2 316.3V321.8M1000.8 316.7V321.1M1002.2 316.2V321.9M1003.8 316.7V322.1M1005.2 316.8V321.2M1006.8 316.3V321.1M1008.2 315.2V321.9M1009.8 316.6V321.7M1011.2 316.5V321.7M1012.8 316.4V321.1M1014.2 316.2V321.6M1015.8 316.4V321.3M1017.2 316.8V321.2M1018.8 316.3V321.6M1020.2 316.8V321.3M1021.8 316.2V321.2M1023.2 316.4V321.4M1024.8 316.7V321.7M1026.2 316.2V321.2M1027.8 316.3V321.5M1029.2 315.8V321.5M1030.8 316.4V321.6M1032.2 316.9V323M1033.8 316.3V321.8M1035.2 316.5V321.6M1036.8 316.4V321.3M1038.2 316.4V321.8M1039.8 316.7V321.7M1041.2 316.4V321.9M1042.8 316.2V321.8M1044.2 316.7V321.4M1045.8 316.6V321.3M1047.2 316.9V321.5M1048.8 316.3V321.7M1050.2 316.9V321.2M1051.8 316.6V321.5M1053.2 316.2V321.2M1054.8 316.4V321.4M1056.2 316.2V321.7M1057.8 316.8V321.2M1059.2 315.6V321.7M1060.8 315.1V323.2M1062.2 316.5V321.7M1063.8 316.6V321.6M1065.2 316.4V321.6M1066.8 316.3V321.3M1068.2 316.3V321.6M1069.8 316.3V321.9M1071.2 316.4V321.2M1072.8 316.4V321.2M1074.2 316.8V322.7M1075.8 314.5V321.3M1077.2 316.7V321.4M1078.8 316.7V321.4M1080.2 316.1V321.3M1081.8 316.4V321.7M1083.2 316.4V321.4M1084.8 316.4V321.6M1086.2 316.3V321.7M1087.8 316.9V321.4M1089.2 316.3V321.6M1090.8 316.9V321.2M1092.2 316.1V323M1093.8 316.7V321.7M1095.2 316.3V321.4M1096.8 316.4V321.1M1098.2 316.4V321.8M1099.8 316.3V321.1M1101.2 316.2V322.6M1102.8 316.5V321.3M1104.2 316V321.4M1105.8 316.3V321.5M1107.2 315V321.1M1108.8 316.5V321.9M1110.2 316.7V321.7M1111.8 316.7V321.8M1113.2 315V322.3M1114.8 316.1V321.4M1116.2 316.6V321.8M1117.8 316.4V321.9M1119.2 316.8V321.9M1120.8 316.8V321.5M1122.2 316.9V321.6M1123.8 314.6V321.3M1125.2 316.5V321.6M1126.8 316.2V321.8M1128.2 315.1V321.8M1129.8 316.5V321.6M1131.2 316.2V321.2M1132.8 316.5V321.4M1134.2 316.3V321.5M1135.8 316.3V321.9M1137.2 316.5V322.2M1138.8 316.4V321.1M1140.2 316.3V323.3M1141.8 316.3V321.7M1143.2 316V321.5M1144.8 316.4V321.1M1146.2 316.5V321.5M1147.8 316.3V322.2M1149.2 316.8V321.9M1150.8 316.6V321.5M1152.2 316.6V321.4M1153.8 316.8V321.4M1155.2 316.9V321.7M1156.8 316.4V321.7M1158.2 316.4V321.7M1159.8 316.8V321.2M1161.2 316.6V321.8M1162.8 316.5V321.7M1164.2 316.3V321.5M1165.8 316.6V321.5M1167.2 316.8V321.8M1168.8 316.4V321.9M1170.2 316.8V321.9M1171.8 316.3V321.6M1173.2 316.8V321.6M1174.8 315.3V321.6M1176.2 316.7V321.2M1177.8 316.2V322.3M1179.2 316.4V321.9M1180.8 316.4V321.8M1182.2 315.1V321.6M1183.8 316.8V322.9M1185.2 316.5V321.5M1186.8 316.3V321.4M1188.2 316.5V321.3M1189.8 316.8V321.7M1191.2 316.4V321.6M1192.8 316.3V321.9M1194.2 316.6V321.6M1195.8 316.3V321.1M1197.2 315.7V321.1M1198.8 316.3V321.5M1200.2 316.6V321.4M1201.8 316.3V321.6M1203.2 316.7V321.4M1204.8 316.6V321.5M1206.2 316.1V321.4M1207.8 316.8V321.2M1209.2 316.2V321.9M1210.8 316.2V321.3M1212.2 316.3V321.3M1213.8 316.8V321.5M1215.2 316.2V322.8M1216.8 316.2V321.8M1218.2 316.7V322.9M1219.8 316.5V321.2M1221.2 316.3V321.5M1222.8 316.4V321.4M1224.2 316.6V321.7M1225.8 316.6V321.6M1227.2 316.9V321.3M1228.8 316.2V321.8M1230.2 316.5V321.2M1231.8 316.4V321.5M1233.2 316.2V321.3M1234.8 315.2V322.3M1236.2 316.2V321.7M1237.8 316.5V321.9M1239.2 316.8V321.7M1240.8 316.8V321.8M1242.2 316.4V321.1M1243.8 316.4V321.8M1245.2 316.3V321.2M1246.8 316.2V321.7M1248.2 316.9V322.9M1249.8 316.7V321.5M1251.2 315.4V321.7M1252.8 316.3V321.6M1254.2 316.8V321.7M1255.8 316.9V321.9M1257.2 316.7V321.3M1258.8 316.5V321.7M1260.2 316.6V321.3M1261.8 316.7V321.8M1263.2 316.7V322.5M1264.8 316.3V321.1M1266.2 316.7V321.1M1267.8 316.1V321.6M1269.2 316.2V321.3M1270.8 316.6V321.9M1272.2 316.7V321.6M1273.8 316.7V321.4M1275.2 316.7V321.6M1276.8 316.3V321.7M1278.2 316.6V321.3M1279.8 316.6V321.7M1281.2 316.4V321.1M1282.8 316.5V321.3M1284.2 316.6V321.2M1285.8 316.4V321.8M1287.2 316.3V323M1288.8 316.6V321.1M1290.2 314.6V321.5" stroke="#7cfc00" stroke-width="1.85" fill="none"/>
<path d="M705.2 518.7V525.4M706.8 519.3V525.3M708.2 519.3V524.9M709.8 518.8V525M711.2 517.2V525.2M712.8 519.1V525.4M714.2 519.2V524.6M715.8 518.8V525.5M717.2 519.1V524.8M718.8 519V525.2M720.2 518.7V524.9M721.8 518.7V524.9M723.2 519.3V524.6M724.8 518.8V525.3M726.2 518.9V524.7M727.8 519V525.3M729.2 518.9V526M730.8 519.2V525.4M732.2 519.3V524.9M733.8 518.9V525.2M735.2 518.7V526.2M736.8 519V525.1M738.2 518.8V524.9M739.8 518.8V526.6M741.2 518.6V524.8M742.8 518.7V525M744.2 519.3V525M745.8 519.1V524.8M747.2 518.7V525M748.8 518.9V524.7M750.2 519.4V524.9M751.8 519.3V524.8M753.2 518.9V527.1M754.8 519V524.7M756.2 519V525.1M757.8 519.2V525.1M759.2 519.4V525.4M760.8 517.4V524.9M762.2 518.7V524.7M763.8 517.9V524.9M765.2 518.7V525.5M766.8 518.9V525.4M768.2 519.4V525.5M769.8 518.7V525.4M771.2 519.1V525.2M772.8 519.3V524.8M774.2 519.2V525.3M775.8 519.2V525.4M777.2 519.1V525.5M778.8 518.4V524.7M780.2 519.3V525.2M781.8 519.2V525.2M783.2 519.3V525.4M784.8 519.1V525.2M786.2 519.1V524.6M787.8 518.1V525M789.2 518.9V525.3M790.8 518V525.3M792.2 519.2V525.1M793.8 518.9V524.9M795.2 518.8V525M796.8 519.2V525.9M798.2 518.9V525.3M799.8 519.3V524.7M801.2 518.7V524.6M802.8 519.4V525.2M804.2 519.1V525.4M805.8 519.4V524.8M807.2 518.9V524.6M808.8 517.2V524.6M810.2 519.3V525.4M811.8 518.7V525.2M813.2 519.3V525.1M814.8 519V525.2M816.2 519.3V525M817.8 519.1V524.9M819.2 518.8V525.5M820.8 519V525.1M822.2 518.8V525.1M823.8 519.1V524.8M825.2 518.6V526.7M826.8 519.3V524.7M828.2 518.7V525.3M829.8 518.5V526.6M831.2 519.2V525.1M832.8 518.9V525.3M834.2 518.9V525.3M835.8 518.8V525.3M837.2 519.1V525.3M838.8 519.1V524.7M840.2 518.6V524.9M841.8 518.9V525.3M843.2 519.1V525.2M844.8 519.3V525.2M846.2 518.9V524.6M847.8 518.7V525M849.2 519.1V527.3M850.8 518.6V527.4M852.2 518.8V524.7M853.8 519.4V524.7M855.2 519.2V525.7M856.8 519.4V525.3M858.2 516.9V525.4M859.8 518.8V524.6M861.2 519.3V525.3M862.8 518.6V525.3M864.2 519.2V525.5M865.8 519.4V524.6M867.2 518.8V524.7M868.8 518.5V525.3M870.2 518.9V525.5M871.8 518.9V525.2M873.2 519.3V525M874.8 519.3V524.9M876.2 519V525.2M877.8 519V525.1M879.2 519.4V525M880.8 518.9V525.2M882.2 518.8V525.3M883.8 519V524.9M885.2 518.7V525.4M886.8 518.9V524.9M888.2 518.3V526.3M889.8 519.1V524.9M891.2 519.4V525.4M892.8 519.3V524.7M894.2 518.5V525.3M895.8 518.8V524.9M897.2 519.4V525.1M898.8 519.3V525.5M900.2 518.6V524.7M901.8 517.4V525M903.2 519.3V526.3M904.8 519.1V525.1M906.2 519.3V525.4M907.8 518.8V526.3M909.2 518.9V525.4M910.8 518.7V525.1M912.2 518.9V524.9M913.8 517.8V525.4M915.2 519.2V526.7M916.8 519V526.1M918.2 518.8V525.5M919.8 519V525.4M921.2 518.5V527M922.8 519V525.2M924.2 518.5V525.3M925.8 519.1V524.6M927.2 519V525M928.8 519V524.7M930.2 518.7V526.4M931.8 517.8V525.2M933.2 518.6V526.2M934.8 518.8V524.6M936.2 517.7V525.4M937.8 519.2V524.9M939.2 519.1V525M940.8 518.6V524.7M942.2 518.8V525.5M943.8 519V525.1M945.2 518.8V525M946.8 519V525.7M948.2 519.4V525.2M949.8 519V525.3M951.2 519.1V524.8M952.8 518.6V525.3M954.2 518.8V524.8M955.8 519.3V524.9M957.2 518.7V525M958.8 518.5V525.3M960.2 518.7V526.6M961.8 518.5V526.9M963.2 518.4V524.7M964.8 518.9V525.7M966.2 519.3V524.8M967.8 519V526.4M969.2 519.4V525M970.8 519V525.4M972.2 519.1V525M973.8 519.2V526.6M975.2 518.8V524.6M976.8 517.8V526.1M978.2 519.2V525.1M979.8 519.4V525.2M981.2 518.7V524.8M982.8 519V525.5M984.2 518.7V525.3M985.8 519.2V525.4M987.2 518.3V525.3M988.8 518.7V525.4M990.2 519.3V525.2M991.8 518.9V526.6M993.2 518.9V525.4M994.8 518.9V526.2M996.2 519.1V526.7M997.8 519.2V524.8M999.2 518.9V525.2M1000.8 518.9V525.5M1002.2 517.2V525.1M1003.8 519.3V525M1005.2 519.3V524.8M1006.8 518.6V524.8M1008.2 518.7V524.9M1009.8 518.7V525.3M1011.2 519.3V525.4M1012.8 519.3V527.2M1014.2 519.1V525.4M1015.8 519.1V525.1M1017.2 518.9V525M1018.8 519.1V524.7M1020.2 518.8V525.5M1021.8 519.3V525.4M1023.2 519.2V525.1M1024.8 517.9V525.5M1026.2 518.1V524.9M1027.8 518.6V525.5M1029.2 517.8V524.9M1030.8 519.3V525.2M1032.2 519.3V524.7M1033.8 518.9V524.9M1035.2 519V525.3M1036.8 518.6V526.3M1038.2 518.6V525M1039.8 519.2V525.4M1041.2 519.1V524.8M1042.8 519.3V525.4M1044.2 518.9V525.1M1045.8 519V524.7M1047.2 519V524.7M1048.8 519.2V526.5M1050.2 519.1V525M1051.8 518.9V525.5M1053.2 518.7V524.7M1054.8 518.1V525.3M1056.2 518.7V524.8M1057.8 519V524.6M1059.2 518V524.7M1060.8 518.8V525.4M1062.2 518.7V525.2M1063.8 519V524.9M1065.2 518.8V524.6M1066.8 518.6V525.5M1068.2 518.8V525.5M1069.8 518.7V525.1M1071.2 518.9V525M1072.8 519.1V525M1074.2 519.3V525.2M1075.8 519.4V524.8M1077.2 518.6V525.2M1078.8 519.2V524.9M1080.2 518.6V525.1M1081.8 518.5V524.8M1083.2 519.1V525M1084.8 519.4V525.4M1086.2 519V525.4M1087.8 518.9V525.2M1089.2 519.2V525.4M1090.8 518.5V525.3M1092.2 519V524.8M1093.8 519.1V525.1M1095.2 519.2V525.4M1096.8 519.4V525.3M1098.2 519.3V524.7M1099.8 518.5V524.7M1101.2 518.8V526.2M1102.8 518.7V525.4M1104.2 519.3V524.8M1105.8 518.9V525.2M1107.2 518.5V526.7M1108.8 518.5V525M1110.2 519.4V524.9M1111.8 518.7V525M1113.2 518.7V525M1114.8 519.3V524.7M1116.2 518.3V524.6M1117.8 517.2V525.3M1119.2 519.3V525.3M1120.8 517.6V525.3M1122.2 518.7V525.3M1123.8 519.1V524.8M1125.2 518.5V524.8M1126.8 519V524.7M1128.2 519V525.4M1129.8 518.6V524.8M1131.2 519.1V525.1M1132.8 518.7V526M1134.2 519V525M1135.8 518.7V524.9M1137.2 518.9V525.1M1138.8 518.5V525.4M1140.2 519.2V525M1141.8 517.7V525.1M1143.2 518.8V524.7M1144.8 519V524.7M1146.2 519.1V524.6M1147.8 519.2V524.8M1149.2 517.9V524.7M1150.8 519.3V525.3M1152.2 518.9V524.6M1153.8 519.1V525.1M1155.2 519.2V525M1156.8 518.5V525M1158.2 519.3V526.6M1159.8 518.9V525M1161.2 518.8V525.4M1162.8 519.1V525.1M1164.2 518.8V524.9M1165.8 518.3V525.3M1167.2 519.2V525.3M1168.8 518.7V525.1M1170.2 519.4V525M1171.8 518.3V525.2M1173.2 519.4V525.4M1174.8 517.3V524.9M1176.2 519.1V524.8M1177.8 518.7V525.1M1179.2 518.5V524.8M1180.8 518.6V524.7M1182.2 519V525.5M1183.8 519V526.7M1185.2 518.6V524.9M1186.8 519.4V525M1188.2 519.3V524.9M1189.8 519.4V525.1M1191.2 519.3V526.8M1192.8 519V527M1194.2 518.6V525M1195.8 519.4V525.5M1197.2 519.4V524.9M1198.8 519.4V525.9M1200.2 518.6V525.1M1201.8 518.9V527M1203.2 519.1V524.9M1204.8 519.3V525.2M1206.2 518.5V525.4M1207.8 518.7V525.1M1209.2 518.5V525M1210.8 519.1V525.6M1212.2 518.7V525.4M1213.8 519.4V524.8M1215.2 519.2V525.4M1216.8 518.5V524.7M1218.2 518.9V525.1M1219.8 519.2V525.2M1221.2 518.5V524.7M1222.8 519V524.9M1224.2 518.9V524.9M1225.8 518.8V524.8M1227.2 519.2V526M1228.8 518.9V525M1230.2 519V526.4M1231.8 519.2V524.6M1233.2 519V526.8M1234.8 518.8V525M1236.2 518.6V524.9M1237.8 518.8V524.9M1239.2 518.7V525.3M1240.8 519.2V524.7M1242.2 518.8V525.4M1243.8 519.3V524.7M1245.2 519.1V525.4M1246.8 518.8V524.9M1248.2 519.3V524.9M1249.8 518.9V524.7M1251.2 518.7V525.3M1252.8 518.7V524.9M1254.2 519V524.8M1255.8 519.1V524.7M1257.2 519.1V524.8M1258.8 518.6V525.2M1260.2 518.5V525.4M1261.8 518.7V525.9M1263.2 519V525.1M1264.8 517.8V525.3M1266.2 518.5V525.4M1267.8 519V525.1M1269.2 519.1V524.9M1270.8 517.3V525M1272.2 518.8V524.8M1273.8 519.2V524.7M1275.2 518.7V524.8M1276.8 519.2V525M1278.2 518.7V524.9M1279.8 517.9V526.3M1281.2 518.9V524.7M1282.8 518.7V524.8M1284.2 519V525.4M1285.8 518.8V525M1287.2 518.6V525.3M1288.8 519.3V524.8M1290.2 519V525.3" stroke="#138a13" stroke-width="1.85" fill="none"/>
<path d="M704.5 355 721 355 721 340 838.7 340 838.7 349.4 955.7 349.4 955.7 344 1073.8 344 1073.8 356 1191.2 356 1191.2 336 1290 336" stroke="#a01010" stroke-width="2" fill="none"/>
<path d="M1270 302V540.2M1250.5 302V540.2M1231 302V540.2M1211.5 302V540.2M1192 302V540.2M1153 302V540.2M1133.5 302V540.2M1114 302V540.2M1094.5 302V540.2M1075 302V540.2M1036 302V540.2M1016.5 302V540.2M997 302V540.2M977.5 302V540.2M958 302V540.2M919 302V540.2M899.5 302V540.2M880 302V540.2M860.5 302V540.2M841 302V540.2M802 302V540.2M782.5 302V540.2M763 302V540.2M743.5 302V540.2M724 302V540.2M704.5 522.7H1291M704.5 476.2H1291M704.5 429.7H1291M704.5 383.2H1291M704.5 336.7H1291" stroke="rgba(255,255,255,0.11)" stroke-width="1" fill="none"/>
<path d="M1289.5 302V540.2M1172.5 302V540.2M1055.5 302V540.2M938.5 302V540.2M821.5 302V540.2" stroke="rgba(255,255,255,0.15)" stroke-width="1" fill="none"/>
<path d="M704.5 302V540.5H1292" stroke="#a4a4a4" stroke-width="1" fill="none"/>
<text x="698.5" y="527.7" font-size="14.5" fill="#e2e2e2" text-anchor="end" >110</text>
<text x="698.5" y="481.2" font-size="14.5" fill="#e2e2e2" text-anchor="end" >120</text>
<text x="698.5" y="434.7" font-size="14.5" fill="#e2e2e2" text-anchor="end" >130</text>
<text x="698.5" y="388.2" font-size="14.5" fill="#e2e2e2" text-anchor="end" >140</text>
<text x="698.5" y="341.7" font-size="14.5" fill="#e2e2e2" text-anchor="end" >150</text>
<rect x="714.5" y="312.5" width="434" height="99" fill="rgba(100,100,100,0.17)" stroke="rgba(160,160,160,0.45)" stroke-width="1"/>
<rect x="723" y="321.0" width="23" height="23" fill="#008000" />
<text x="751.8" y="338.5" font-size="14" fill="#ececec" textLength="248" lengthAdjust="spacingAndGlyphs" >H1:SQZ-FC_REFL_LF_OUTPUT *1000</text>
<rect x="723" y="350.0" width="23" height="23" fill="#7cfc00" />
<text x="751.8" y="367.5" font-size="14" fill="#ececec" textLength="231" lengthAdjust="spacingAndGlyphs" >H1:SQZ-FC_TRANS_C_LF_OUTPUT</text>
<rect x="723" y="379.0" width="23" height="23" fill="#800000" />
<text x="751.8" y="396.5" font-size="14" fill="#ececec" textLength="384.5" lengthAdjust="spacingAndGlyphs" >H1:CDS-SENSMON_CAL_SNSW_EFFECTIVE_RANGE_MPC</text>
<text x="1172.5" y="559" font-size="14.5" fill="#e2e2e2" text-anchor="middle" textLength="26" lengthAdjust="spacingAndGlyphs" >-1m</text>
<text x="1055.5" y="559" font-size="14.5" fill="#e2e2e2" text-anchor="middle" textLength="26" lengthAdjust="spacingAndGlyphs" >-2m</text>
<text x="938.5" y="559" font-size="14.5" fill="#e2e2e2" text-anchor="middle" textLength="26" lengthAdjust="spacingAndGlyphs" >-3m</text>
<text x="821.5" y="559" font-size="14.5" fill="#e2e2e2" text-anchor="middle" textLength="26" lengthAdjust="spacingAndGlyphs" >-4m</text>
<clipPath id="cz191"><rect x="1269.5" y="539" width="22.5" height="30"/></clipPath><g clip-path="url(#cz191)">
<text x="1289.5" y="559" font-size="14.5" fill="#e2e2e2" text-anchor="middle" >0</text>
</g>
<text x="704.0" y="559" font-size="14.5" fill="#e2e2e2" textLength="13.5" lengthAdjust="spacingAndGlyphs" >m</text>
<text transform="translate(661 423) rotate(-90)" x="0" y="5" font-size="14.5" fill="#e2e2e2" text-anchor="middle" textLength="53.5" lengthAdjust="spacingAndGlyphs">undef/V</text>
<path d="M713.2 581.2V588M714.8 581.3V588.5M716.2 581.6V588.6M717.8 581.9V588.2M719.2 581.8V588.6M720.8 581.3V588.6M722.2 581V588.2M723.8 581.5V588.3M725.2 579.8V588.1M726.8 581.9V588.4M728.2 581.7V588.3M729.8 580.8V587.8M731.2 582V587.9M732.8 581.1V588.1M734.2 581.3V588.2M735.8 581.3V588.2M737.2 581.3V588.4M738.8 581.4V589.4M740.2 581.5V588.2M741.8 581.3V587.8M743.2 581.1V588.1M744.8 581.5V588M746.2 581.9V590M747.8 579.7V587.9M749.2 581.7V588.1M750.8 581.9V587.9M752.2 581.9V588.5M753.8 581.3V588.5M755.2 582V587.9M756.8 581.8V588M758.2 581.2V588.6M759.8 581.9V589.1M761.2 581.7V588.1M762.8 582V588.5M764.2 581.8V588.5M765.8 581.8V587.9M767.2 581.3V588.9M768.8 581.5V587.9M770.2 579.9V588.5M771.8 581.8V587.9M773.2 581.5V588.1M774.8 579.7V588.1M776.2 580.9V588M777.8 581.6V588M779.2 581.9V588.2M780.8 580.1V588.5M782.2 581.1V588.2M783.8 581.4V589.4M785.2 580.6V588.6M786.8 581.9V588.4M788.2 582V588.2M789.8 581.1V588.6M791.2 581.7V588.3M792.8 581.3V589.4M794.2 581.5V588.1M795.8 581.9V588.2M797.2 580.1V588.5M798.8 580.5V587.9M800.2 582V588.3M801.8 581.8V588.3M803.2 581.8V588.1M804.8 581.1V588.6M806.2 581.4V588.4M807.8 581.6V588.5M809.2 581.9V588M810.8 581.3V588.1M812.2 581.7V587.9M813.8 581.5V589.7M815.2 581.6V588.2M816.8 579.7V588.5M818.2 581.6V589.1M819.8 581.5V590M821.2 581.5V587.9M822.8 581.6V588.6M824.2 582V588.2M825.8 581.7V588.5M827.2 581.6V588.1M828.8 581.9V589.4M830.2 579.8V587.8M831.8 581.3V588.7M833.2 581.3V588.5M834.8 581.4V589.9M836.2 581.3V589.1M837.8 581.5V589.2M839.2 581.7V587.9M840.8 581.1V588.4M842.2 581.6V588.4M843.8 581.2V588.5M845.2 581.7V588.6M846.8 581.9V588.4M848.2 580.9V588.6M849.8 581.9V588.2M851.2 580.2V588.6M852.8 581.6V588.7M854.2 581.5V587.9M855.8 581.8V588.5M857.2 581.5V589.7M858.8 581.8V588.1M860.2 581.3V588M861.8 581.1V590.1M863.2 581.5V588.9M864.8 580.6V588.5M866.2 581.3V588.1M867.8 581.7V588.4M869.2 581.4V588.3M870.8 581.8V588.3M872.2 580.5V588.1M873.8 581.7V588.7M875.2 581.7V588M876.8 581.7V587.9M878.2 581.9V588.4M879.8 581.6V588.1M881.2 581.3V589.9M882.8 581.2V588.6M884.2 581.4V588.6M885.8 581.6V588.1M887.2 581.2V588.2M888.8 581.6V588M890.2 581.8V588.5M891.8 580.8V590.3M893.2 581.7V588.1M894.8 581.2V588.1M896.2 580.2V588.2M897.8 581.2V587.9M899.2 581.6V588M900.8 581.9V588.5M902.2 581.5V588.4M903.8 582V588.7M905.2 581.6V588.5M906.8 581.8V588.7M908.2 581.5V588.3M909.8 581.1V588.7M911.2 581.1V588.5M912.8 581.8V589.2M914.2 581.7V588M915.8 581.8V588.4M917.2 582V588.2M918.8 581.5V588.6M920.2 581.4V588M921.8 581.2V588.4M923.2 579.7V587.9M924.8 581.1V588.1M926.2 581.4V588.3M927.8 580.9V589.1M929.2 581.6V588.1M930.8 581.8V588.6M932.2 581.9V588M933.8 581.5V588.6M935.2 581.3V587.9M936.8 580.2V588.3M938.2 581.7V588.1M939.8 579.8V589.1M941.2 581.7V588M942.8 581.7V587.9M944.2 581.5V589.2M945.8 580.6V589M947.2 582V588.2M948.8 581.4V588M950.2 580.4V588.4M951.8 581.7V588.5M953.2 581.8V587.9M954.8 579.8V588.3M956.2 581.9V588.5M957.8 581.9V588.2M959.2 582V588.4M960.8 581.9V588.1M962.2 581.1V588.2M963.8 581.2V589.6M965.2 581.3V588.3M966.8 581.3V588.7M968.2 581.6V588.6M969.8 581.2V588.5M971.2 581.7V589.1M972.8 581.8V587.9M974.2 581.7V588M975.8 581.2V589.5M977.2 581.5V587.9M978.8 581.4V588.4M980.2 581.8V588.2M981.8 581.6V588.7M983.2 581.8V588.4M984.8 579.7V588.3M986.2 581.4V588.1M987.8 581.6V588.1M989.2 581.4V588.1M990.8 581.9V588.1M992.2 582V589.1M993.8 582V588.5M995.2 581.8V588.7M996.8 581.3V588.3M998.2 581.6V588.3M999.8 581.4V588.6M1001.2 581.9V588.5M1002.8 581.9V588.5M1004.2 581.7V588.4M1005.8 581.2V588.4M1007.2 581.3V587.8M1008.8 582V588.6M1010.2 581.8V588.4M1011.8 581.3V588.3M1013.2 581.7V588.6M1014.8 581.8V588.6M1016.2 580.6V588.1M1017.8 581.5V588.5M1019.2 581.7V588.2M1020.8 581.8V588.3M1022.2 581.9V588.5M1023.8 581.7V589M1025.2 582V588.3M1026.8 582V589.1M1028.2 581.7V588.4M1029.8 581.5V588.4M1031.2 581.7V587.8M1032.8 580.9V588.2M1034.2 580.4V588.2M1035.8 581.7V588.1M1037.2 581.3V587.9M1038.8 582V587.9M1040.2 581.8V587.9M1041.8 581.8V589.3M1043.2 581.7V588.1M1044.8 581.5V588.1M1046.2 581.6V588.5M1047.8 581.4V589.6M1049.2 581.9V589.3M1050.8 580.8V588M1052.2 581.8V588.1M1053.8 581.7V587.9M1055.2 581.1V589.7M1056.8 580.4V588.7M1058.2 581.2V588.4M1059.8 581.8V587.9M1061.2 579.6V588M1062.8 581.5V588M1064.2 581.9V588.6M1065.8 581.2V588.5M1067.2 581.7V588.2M1068.8 581.1V588M1070.2 581.5V587.9M1071.8 581.8V588.3M1073.2 581.2V588.5M1074.8 582V588M1076.2 581.3V587.9M1077.8 581.9V588.2M1079.2 580.7V588.7M1080.8 581.3V588.1M1082.2 581.3V587.9M1083.8 582V588.5M1085.2 581.6V588.1M1086.8 581.4V588.4M1088.2 581.7V588.2M1089.8 580.7V588.6M1091.2 581.8V587.9M1092.8 581.8V588.4M1094.2 581.3V587.9M1095.8 581V588.6M1097.2 581.4V587.8M1098.8 581.7V588.1M1100.2 581.3V588.1M1101.8 581.2V588.5M1103.2 579.6V588.6M1104.8 581.7V588.1M1106.2 581.9V588.5M1107.8 581.2V589.7M1109.2 581.6V588.5M1110.8 581.6V588.4M1112.2 581.2V588.2M1113.8 581.6V589.9M1115.2 581.4V588M1116.8 580.1V588.1M1118.2 581.9V588.3M1119.8 581.5V588.3M1121.2 581.7V588.9M1122.8 581.4V589.3M1124.2 581.4V588.3M1125.8 581.2V588.4M1127.2 581.9V588.7M1128.8 581.9V588.2M1130.2 581.5V588.5M1131.8 581.2V588.5M1133.2 581.5V588.3M1134.8 581.3V588.6M1136.2 581.2V588.1M1137.8 581.1V587.9M1139.2 581.5V588M1140.8 582V588.2M1142.2 581.9V588.1M1143.8 581.5V588.2M1145.2 581.8V588.1M1146.8 581.5V588.3M1148.2 580.9V588.7M1149.8 581.7V587.8M1151.2 581.3V589.1M1152.8 581.5V588.1M1154.2 581.7V588.4M1155.8 581.4V588.3M1157.2 581.6V588.5M1158.8 581.6V590.4M1160.2 581.8V588.2M1161.8 581.5V588.8M1163.2 581.3V588M1164.8 581.8V587.9M1166.2 580.9V588.6M1167.8 581.7V588.4M1169.2 581.2V587.9M1170.8 581.3V588.2M1172.2 581.5V588.7M1173.8 581.7V588.3M1175.2 581.7V588.4M1176.8 582V588.6M1178.2 581.6V588.2M1179.8 581.9V587.9M1181.2 581.8V587.9M1182.8 580.1V588.2M1184.2 581.8V587.8M1185.8 581.4V588.1M1187.2 581.4V588.3M1188.8 581.3V588.5M1190.2 581.3V588.5M1191.8 581.6V589.6M1193.2 581.9V588.4M1194.8 580.3V588.6M1196.2 581.5V588M1197.8 582V588.4M1199.2 580V588M1200.8 580.3V587.8M1202.2 581.3V587.8M1203.8 581.9V588M1205.2 581.8V588.3M1206.8 581.7V588.4M1208.2 581.1V588.5M1209.8 581.3V588.5M1211.2 581.8V590M1212.8 581.6V588.3M1214.2 581.8V588.5M1215.8 581.3V588.1M1217.2 581.2V588.5M1218.8 581.4V588.1M1220.2 581.2V589.4M1221.8 581.4V588M1223.2 581.4V588.3M1224.8 581.7V588.3M1226.2 581.7V588.3M1227.8 581.4V589M1229.2 581.4V587.9M1230.8 581.5V588.1M1232.2 581.5V587.8M1233.8 581.6V588.1M1235.2 581.1V587.8M1236.8 581.3V588.7M1238.2 581.6V587.9M1239.8 581.8V588.4M1241.2 581.9V587.9M1242.8 581.7V588.5M1244.2 579.9V587.9M1245.8 581.8V589.8M1247.2 581.9V587.9M1248.8 581.6V588.4M1250.2 581.5V588M1251.8 582V588.1M1253.2 581.3V588.6M1254.8 581.9V588.7M1256.2 580.8V588.6M1257.8 581.9V588.9M1259.2 579.8V588.6M1260.8 581.7V588.7M1262.2 581.6V588.5M1263.8 581.6V588.1M1265.2 581.6V589.1M1266.8 581.3V589.7M1268.2 581.3V587.9M1269.8 580.6V589.6M1271.2 581.8V588.2M1272.8 581.8V587.9M1274.2 581.5V588.6M1275.8 581.6V588.7M1277.2 581.3V588.3M1278.8 581.3V588M1280.2 581.6V588.7M1281.8 581.4V588.3M1283.2 581.9V588.3M1284.8 581.6V588.6M1286.2 581.3V589.3M1287.8 581.4V588.6M1289.2 582V588.3M1290.5 581V588.1" stroke="#ff7f0e" stroke-width="1.85" fill="none"/>
<path d="M713.2 740V750.3M714.8 739.6V747.4M716.2 739.7V749.1M717.8 737.4V747.8M719.2 740.5V748.3M720.8 739.8V747.6M722.2 740.3V747.7M723.8 740.3V747.9M725.2 739.9V747.8M726.8 740.5V748.4M728.2 740.1V747.8M729.8 739.6V747.8M731.2 740.1V747.6M732.8 740.1V748.2M734.2 737.6V748M735.8 740.5V748M737.2 740.6V747.7M738.8 740.2V748M740.2 737.8V747.6M741.8 740.2V747.6M743.2 739.7V747.8M744.8 740.4V747.6M746.2 740.4V747.5M747.8 740.4V747.5M749.2 738.7V748.1M750.8 740.4V748.2M752.2 740.2V748.2M753.8 739.4V747.7M755.2 740.3V747.8M756.8 739.8V748M758.2 737.1V748.2M759.8 740.5V747.5M761.2 740.6V747.8M762.8 739.9V747.5M764.2 740V747.5M765.8 740.2V748.2M767.2 740.1V748.1M768.8 740.6V747.4M770.2 736.5V749.1M771.8 740.6V747.5M773.2 740.2V747.6M774.8 740.6V748.1M776.2 738.9V747.6M777.8 740.5V747.8M779.2 739.7V747.5M780.8 739.9V747.9M782.2 740.2V747.6M783.8 740.3V748.1M785.2 740.6V747.4M786.8 740.3V748M788.2 740.4V750.3M789.8 739V748.4M791.2 740.5V748.4M792.8 739.9V749.4M794.2 740V747.7M795.8 739.7V749.7M797.2 739.8V747.4M798.8 737.5V747.6M800.2 737.4V748.3M801.8 739.6V748.2M803.2 738.4V747.6M804.8 739.9V748.2M806.2 740V747.8M807.8 740V748.4M809.2 740.5V747.5M810.8 739.9V748.2M812.2 739.8V748M813.8 736.4V747.7M815.2 740.1V748.3M816.8 740V748.4M818.2 740.3V747.8M819.8 739.9V749.4M821.2 740V748M822.8 737V747.9M824.2 740.2V747.5M825.8 740.2V747.5M827.2 739.9V748M828.8 739.8V747.4M830.2 740.3V747.7M831.8 740.5V747.5M833.2 739.7V748.1M834.8 740.1V747.9M836.2 738.7V748.2M837.8 740.2V747.6M839.2 740.4V751M840.8 740.5V748.2M842.2 740V748.1M843.8 739.8V748.1M845.2 740.3V748.2M846.8 740.2V750.7M848.2 740.2V747.9M849.8 740V749.9M851.2 740.3V747.7M852.8 740.4V747.6M854.2 739.9V748.4M855.8 739.8V747.9M857.2 739.6V748M858.8 740.1V747.5M860.2 739.8V748.3M861.8 740.3V748M863.2 737.9V749.7M864.8 739.8V747.5M866.2 740V747.5M867.8 740.2V748.3M869.2 740.1V748.2M870.8 740.5V747.7M872.2 740.2V747.6M873.8 739.7V748.1M875.2 740.2V747.4M876.8 740V751.3M878.2 740.3V748M879.8 740.3V747.8M881.2 740.3V750M882.8 739.9V748.1M884.2 740V750.2M885.8 737.2V747.9M887.2 740.2V748M888.8 737V747.6M890.2 740.4V747.6M891.8 739.6V747.5M893.2 739.8V747.5M894.8 737.3V748.1M896.2 737.3V747.5M897.8 739.7V747.7M899.2 740.4V747.6M900.8 740.2V747.7M902.2 740.3V748.2M903.8 736.4V747.5M905.2 737.8V747.9M906.8 740V748.2M908.2 739.9V747.6M909.8 740.2V747.6M911.2 738.8V750.4M912.8 739.7V749M914.2 740.4V747.5M915.8 740.4V747.6M917.2 739.9V748.7M918.8 739.2V747.8M920.2 740.2V747.9M921.8 740.5V747.9M923.2 739.9V747.5M924.8 738.9V747.7M926.2 737.2V747.9M927.8 738.5V748.1M929.2 740V748.3M930.8 739.9V747.5M932.2 739.8V750.3M933.8 740.1V748.1M935.2 739.9V749M936.8 739.7V747.5M938.2 739.9V748.2M939.8 740.5V748.3M941.2 740V748.4M942.8 740V747.7M944.2 740V751.1M945.8 740.5V751.1M947.2 739.8V748.2M948.8 737.8V748M950.2 740.3V747.4M951.8 740.4V747.7M953.2 739.9V748.1M954.8 740.5V749.8M956.2 740.4V747.5M957.8 739.7V748.3M959.2 740V748M960.8 740.3V747.7M962.2 739.7V748.1M963.8 736.8V747.9M965.2 740.6V747.8M966.8 740V750.2M968.2 740.1V748.3M969.8 740.3V747.8M971.2 740.3V748M972.8 740.2V747.8M974.2 739.7V750.4M975.8 740.2V747.7M977.2 739.9V747.5M978.8 738.5V747.6M980.2 740.6V748.2M981.8 739.9V750.7M983.2 740.2V748.3M984.8 740.2V748M986.2 739.6V750.1M987.8 740V747.7M989.2 740.1V748.4M990.8 740.4V747.6M992.2 740.2V749.6M993.8 739.7V747.7M995.2 740.5V747.6M996.8 739.7V747.7M998.2 739.8V747.5M999.8 740.5V748M1001.2 740.3V747.9M1002.8 740V747.8M1004.2 740.1V747.6M1005.8 740.3V748.2M1007.2 740.1V747.8M1008.8 740.6V747.9M1010.2 740.2V748.2M1011.8 740.4V748M1013.2 740V747.5M1014.8 739.7V749.2M1016.2 740.3V748.4M1017.8 740V748.4M1019.2 739.7V749.6M1020.8 736.4V748.2M1022.2 740.3V747.5M1023.8 740.6V747.5M1025.2 738.3V748.4M1026.8 740V747.5M1028.2 739.8V747.9M1029.8 740.1V748.3M1031.2 736.9V748M1032.8 737.9V747.9M1034.2 739.9V749.4M1035.8 739.3V748.1M1037.2 739.3V750.4M1038.8 739.7V747.7M1040.2 740.6V748.3M1041.8 739.8V748M1043.2 739.8V748.1M1044.8 739.3V747.4M1046.2 740.2V747.9M1047.8 740.3V748M1049.2 739.7V748.1M1050.8 740.3V749.4M1052.2 739.8V747.4M1053.8 740.5V747.6M1055.2 739.9V747.4M1056.8 739.7V747.8M1058.2 739.9V747.5M1059.8 740.1V747.5M1061.2 740.1V747.5M1062.8 740V747.7M1064.2 737.5V748M1065.8 740.4V748.3M1067.2 740.3V748.4M1068.8 740V748M1070.2 739.9V749.4M1071.8 740.4V750.8M1073.2 737.3V748M1074.8 737V747.6M1076.2 740.1V747.9M1077.8 740.6V750.2M1079.2 738.9V748.2M1080.8 740V747.7M1082.2 740.4V747.6M1083.8 740.5V748.2M1085.2 740V748.3M1086.8 740.5V749.4M1088.2 740.3V747.6M1089.8 739.7V747.6M1091.2 740V748.3M1092.8 740.2V748.2M1094.2 740.1V748.3M1095.8 740.6V747.9M1097.2 737.5V748.3M1098.8 740.2V748M1100.2 739.7V748.2M1101.8 740.1V749M1103.2 740.4V748.6M1104.8 740.5V748.1M1106.2 740.1V748.4M1107.8 740.6V750.7M1109.2 739.8V747.9M1110.8 738.4V748M1112.2 738.9V750.1M1113.8 739.6V750.9M1115.2 740.2V748.3M1116.8 740.5V748M1118.2 740.3V748.2M1119.8 740.4V747.7M1121.2 740.4V750.9M1122.8 740.6V750.1M1124.2 740.2V749.9M1125.8 737.3V748.1M1127.2 740.2V748.1M1128.8 740.5V747.4M1130.2 739.7V748.5M1131.8 737.8V750.8M1133.2 739.8V748.4M1134.8 739.9V750.3M1136.2 739.7V748.4M1137.8 740V748.1M1139.2 740V750.4M1140.8 739.7V748.3M1142.2 740.1V747.9M1143.8 739.6V748.4M1145.2 739.6V747.8M1146.8 739.6V748M1148.2 737.5V748M1149.8 739.6V748M1151.2 740.5V747.5M1152.8 739.8V748.1M1154.2 740.3V747.5M1155.8 739.7V748.3M1157.2 740.1V748.6M1158.8 740.1V749M1160.2 740.3V748.3M1161.8 740.5V748.4M1163.2 740.3V748M1164.8 739.9V747.7M1166.2 740.3V747.9M1167.8 740.2V749.1M1169.2 740.4V747.8M1170.8 740V748M1172.2 739.8V748.1M1173.8 739.7V747.7M1175.2 740.3V748.2M1176.8 740.1V747.5M1178.2 740.3V748.2M1179.8 739.9V748.2M1181.2 739.7V748.3M1182.8 739.9V748M1184.2 739.8V748.2M1185.8 740.1V748.4M1187.2 739.9V748.2M1188.8 740.1V747.8M1190.2 739.9V749.3M1191.8 740.4V748.2M1193.2 739.6V747.4M1194.8 737.4V750.1M1196.2 740V748M1197.8 740.5V748.1M1199.2 740.5V747.4M1200.8 740.1V748.3M1202.2 739.1V747.9M1203.8 740.3V750.6M1205.2 740V748M1206.8 739.9V747.6M1208.2 739.8V747.6M1209.8 739.7V749.6M1211.2 736.8V750.3M1212.8 740.4V748.1M1214.2 739.6V747.7M1215.8 739.6V747.6M1217.2 736.4V747.5M1218.8 736.1V748.3M1220.2 739.6V750M1221.8 738.1V749.4M1223.2 740.5V747.5M1224.8 739.8V747.8M1226.2 740.4V747.4M1227.8 740.4V748.1M1229.2 740V748.1M1230.8 740.2V748.1M1232.2 740.2V750.8M1233.8 740.6V747.4M1235.2 740.3V747.6M1236.8 739.7V749.7M1238.2 738.5V747.5M1239.8 740V747.5M1241.2 739.9V747.9M1242.8 740.2V747.8M1244.2 740V748.2M1245.8 740.1V747.8M1247.2 739.7V748.2M1248.8 740.6V747.8M1250.2 740.5V748.1M1251.8 737.8V748.2M1253.2 740V747.6M1254.8 739.7V747.9M1256.2 740.1V747.7M1257.8 740.4V748.1M1259.2 740.2V748M1260.8 739.6V750.8M1262.2 740.5V747.6M1263.8 740.6V747.5M1265.2 737.6V748M1266.8 737.2V747.6M1268.2 740.4V748.1M1269.8 740.2V747.9M1271.2 740.6V750.7M1272.8 739.7V748.2M1274.2 740.5V748.3M1275.8 740V748.2M1277.2 737.1V747.9M1278.8 740.5V747.6M1280.2 739.7V747.6M1281.8 740.2V747.8M1283.2 737.4V748.1M1284.8 740V748.1M1286.2 740.4V747.8M1287.8 740V748M1289.2 739.6V751.6M1290.5 740.1V751.2" stroke="#6e3a78" stroke-width="1.85" fill="none"/>
<path d="M1270.3 568V766M1251 568V766M1231.8 568V766M1212.6 568V766M1193.3 568V766M1154.9 568V766M1135.6 568V766M1116.4 568V766M1097.2 568V766M1077.9 568V766M1039.5 568V766M1020.2 568V766M1001 568V766M981.8 568V766M962.5 568V766M924.1 568V766M904.8 568V766M885.6 568V766M866.4 568V766M847.1 568V766M808.7 568V766M789.4 568V766M770.2 568V766M751 568V766M731.7 568V766M712.5 764.3H1291M712.5 740H1291M712.5 715.7H1291M712.5 691.4H1291M712.5 667.1H1291M712.5 642.8H1291M712.5 618.5H1291M712.5 594.2H1291M712.5 569.9H1291" stroke="rgba(255,255,255,0.11)" stroke-width="1" fill="none"/>
<path d="M1289.5 568V766M1174.1 568V766M1058.7 568V766M943.3 568V766M827.9 568V766" stroke="rgba(255,255,255,0.15)" stroke-width="1" fill="none"/>
<path d="M712.5 568V766.5H1292" stroke="#a4a4a4" stroke-width="1" fill="none"/>
<text x="707.5" y="746.2" font-size="14.5" fill="#e2e2e2" text-anchor="end" >0</text>
<text x="707.5" y="697.6" font-size="14.5" fill="#e2e2e2" text-anchor="end" >0.02</text>
<text x="707.5" y="649" font-size="14.5" fill="#e2e2e2" text-anchor="end" >0.04</text>
<text x="707.5" y="600.4" font-size="14.5" fill="#e2e2e2" text-anchor="end" >0.06</text>
<rect x="722.5" y="578.5" width="287" height="70" fill="rgba(100,100,100,0.17)" stroke="rgba(160,160,160,0.45)" stroke-width="1"/>
<rect x="731" y="587.0" width="23" height="23" fill="#ff7f0e" />
<text x="760.5" y="604.5" font-size="14" fill="#ececec" textLength="231.5" lengthAdjust="spacingAndGlyphs" >H1:SQZ-CLF_REFL_RF6_I_OUTPUT</text>
<rect x="731" y="616.0" width="23" height="23" fill="#6a3d7a" />
<text x="760.5" y="633.5" font-size="14" fill="#ececec" textLength="238" lengthAdjust="spacingAndGlyphs" >H1:SQZ-CLF_REFL_RF6_Q_OUTPUT</text>
<text x="1174.1" y="785" font-size="14.5" fill="#e2e2e2" text-anchor="middle" textLength="26" lengthAdjust="spacingAndGlyphs" >-1m</text>
<text x="1058.7" y="785" font-size="14.5" fill="#e2e2e2" text-anchor="middle" textLength="26" lengthAdjust="spacingAndGlyphs" >-2m</text>
<text x="943.3" y="785" font-size="14.5" fill="#e2e2e2" text-anchor="middle" textLength="26" lengthAdjust="spacingAndGlyphs" >-3m</text>
<text x="827.9" y="785" font-size="14.5" fill="#e2e2e2" text-anchor="middle" textLength="26" lengthAdjust="spacingAndGlyphs" >-4m</text>
<clipPath id="cz214"><rect x="1269.5" y="765" width="22.5" height="30"/></clipPath><g clip-path="url(#cz214)">
<text x="1289.5" y="785" font-size="14.5" fill="#e2e2e2" text-anchor="middle" >0</text>
</g>
<text x="712.0" y="785" font-size="14.5" fill="#e2e2e2" textLength="13.5" lengthAdjust="spacingAndGlyphs" >m</text>
<text transform="translate(661 667.5) rotate(-90)" x="0" y="5" font-size="14.5" fill="#e2e2e2" text-anchor="middle" textLength="40.5" lengthAdjust="spacingAndGlyphs">undef</text>
<text x="887" y="815" font-size="14" fill="#e2e2e2" textLength="267.5" lengthAdjust="spacingAndGlyphs" >H1:SQZ-FIBR_LOCK_BEAT_FREQUENCY</text>
<path d="M750.1 836.3H1291M750.1 854.3H1291M750.1 872.3H1291M750.1 890.3H1291M750.1 926.3H1291M750.1 944.3H1291M750.1 962.3H1291M750.1 980.3H1291" stroke="rgba(255,255,255,0.07)" stroke-width="1"/>
<rect x="750.1" y="906.8" width="540.9" height="3" fill="#ff69b4" />
<path d="M1271.5 824.6V992.2M1253.5 824.6V992.2M1235.6 824.6V992.2M1217.6 824.6V992.2M1199.6 824.6V992.2M1163.6 824.6V992.2M1145.7 824.6V992.2M1127.7 824.6V992.2M1109.7 824.6V992.2M1091.7 824.6V992.2M1055.8 824.6V992.2M1037.8 824.6V992.2M1019.8 824.6V992.2M1001.8 824.6V992.2M983.8 824.6V992.2M947.9 824.6V992.2M929.9 824.6V992.2M911.9 824.6V992.2M893.9 824.6V992.2M876 824.6V992.2M840 824.6V992.2M822 824.6V992.2M804 824.6V992.2M786.1 824.6V992.2M768.1 824.6V992.2" stroke="rgba(255,255,255,0.11)" stroke-width="1" fill="none"/>
<path d="M1289.5 824.6V992.2M1181.6 824.6V992.2M1073.7 824.6V992.2M965.9 824.6V992.2M858 824.6V992.2" stroke="rgba(255,255,255,0.15)" stroke-width="1" fill="none"/>
<path d="M750.5 824.6V992.5H1292" stroke="#a4a4a4" stroke-width="1" fill="none"/>
<text x="746" y="913" font-size="14" fill="#e2e2e2" text-anchor="end" >160.00000</text>
<text x="1181.6" y="1011" font-size="14.5" fill="#e2e2e2" text-anchor="middle" textLength="26" lengthAdjust="spacingAndGlyphs" >-1m</text>
<text x="1073.7" y="1011" font-size="14.5" fill="#e2e2e2" text-anchor="middle" textLength="26" lengthAdjust="spacingAndGlyphs" >-2m</text>
<text x="965.9" y="1011" font-size="14.5" fill="#e2e2e2" text-anchor="middle" textLength="26" lengthAdjust="spacingAndGlyphs" >-3m</text>
<text x="858" y="1011" font-size="14.5" fill="#e2e2e2" text-anchor="middle" textLength="26" lengthAdjust="spacingAndGlyphs" >-4m</text>
<clipPath id="cz230"><rect x="1269.5" y="991" width="22.5" height="30"/></clipPath><g clip-path="url(#cz230)">
<text x="1289.5" y="1011" font-size="14.5" fill="#e2e2e2" text-anchor="middle" >0</text>
</g>
<text x="749.6" y="1011" font-size="14.5" fill="#e2e2e2" textLength="13.5" lengthAdjust="spacingAndGlyphs" >m</text>
<text transform="translate(659 908) rotate(-90)" x="0" y="5" font-size="14.5" fill="#e2e2e2" text-anchor="middle">V</text>
<path d="M1376.5 156V148.5M1381.3 156V153.3M1390.9 156V149.3M1392.5 156V148.9M1394.1 156V154.8M1402.1 156V149M1403.7 156V137M1405.3 156V154.2M1410.1 156V147.6M1411.7 156V138.4M1413.3 156V154.3M1414.9 156V137M1416.5 156V151.1M1418.1 156V147.7M1429.3 156V137M1430.9 156V153.8M1432.5 156V138.1M1435.7 156V152.6M1437.3 156V153.5M1440.5 156V137M1443.7 156V154.7M1445.3 156V154.8M1446.9 156V146.2M1453.3 156V139.9M1458.1 156V141.6M1461.3 156V148.4M1462.9 156V154.5M1464.5 156V151.2M1466.1 156V149M1470.9 156V152.1M1472.5 156V137M1475.7 156V151.6M1478.9 156V154.3M1486.9 156V140.8M1490.1 156V151.8M1496.5 156V153.7M1499.7 156V154.2M1501.3 156V150.1M1506.1 156V153.5M1507.7 156V149M1509.3 156V153.8M1510.9 156V150.9M1514.1 156V147.4M1517.3 156V154.6M1518.9 156V154.6M1520.5 156V152.3M1528.5 156V152.2M1530.1 156V152.7M1531.7 156V146.3M1533.3 156V151.7M1538.1 156V147.2M1542.9 156V137M1544.5 156V148.2M1547.7 156V152M1549.3 156V153.7M1550.9 156V153.5M1552.5 156V137M1554.1 156V153.1M1555.7 156V154.9M1558.9 156V153.1M1560.5 156V153.1M1563.7 156V138.5M1568.5 156V137M1571.7 156V151M1576.5 156V143.8M1578.1 156V149.4M1581.3 156V144.8M1584.5 156V142.8M1586.1 156V153.7M1587.7 156V142.5M1594.1 156V151.1M1603.7 156V152.3M1605.3 156V151.3M1610.1 156V137M1611.7 156V146.2M1613.3 156V147.2M1616.5 156V150M1618.1 156V154.4M1619.7 156V150M1621.3 156V154.2M1624.5 156V150.4M1626.1 156V154.1M1629.3 156V151.2M1634.1 156V140.9M1635.7 156V146.3M1638.9 156V153.8M1642.1 156V154.1M1645.3 156V148.4M1646.9 156V152.5M1648.5 156V154.2M1651.7 156V138.6M1653.3 156V140.3M1654.9 156V143.5M1658.1 156V152.4M1659.7 156V137M1661.3 156V153.5M1664.5 156V145.1M1670.9 156V137M1672.5 156V150.4M1674.1 156V143.7M1677.3 156V153.9M1678.9 156V148M1680.5 156V154.2M1688.5 156V144.8M1690.1 156V152.7M1691.7 156V145.5M1693.3 156V148.3M1694.9 156V152.1M1696.5 156V153.8M1698.1 156V146.3M1699.7 156V147.4M1701.3 156V139.4M1707.7 156V147.2M1714.1 156V138.9M1718.9 156V154.6M1722.1 156V147.7M1723.7 156V144.3M1728.5 156V147.2M1730.1 156V151.7M1733.3 156V151.8M1734.9 156V154.3M1736.5 156V154.1M1739.7 156V139.9M1742.9 156V153.7M1746.1 156V152.7M1750.9 156V140.7M1752.5 156V150.1M1754.1 156V153.8M1757.3 156V137M1758.9 156V150.4M1762.1 156V153.8M1763.7 156V145.3M1766.9 156V152.4M1768.5 156V137M1770.1 156V149.4M1773.3 156V154.9M1776.5 156V146.5M1778.1 156V144.9M1782.9 156V154.1M1784.5 156V150M1787.7 156V152.1M1789.3 156V143.4M1790.9 156V151.7M1795.7 156V137M1798.9 156V137M1802.1 156V153.1M1803.7 156V150.5M1805.3 156V153.8M1816.5 156V144.9M1818.1 156V137M1821.3 156V154.8M1822.9 156V140.6M1829.3 156V137M1830.9 156V137M1832.5 156V142M1835.7 156V151.7M1837.3 156V154.8M1838.9 156V141.5M1840.5 156V137M1845.3 156V147.3M1848.5 156V137M1850.1 156V154.8M1853.3 156V151.7M1856.5 156V152.4M1858.1 156V146.4M1861.3 156V148.1M1862.9 156V149.8M1864.5 156V146.7M1866.1 156V137M1869.3 156V146.5M1870.9 156V153.4M1875.7 156V152.4M1877.3 156V154M1880.5 156V137M1882.1 156V151.4M1885.3 156V145M1886.9 156V148.4M1890.1 156V138.2M1891.7 156V151.2M1894.9 156V148.2" stroke="#7cfc00" stroke-width="1.6" fill="none"/>
<rect x="1751" y="250" width="2.5" height="13" fill="#7cfc00" />
<path d="M1878.5 77V267M1859.9 77V267M1841.4 77V267M1822.9 77V267M1804.3 77V267M1767.3 77V267M1748.7 77V267M1730.2 77V267M1711.7 77V267M1693.1 77V267M1656.1 77V267M1637.5 77V267M1619 77V267M1600.5 77V267M1581.9 77V267M1544.9 77V267M1526.3 77V267M1507.8 77V267M1489.3 77V267M1470.7 77V267M1433.7 77V267M1415.1 77V267M1396.6 77V267M1378.1 77V267M1375.5 254.5H1897" stroke="rgba(255,255,255,0.11)" stroke-width="1" fill="none"/>
<path d="M1897 77V267M1785.8 77V267M1674.6 77V267M1563.4 77V267M1452.2 77V267" stroke="rgba(255,255,255,0.15)" stroke-width="1" fill="none"/>
<path d="M1375.5 77V267.5H1900" stroke="#a4a4a4" stroke-width="1" fill="none"/>
<text x="1369.5" y="259.5" font-size="14" fill="#e2e2e2" text-anchor="end" >80.48</text>
<text x="1369.5" y="163" font-size="14" fill="#e2e2e2" text-anchor="end" >80.48</text>
<text transform="translate(1311 191.5) rotate(-90)" x="0" y="5" font-size="14.5" fill="#e2e2e2" text-anchor="middle" textLength="40.5" lengthAdjust="spacingAndGlyphs">undef</text>
<path d="M1878.5 300V540M1859.9 300V540M1841.4 300V540M1822.9 300V540M1804.3 300V540M1767.3 300V540M1748.7 300V540M1730.2 300V540M1711.7 300V540M1693.1 300V540M1656.1 300V540M1637.5 300V540M1619 300V540M1600.5 300V540M1581.9 300V540M1544.9 300V540M1526.3 300V540M1507.8 300V540M1489.3 300V540M1470.7 300V540M1433.7 300V540M1415.1 300V540M1396.6 300V540M1378.1 300V540M1359.5 300V540M1350.8 306H1897M1350.8 337.6H1897M1350.8 369.1H1897M1350.8 400.7H1897M1350.8 432.3H1897M1350.8 463.9H1897M1350.8 495.4H1897M1350.8 527H1897" stroke="rgba(255,255,255,0.11)" stroke-width="1" fill="none"/>
<path d="M1897 300V540M1785.8 300V540M1674.6 300V540M1563.4 300V540M1452.2 300V540" stroke="rgba(255,255,255,0.15)" stroke-width="1" fill="none"/>
<path d="M1350.5 300V540.5H1900" stroke="#a4a4a4" stroke-width="1" fill="none"/>
<text x="1345.5" y="311" font-size="14.5" fill="#e2e2e2" text-anchor="end" >-14</text>
<text x="1345.5" y="342.6" font-size="14.5" fill="#e2e2e2" text-anchor="end" >-16</text>
<text x="1345.5" y="374.1" font-size="14.5" fill="#e2e2e2" text-anchor="end" >-18</text>
<text x="1345.5" y="405.7" font-size="14.5" fill="#e2e2e2" text-anchor="end" >-20</text>
<text x="1345.5" y="437.3" font-size="14.5" fill="#e2e2e2" text-anchor="end" >-22</text>
<text x="1345.5" y="468.9" font-size="14.5" fill="#e2e2e2" text-anchor="end" >-24</text>
<text x="1345.5" y="500.4" font-size="14.5" fill="#e2e2e2" text-anchor="end" >-26</text>
<text x="1345.5" y="532" font-size="14.5" fill="#e2e2e2" text-anchor="end" >-28</text>
<rect x="1361.5" y="330.5" width="340" height="50" fill="rgba(100,100,100,0.17)" stroke="rgba(160,160,160,0.45)"/>
<rect x="1369" y="350" width="23" height="23" fill="#ff0000" />
<text x="1398" y="368" font-size="14" fill="#e8e8e8" textLength="300" lengthAdjust="spacingAndGlyphs" >H1:SQZ-OMC_TRANS_RF3_DEMOD_RFMON</text>
<text transform="translate(1310 423) rotate(-90)" x="0" y="5" font-size="14.5" fill="#e2e2e2" text-anchor="middle">V</text>
<path d="M1355.8 594.2V598.6M1357.2 592.9V600.1M1358.8 590.4V602.3M1360.2 590.3V604.5M1361.8 588.6V598.6M1363.2 593.7V602.5M1364.8 592.9V607.6M1366.2 588.8V604.9M1367.8 595.4V601.6M1369.2 591V601.8M1370.8 591.5V605.5M1372.2 590.7V607.1M1373.8 592.2V605.2M1375.2 591.5V598.6M1376.8 591.8V604.4M1378.2 586.8V605.1M1379.8 593.7V609.2M1381.2 593.1V607.3M1382.8 591.5V601.6M1384.2 595.4V600.3M1385.8 588.8V602.2M1387.2 587.9V602.1M1388.8 582V605.7M1390.2 589.4V600.3M1391.8 590.2V601.1M1393.2 591.4V599M1394.8 594.1V605.6M1396.2 588.8V602.8M1397.8 594.1V605.6M1399.2 594.5V604.7M1400.8 595V604.3M1402.2 590.8V600.9M1403.8 591.5V600.9M1405.2 590.4V601.3M1406.8 593.6V605.9M1408.2 586.3V608.3M1409.8 582.3V604.1M1411.2 589.9V607.4M1412.8 593.8V604.5M1414.2 593.2V607.4M1415.8 593.3V601.5M1417.2 589.9V599.6M1418.8 594.1V608.7M1420.2 589.5V602.3M1421.8 591.1V604.1M1423.2 586.3V605.5M1424.8 587.2V604.3M1426.2 590.6V598.7M1427.8 584.2V600.3M1429.2 578.5V599.5M1430.8 589.8V608.2M1432.2 594.8V604.9M1433.8 592.9V598.6M1435.2 587.6V611.6M1436.8 589V606M1438.2 586.2V599.1M1439.8 590.5V600M1441.2 593.2V601.1M1442.8 590.4V602.7M1444.2 587.2V605.5M1445.8 592.6V603.8M1447.2 592.1V600.8M1448.8 595.3V604.8M1450.2 591.2V606.5M1451.8 588.9V602.8M1453.2 583.7V598.6M1454.8 590.3V610.5M1456.2 585.6V603.2M1457.8 592.5V605.7M1459.2 589.1V603.8M1460.8 584.8V600.7M1462.2 589.9V601.9M1463.8 584.4V599.8M1465.2 584.6V606M1466.8 587V604M1468.2 595.4V605.1M1469.8 594V609.1M1471.2 590.2V599.1M1472.8 589V599M1474.2 587.1V605.5M1475.8 589.5V604.4M1477.2 595.2V603.5M1478.8 590.7V601.6M1480.2 590V600.6M1481.8 590.4V606.5M1483.2 589.9V599.4M1484.8 592.8V604M1486.2 593.7V606.4M1487.8 592V607.9M1489.2 592.8V606.2M1490.8 588.9V601.5M1492.2 588.8V603.2M1493.8 591.1V612.4M1495.2 595.4V605.3M1496.8 589.6V598.6M1498.2 588.8V607.4M1499.8 594.8V600.7M1501.2 594.6V603.3M1502.8 593V606.5M1504.2 592V603.2M1505.8 584.3V599.9M1507.2 593.5V601.5M1508.8 587.4V611.2M1510.2 586.1V601.5M1511.8 585.5V606.3M1513.2 588.2V604.2M1514.8 590.5V610.4M1516.2 594.5V605M1517.8 588.5V599.5M1519.2 589.7V603.2M1520.8 589V598.6M1522.2 592.6V604.2M1523.8 582.4V600.8M1525.2 587.5V598.6M1526.8 587.6V598.6M1528.2 587.2V599.6M1529.8 581.1V607.2M1531.2 592.8V602.3M1532.8 590.3V604.7M1534.2 592.2V604.8M1535.8 591.9V602.2M1537.2 595.4V599.9M1538.8 594.1V612.6M1540.2 585.7V613.3M1541.8 589.9V605.6M1543.2 586V599M1544.8 588.6V600.9M1546.2 590.4V603.3M1547.8 589.3V600.5M1549.2 587V599.5M1550.8 595.4V601.1M1552.2 588.9V605.7M1553.8 588.7V604.3M1555.2 584.8V608.9M1556.8 594.1V603.4M1558.2 592.4V604.1M1559.8 593.1V609.8M1561.2 583.6V603.6M1562.8 594.9V607.7M1564.2 593.3V606.5M1565.8 587.3V605.7M1567.2 584.5V603.3M1568.8 587V603.6M1570.2 593.3V600.5M1571.8 589.9V608M1573.2 588.9V607.3M1574.8 592.7V606.2M1576.2 584.2V598.6M1577.8 588.9V601.4M1579.2 591.4V602.9M1580.8 591V605.9M1582.2 593.3V607.9M1583.8 588.9V600.8M1585.2 595.4V604.1M1586.8 585.6V598.6M1588.2 586.7V598.6M1589.8 595.4V605.1M1591.2 592.5V602.6M1592.8 592.6V607.5M1594.2 595.4V604.6M1595.8 595.4V602.9M1597.2 591.2V601.9M1598.8 591.2V604.1M1600.2 583.9V602M1601.8 589.2V604.3M1603.2 585.3V604.2M1604.8 595.4V603.6M1606.2 594.1V599.7M1607.8 593.2V607.4M1609.2 588.9V602.7M1610.8 586.8V601M1612.2 595.4V599.6M1613.8 586.4V601.8M1615.2 590.1V602.2M1616.8 592.8V603.6M1618.2 588V603.4M1619.8 592.1V599.6M1621.2 590.3V601.7M1622.8 588.4V603.5M1624.2 592V613.3M1625.8 585.9V602.3M1627.2 588.3V604.5M1628.8 587.5V603.3M1630.2 587.4V598.6M1631.8 585.9V604.1M1633.2 588.8V608M1634.8 590V599.7M1636.2 591.7V602.3M1637.8 584V603.7M1639.2 588.5V598.6M1640.8 588.5V606.8M1642.2 588.4V601M1643.8 589.9V606.9M1645.2 584.3V600.1M1646.8 591.2V608.6M1648.2 589.8V603M1649.8 588.9V606.9M1651.2 592.2V601.1M1652.8 593.6V606.7M1654.2 590.8V611.2M1655.8 586.7V606.3M1657.2 588.5V608.5M1658.8 588V604.4M1660.2 584.2V607.7M1661.8 593.2V605.1M1663.2 592.5V603.4M1664.8 584.3V612.6M1666.2 588.4V599.9M1667.8 585.3V598.6M1669.2 589V603.9M1670.8 580V603.1M1672.2 595.4V608.2M1673.8 592.3V602.8M1675.2 594.2V601M1676.8 587.1V601.3M1678.2 595.2V598.8M1679.8 589.8V600.7M1681.2 587.9V604M1682.8 594.1V611M1684.2 590.4V599.6M1685.8 591V611.1M1687.2 587.6V599.8M1688.8 591V604.3M1690.2 594.3V598.6M1691.8 591.9V606.1M1693.2 590.1V609.4M1694.8 589.8V609.7M1696.2 585.6V604.4M1697.8 585.9V600.9M1699.2 589V603.2M1700.8 594.9V601.2M1702.2 587.4V607M1703.8 591.2V601.8M1705.2 587.6V602.6M1706.8 592.2V601.9M1708.2 595.3V602.1M1709.8 588.6V604.8M1711.2 582.3V601.1M1712.8 589.4V599.7M1714.2 590.1V598.6M1715.8 590V601.7M1717.2 591.9V598.6M1718.8 589.6V605.1M1720.2 587.7V599.3M1721.8 586.3V600.9M1723.2 592.3V604.5M1724.8 587.5V600.5M1726.2 591.4V600.1M1727.8 588.5V601.9M1729.2 591.7V602M1730.8 591V601.9M1732.2 586.4V605M1733.8 591.5V601.9M1735.2 586.1V601.1M1736.8 582V606.5M1738.2 595.3V607.4M1739.8 587.8V598.9M1741.2 591.1V604.8M1742.8 592.7V604.9M1744.2 588V607.3M1745.8 589.6V604.1M1747.2 592.2V607.6M1748.8 592.2V603.7M1750.2 587.7V609.4M1751.8 589.2V609.6M1753.2 593.8V612.4M1754.8 584.2V608M1756.2 584.5V607.5M1757.8 594.1V604.6M1759.2 587.9V605.4M1760.8 586.3V602.3M1762.2 594.7V604.8M1763.8 593.9V603.4M1765.2 589.3V604.3M1766.8 585.7V600M1768.2 591.8V602.7M1769.8 594.6V606.4M1771.2 593.9V602M1772.8 588V598.8M1774.2 595.4V605.4M1775.8 590.2V608.1M1777.2 585.5V607.6M1778.8 587.6V602.3M1780.2 586.6V604.5M1781.8 591.7V609.4M1783.2 593.4V601.2M1784.8 594.4V601.5M1786.2 589.2V598.9M1787.8 587.5V608.8M1789.2 593.8V607.7M1790.8 589.1V601.5M1792.2 592V606.8M1793.8 590.6V603.2M1795.2 591.8V598.6M1796.8 589.1V607.8M1798.2 592.3V601.9M1799.8 595.4V613.9M1801.2 588.5V603.8M1802.8 588.1V603.7M1804.2 591.8V601.7M1805.8 588.4V600M1807.2 583.3V604M1808.8 590.1V602.2M1810.2 593.2V602.8M1811.8 588.1V598.6M1813.2 584.6V604.3M1814.8 582.2V602.6M1816.2 592.8V605.1M1817.8 590.3V606.4M1819.2 593.6V601.3M1820.8 595.4V603.6M1822.2 594.9V608M1823.8 591.7V599.4M1825.2 590.3V601.7M1826.8 582.8V603M1828.2 592.3V601.7M1829.8 591.1V607.2M1831.2 591.3V604.8M1832.8 587.7V608.3M1834.2 591.9V602.1M1835.8 593.3V611.6M1837.2 589.6V601.7M1838.8 587.2V599.8M1840.2 581.5V603.6M1841.8 585.7V604M1843.2 592.7V603.1M1844.8 595.4V603.1M1846.2 586.3V602.8M1847.8 590.4V602.7M1849.2 585.5V599.8M1850.8 585.5V608.9M1852.2 592V600.6M1853.8 595.4V602.2M1855.2 586V605.8M1856.8 591.7V609.4M1858.2 589V602.9M1859.8 586.5V604M1861.2 591.3V604.6M1862.8 594.7V601M1864.2 591V605.8M1865.8 592.2V604.7M1867.2 590.1V607.5M1868.8 592.3V613M1870.2 584.5V604M1871.8 590.9V604.4M1873.2 595.4V603.1M1874.8 590.7V598.6M1876.2 595.4V603.6M1877.8 592.3V609.6M1879.2 592.2V601.2M1880.8 584.8V602.3M1882.2 587.1V603M1883.8 581.9V603.9M1885.2 589.1V605.9M1886.8 589.3V604.2M1888.2 589.9V600.8M1889.8 588.3V600.3M1891.2 593.9V602.2M1892.8 590V600.5M1894.2 593V604.4M1895.8 592.9V607.4M1896.8 576.3V602.8" stroke="#2a78b8" stroke-width="1.85" fill="none"/>
<path d="M1878.5 568V766M1859.9 568V766M1841.4 568V766M1822.9 568V766M1804.3 568V766M1767.3 568V766M1748.7 568V766M1730.2 568V766M1711.7 568V766M1693.1 568V766M1656.1 568V766M1637.5 568V766M1619 568V766M1600.5 568V766M1581.9 568V766M1544.9 568V766M1526.3 568V766M1507.8 568V766M1489.3 568V766M1470.7 568V766M1433.7 568V766M1415.1 568V766M1396.6 568V766M1378.1 568V766M1359.5 568V766M1354 610H1897M1354 694H1897" stroke="rgba(255,255,255,0.11)" stroke-width="1" fill="none"/>
<path d="M1897 568V766M1785.8 568V766M1674.6 568V766M1563.4 568V766M1452.2 568V766" stroke="rgba(255,255,255,0.15)" stroke-width="1" fill="none"/>
<path d="M1354.5 568V766.5H1900" stroke="#a4a4a4" stroke-width="1" fill="none"/>
<text x="1339" y="615" font-size="14" fill="#e2e2e2" text-anchor="end" >0.</text>
<text x="1339" y="699" font-size="14" fill="#e2e2e2" text-anchor="end" >0.</text>
<rect x="1373" y="584" width="23" height="23" fill="#e03030" />
<text x="1402" y="605" font-size="14" fill="#e8e8e8" textLength="270" lengthAdjust="spacingAndGlyphs" >H1:SQZ-OMC_TRANS_RF3_I_OUTPUT</text>
<text transform="translate(1311 668) rotate(-90)" x="0" y="5" font-size="14.5" fill="#e2e2e2" text-anchor="middle" textLength="40.5" lengthAdjust="spacingAndGlyphs">undef</text>
<rect x="1351.5" y="797.5" width="280" height="193" fill="rgba(100,100,100,0.17)" stroke="rgba(160,160,160,0.45)" stroke-width="1"/>
<path d="M1341.9 851C1343.4 859.2 1348 900.8 1351.1 900C1354.2 899.2 1356.9 856.6 1360.4 846.3C1363.9 836 1368 840.2 1372 838C1376 835.8 1380.5 832.4 1384.4 833.3C1388.3 834.2 1392.5 843.8 1395.6 843.5C1398.7 843.2 1400.7 831.4 1403 831.5C1405.3 831.6 1406.6 847.8 1409.4 844.4C1412.2 841 1416 811.6 1419.6 811C1423.1 810.4 1427.6 836.4 1430.7 840.7C1433.8 845 1435.2 840 1438 837C1440.8 834 1444 820.8 1447.4 823C1450.8 825.2 1455.4 851.3 1458.5 850C1461.6 848.7 1463.5 822.3 1466 815C1468.5 807.7 1470.8 806.7 1473.3 806C1475.8 805.3 1477 798.7 1480.7 811C1484.4 823.3 1491.3 880.4 1495.6 879.6C1499.9 878.8 1503 806.9 1506.7 806C1510.4 805.1 1514.7 865.7 1517.8 874C1520.9 882.3 1522.4 866.6 1525.2 855.6C1528 844.6 1531.6 806.1 1534.4 808C1537.2 809.9 1539.3 862.8 1541.9 866.7C1544.5 870.6 1547.4 832.1 1550.2 831.5C1553 830.9 1555.6 859 1558.5 863C1561.4 867 1564.4 864.8 1567.8 855.6C1571.2 846.4 1575.5 805.5 1578.9 808C1582.3 810.5 1584.7 868.9 1588 870.4C1591.3 871.9 1595.7 820.7 1599 816.7C1602.3 812.7 1604.1 843.8 1607.6 846.3C1611.1 848.8 1617.2 836.3 1620 831.5C1622.8 826.7 1622.3 814.9 1624.4 817.6C1626.5 820.4 1630.2 846 1632.6 848C1634.9 850 1636.3 828.4 1638.5 829.4C1640.7 830.4 1643.4 857.6 1646 854C1648.6 850.4 1651.2 814.7 1654 808C1656.8 801.3 1659.8 814.3 1663 814C1666.2 813.7 1670.3 802.9 1673 806C1675.7 809.1 1677 829.1 1679 832.4C1681 835.7 1682.5 819.3 1685 825.7C1687.5 832.1 1691 868.8 1694 871C1697 873.2 1699.8 840.2 1703 839C1706.2 837.8 1710 863.7 1713 864C1716 864.3 1718.2 841.4 1720.7 840.6C1723.2 839.8 1724.7 863 1728 859C1731.3 855 1737.2 818.2 1740.7 816.9C1744.2 815.6 1746.3 849.9 1749 851C1751.7 852.1 1754 825 1757 823.5C1760 822 1764 843.2 1766.7 842C1769.4 840.8 1770.5 815.8 1773 816C1775.5 816.2 1779.1 839.9 1781.5 843.5C1783.9 847.1 1784.8 842.4 1787.4 837.6C1790 832.8 1793.3 813.5 1797 814.6C1800.7 815.7 1806 845.4 1809.6 844C1813.2 842.6 1815.3 808.2 1818.5 806C1821.7 803.8 1826.4 831 1829 831C1831.6 831 1832.3 810.2 1834 806C1835.7 801.8 1837 794.1 1839 806C1841 817.9 1843.2 875.6 1846 877.6C1848.8 879.6 1852 820.1 1855.6 818.3C1859.2 816.5 1863.6 861.8 1867.4 867C1871.2 872.2 1875.1 859.6 1878.5 849.4C1881.9 839.2 1885.6 812.9 1888 806C1890.4 799.1 1891.5 803.6 1893 808C1894.5 812.4 1896.3 828.3 1897 832.4" stroke="#ee3a55" stroke-width="2" fill="none" stroke-linejoin="round"/>
<path d="M1341.9 851.9C1342.8 856.5 1344.9 875.6 1347.4 879.6C1349.9 883.6 1352.9 875.1 1356.7 876C1360.5 876.9 1365.4 882.2 1370 885C1374.6 887.8 1380.5 894.7 1384.4 892.6C1388.4 890.5 1390.6 876.5 1393.7 872.2C1396.8 867.9 1399.9 866.4 1403 866.7C1406.1 867 1409.1 870.9 1412.2 874C1415.3 877.1 1418.4 886.1 1421.5 885.2C1424.6 884.3 1427.6 877.1 1430.7 868.5C1433.8 859.9 1436.6 832.7 1440 833.3C1443.4 833.9 1447.9 869.1 1451 872.2C1454.1 875.3 1455.4 859.3 1458.5 851.9C1461.6 844.5 1465.9 825.3 1469.6 827.8C1473.3 830.3 1476.7 857.8 1480.7 866.7C1484.7 875.7 1490 877.5 1493.7 881.5C1497.4 885.5 1500.2 894.1 1503 890.7C1505.8 887.3 1507.9 864.1 1510.4 861C1512.9 857.9 1515.3 871.9 1517.8 872.2C1520.3 872.5 1522.1 863.3 1525.2 863C1528.3 862.7 1532.9 871 1536.3 870.4C1539.7 869.8 1542.8 855 1545.6 859.3C1548.4 863.6 1550.2 893.5 1553 896.3C1555.8 899.1 1559.1 882.2 1562.2 876C1565.3 869.8 1568.4 859 1571.5 859.3C1574.6 859.6 1577.6 875.6 1580.7 877.8C1583.8 879.9 1586.3 877.5 1590 872.2C1593.7 867 1598.4 847.2 1603 846.3C1607.6 845.4 1615 859.5 1617.8 866.7C1620.6 873.9 1617.7 889.7 1620 889.4C1622.3 889.1 1628 867.5 1631.9 865C1635.9 862.5 1640.6 874.6 1643.7 874.6C1646.8 874.6 1647.8 862.5 1650.4 865C1653 867.5 1655.4 892.7 1659.3 889.4C1663.2 886.1 1670.2 845.9 1674 845C1677.8 844.1 1679.2 884 1682 884.3C1684.8 884.5 1686.9 846.3 1691 846.5C1695.1 846.7 1702.7 883.9 1706.7 885.7C1710.7 887.6 1712.2 861.6 1714.8 857.6C1717.3 853.6 1719.4 859.3 1722 862C1724.6 864.7 1727.7 872.6 1730.4 874C1733.2 875.4 1736.1 870.1 1738.5 870.2C1740.9 870.3 1742 880.2 1745 874.6C1748 869 1752.8 836.4 1756.3 836.9C1759.8 837.4 1763.3 872.8 1766 877.6C1768.7 882.4 1770.3 864.7 1772.6 865.7C1774.9 866.7 1777.2 881 1780 883.5C1782.8 886 1786.9 882.2 1789.6 880.6C1792.3 879 1794.4 874.1 1796.3 874C1798.2 873.9 1798.2 884.4 1800.7 879.8C1803.2 875.2 1807.5 844.9 1811 846.5C1814.5 848.1 1818.3 886.3 1821.5 889.4C1824.7 892.5 1826.5 864.4 1830.4 865C1834.4 865.6 1840.8 891.9 1845.2 893C1849.6 894.1 1853.5 880.2 1857 871.7C1860.5 863.2 1862.5 844.5 1866 842C1869.5 839.5 1873.9 850.1 1877.8 856.9C1881.7 863.7 1886.4 883.5 1889.6 882.8C1892.8 882 1895.8 857.5 1897 852.4" stroke="#ff7f27" stroke-width="2" fill="none" stroke-linejoin="round"/>
<path d="M1341.9 896.3C1344.1 901.2 1350.1 922.9 1354.8 926C1359.5 929.1 1365.1 917.5 1370 915C1374.9 912.5 1380.5 912.3 1384.4 911C1388.4 909.7 1390.3 904.9 1393.7 907.4C1397.1 909.9 1400.8 924.8 1404.8 926C1408.8 927.2 1414.1 914.2 1417.8 914.8C1421.5 915.4 1423.9 929.6 1427 929.6C1430.1 929.6 1432.3 917.9 1436.3 914.8C1440.3 911.7 1447 908.8 1451 911C1455 913.2 1457.3 925.9 1460.4 927.8C1463.5 929.7 1465.9 926.5 1469.6 922.2C1473.3 917.9 1478.6 903.4 1482.6 901.9C1486.6 900.4 1490.3 910.2 1493.7 913C1497.1 915.8 1500.2 920 1503 918.5C1505.8 917 1507.9 904.3 1510.4 903.7C1512.9 903.1 1515 914.8 1517.8 914.8C1520.6 914.8 1522.7 903.1 1527 903.7C1531.3 904.3 1538.8 917.6 1543.7 918.5C1548.7 919.4 1553 909.9 1556.7 909.3C1560.4 908.7 1562.9 915.7 1566 914.8C1569.1 913.9 1572.1 903.7 1575.2 903.7C1578.3 903.7 1581 913.9 1584.4 914.8C1587.8 915.7 1591.9 909.9 1595.6 909.3C1599.3 908.7 1602.6 908.6 1606.7 911C1610.8 913.4 1615.6 923.6 1620 923.5C1624.4 923.4 1629.8 911.7 1633.3 910.2C1636.8 908.7 1638 915.1 1640.7 914.6C1643.4 914.1 1647.1 907.9 1649.6 907.2C1652.1 906.5 1653.6 910.2 1655.6 910.2C1657.6 910.2 1658 904.9 1661.5 907.2C1665 909.6 1672.8 922.3 1676.3 924.3C1679.8 926.3 1680.2 919.4 1682.2 919C1684.2 918.6 1686 922.1 1688 922C1690 921.9 1692 917.7 1694 918.3C1696 918.9 1697.5 925.2 1700 925.7C1702.5 926.2 1706.2 920.7 1708.9 921.3C1711.6 921.9 1713.6 930 1716.3 929.4C1719 928.8 1722.5 917.1 1725.2 917.6C1727.9 918.1 1729.9 932.2 1732.6 932.4C1735.3 932.6 1738.5 920.9 1741.5 919C1744.5 917.1 1747.7 921.8 1750.4 921.3C1753.1 920.8 1755.5 915.4 1757.8 916C1760.1 916.6 1762.2 927.1 1764.4 925C1766.6 922.9 1768.6 902.2 1771.1 903.5C1773.6 904.8 1775.7 932.6 1779.3 933C1782.9 933.4 1787.8 907.3 1792.6 905.7C1797.4 904.1 1803.8 922 1808 923.5C1812.2 925 1815.1 915.4 1817.8 914.6C1820.5 913.9 1822.1 919.4 1824.4 919C1826.8 918.6 1828.8 910.7 1831.9 912.4C1835 914.1 1838.3 930.1 1843 929.4C1847.7 928.7 1855.4 906.5 1860 908C1864.6 909.5 1865.5 937.2 1870.4 938.3C1875.3 939.4 1885.2 917.5 1889.6 914.6C1894 911.7 1895.8 919.6 1897 920.6" stroke="#ffdd33" stroke-width="2" fill="none" stroke-linejoin="round"/>
<path d="M1341.9 926C1342.8 924.3 1344.9 915.4 1347.4 915.7C1349.9 916 1352.9 925.8 1356.7 927.8C1360.5 929.8 1365.4 928 1370 928C1374.6 928 1380.1 926.9 1384.4 927.8C1388.7 928.7 1391.6 933 1395.6 933.3C1399.6 933.6 1404.8 931.5 1408.5 929.6C1412.2 927.8 1415 922.5 1417.8 922.2C1420.6 921.9 1422.4 926.6 1425.2 927.8C1428 929 1431.3 930.8 1434.4 929.6C1437.5 928.4 1440.3 919.8 1443.7 920.4C1447.1 921 1450.5 932.1 1454.8 933.3C1459.1 934.5 1465.3 927.8 1469.6 927.8C1473.9 927.8 1476.7 935.5 1480.7 933.3C1484.7 931.1 1489.4 915.4 1493.7 914.8C1498 914.2 1502.1 928.4 1506.7 929.6C1511.3 930.8 1517.2 922.5 1521.5 922.2C1525.8 921.9 1528.9 930.9 1532.6 927.8C1536.3 924.7 1540 903.7 1543.7 903.7C1547.4 903.7 1550.5 926.6 1554.8 927.8C1559.1 929 1565.3 911 1569.6 911C1573.9 911 1576.4 925.9 1580.7 927.8C1585 929.7 1591.3 921.9 1595.6 922.2C1599.9 922.5 1602.6 929.6 1606.7 929.6C1610.8 929.6 1616.3 921 1620 922C1623.7 923 1626.4 934.2 1628.9 935.4C1631.4 936.6 1632.8 929.6 1634.8 929.4C1636.8 929.1 1638.5 933.5 1640.7 933.9C1642.9 934.3 1645.5 931.7 1648 931.7C1650.5 931.7 1653.1 935.8 1655.6 933.9C1658.1 932 1659.8 920.4 1663 920.6C1666.2 920.9 1670.8 934.4 1674.8 935.4C1678.8 936.4 1682.5 928.7 1686.7 926.5C1690.9 924.3 1696.3 920.6 1700 922C1703.7 923.4 1704.5 932.4 1708.9 934.6C1713.4 936.8 1721.3 937.6 1726.7 935.4C1732.1 933.2 1737.2 919.8 1741.5 921.3C1745.8 922.8 1748 944.9 1752.6 944.3C1757.2 943.7 1764.2 916.6 1768.9 917.6C1773.6 918.6 1776.6 948.4 1780.7 950.2C1784.8 952.1 1789 933.3 1793.3 928.7C1797.6 924.1 1802 920.9 1806.7 922.8C1811.4 924.6 1817.3 937.6 1821.5 939.8C1825.7 942 1828.3 938.7 1831.9 936C1835.5 933.3 1840 923.6 1843 923.5C1846 923.4 1847.3 935.9 1849.6 935.4C1851.9 934.9 1854 921.1 1857 920.6C1860 920.1 1862.7 932.7 1867.4 932.4C1872.1 932.1 1880.3 918.8 1885.2 919C1890.1 919.2 1895 931.4 1897 933.9" stroke="#4cbb3c" stroke-width="2" fill="none" stroke-linejoin="round"/>
<path d="M1341.9 930.6C1342.8 930.9 1345.2 932.9 1347.4 932.4C1349.6 931.9 1351 928.2 1354.8 927.8C1358.6 927.4 1365.1 929.7 1370 930C1374.9 930.3 1380.1 929.7 1384.4 929.6C1388.7 929.5 1392.2 929 1395.6 929.6C1399 930.2 1401.7 934.2 1404.8 933.3C1407.9 932.4 1410.9 923.4 1414 924C1417.1 924.6 1419.6 937.6 1423.3 937C1427 936.4 1432.6 921.9 1436.3 920.4C1440 918.9 1442.5 923.2 1445.6 927.8C1448.7 932.4 1451.4 947.1 1454.8 948C1458.2 948.9 1461.7 934.8 1466 933.3C1470.3 931.8 1476.1 939.5 1480.7 938.9C1485.3 938.3 1490 930.5 1493.7 929.6C1497.4 928.7 1499.6 934.8 1503 933.3C1506.4 931.8 1510.3 919.8 1514 920.4C1517.7 921 1521.5 937.3 1525.2 937C1528.9 936.7 1533.2 917.9 1536.3 918.5C1539.4 919.1 1540.3 938.5 1543.7 940.7C1547.1 942.9 1552.7 932.4 1556.7 931.5C1560.7 930.6 1563.8 935.8 1567.8 935.2C1571.8 934.6 1576.4 927.8 1580.7 927.8C1585 927.8 1590 934.6 1593.7 935.2C1597.4 935.8 1598.6 932.7 1603 931.5C1607.4 930.3 1615.8 926.5 1620 928C1624.2 929.5 1625.3 941.8 1628.1 940.6C1630.9 939.4 1634.4 922.7 1637 920.6C1639.6 918.5 1641.6 927.5 1643.7 928C1645.8 928.5 1646.8 923 1649.6 923.5C1652.4 924 1657.5 931 1660.7 931C1663.9 931 1665.9 922.8 1668.9 923.5C1671.9 924.2 1675.7 935 1678.5 935.4C1681.3 935.8 1683.2 927.7 1686 925.7C1688.8 923.7 1692.5 922.6 1695.6 923.5C1698.7 924.4 1701.9 930.8 1704.4 931C1706.9 931.2 1708.2 925 1710.4 925C1712.6 925 1713.6 928.5 1717.8 931C1722 933.5 1730.7 940.3 1735.6 939.8C1740.5 939.3 1743.5 929 1747.4 928C1751.4 927 1756.1 933.4 1759.3 933.9C1762.5 934.4 1763.6 932.5 1766.7 931C1769.8 929.5 1774.6 924.3 1777.8 925C1781 925.7 1783.2 934.5 1786 935.4C1788.8 936.3 1790.6 928.7 1794.8 930.2C1799 931.7 1806.5 943.8 1811 944.3C1815.5 944.8 1818 934.6 1821.5 933.1C1825 931.6 1828.7 933.3 1831.9 935.4C1835.1 937.5 1836.3 949.5 1840.7 945.7C1845.1 941.9 1854 913.8 1858.5 912.4C1863 911 1864.2 936 1867.4 937.6C1870.6 939.2 1872.9 921.4 1877.8 922C1882.7 922.6 1893.8 938.1 1897 941.3" stroke="#1e88ff" stroke-width="2" fill="none" stroke-linejoin="round"/>
<path d="M1878.5 790V992.4M1860 790V992.4M1841.5 790V992.4M1822.9 790V992.4M1804.4 790V992.4M1767.4 790V992.4M1748.9 790V992.4M1730.4 790V992.4M1711.9 790V992.4M1693.4 790V992.4M1656.3 790V992.4M1637.8 790V992.4M1619.3 790V992.4M1600.8 790V992.4M1582.3 790V992.4M1545.2 790V992.4M1526.7 790V992.4M1508.2 790V992.4M1489.7 790V992.4M1471.2 790V992.4M1434.2 790V992.4M1415.7 790V992.4M1397.1 790V992.4M1378.6 790V992.4M1360.1 790V992.4M1341.6 793.7H1897M1341.6 818.6H1897M1341.6 843.4H1897M1341.6 868.2H1897M1341.6 893.1H1897M1341.6 918H1897M1341.6 942.8H1897M1341.6 967.7H1897M1341.6 992.5H1897" stroke="rgba(255,255,255,0.11)" stroke-width="1" fill="none"/>
<path d="M1897 790V992.4M1785.9 790V992.4M1674.8 790V992.4M1563.8 790V992.4M1452.7 790V992.4" stroke="rgba(255,255,255,0.15)" stroke-width="1" fill="none"/>
<path d="M1341.5 790V992.5H1900" stroke="#a4a4a4" stroke-width="1" fill="none"/>
<text x="1337" y="850.2" font-size="14.5" fill="#e2e2e2" text-anchor="end" >0</text>
<text x="1337" y="899.8" font-size="14.5" fill="#e2e2e2" text-anchor="end" >-2</text>
<text x="1337" y="949.4" font-size="14.5" fill="#e2e2e2" text-anchor="end" >-4</text>
<clipPath id="c2"><rect x="1300" y="793" width="40" height="30"/></clipPath>
<g clip-path="url(#c2)">
<text x="1337" y="800.6" font-size="14.5" fill="#e2e2e2" text-anchor="end" >2</text>
</g>
<clipPath id="c6"><rect x="1300" y="780" width="40" height="212.4"/></clipPath>
<g clip-path="url(#c6)">
<text x="1337" y="999" font-size="14.5" fill="#e2e2e2" text-anchor="end" >-6</text>
</g>
<rect x="1360" y="812.9" width="23" height="23" fill="#ee3a55" />
<text x="1389.5" y="830.4" font-size="14" fill="#ececec" textLength="232.5" lengthAdjust="spacingAndGlyphs" >H1:SQZ-DCPD_RATIO_1_DB_MON</text>
<rect x="1360" y="841.86" width="23" height="23" fill="#ff7f27" />
<text x="1389.5" y="859.4" font-size="14" fill="#ececec" textLength="232.5" lengthAdjust="spacingAndGlyphs" >H1:SQZ-DCPD_RATIO_2_DB_MON</text>
<rect x="1360" y="870.8199999999999" width="23" height="23" fill="#ffdd33" />
<text x="1389.5" y="888.3" font-size="14" fill="#ececec" textLength="232.5" lengthAdjust="spacingAndGlyphs" >H1:SQZ-DCPD_RATIO_3_DB_MON</text>
<rect x="1360" y="899.78" width="23" height="23" fill="#4cbb3c" />
<text x="1389.5" y="917.3" font-size="14" fill="#ececec" textLength="232.5" lengthAdjust="spacingAndGlyphs" >H1:SQZ-DCPD_RATIO_4_DB_MON</text>
<rect x="1360" y="928.74" width="23" height="23" fill="#1e88ff" />
<text x="1389.5" y="946.2" font-size="14" fill="#ececec" textLength="232.5" lengthAdjust="spacingAndGlyphs" >H1:SQZ-DCPD_RATIO_5_DB_MON</text>
<rect x="1360" y="957.7" width="23" height="23" fill="#7b3a9a" />
<text x="1389.5" y="975.2" font-size="14" fill="#ececec" textLength="232.5" lengthAdjust="spacingAndGlyphs" >H1:SQZ-DCPD_RATIO_6_DB_MON</text>
<text x="1785.9" y="1011" font-size="14.5" fill="#e2e2e2" text-anchor="middle" textLength="26" lengthAdjust="spacingAndGlyphs" >-1m</text>
<text x="1674.8" y="1011" font-size="14.5" fill="#e2e2e2" text-anchor="middle" textLength="26" lengthAdjust="spacingAndGlyphs" >-2m</text>
<text x="1563.8" y="1011" font-size="14.5" fill="#e2e2e2" text-anchor="middle" textLength="26" lengthAdjust="spacingAndGlyphs" >-3m</text>
<text x="1452.7" y="1011" font-size="14.5" fill="#e2e2e2" text-anchor="middle" textLength="26" lengthAdjust="spacingAndGlyphs" >-4m</text>
<clipPath id="cz303"><rect x="1877" y="991" width="23" height="30"/></clipPath><g clip-path="url(#cz303)">
<text x="1897" y="1011" font-size="14.5" fill="#e2e2e2" text-anchor="middle" >0</text>
</g>
<text x="1341.1" y="1011" font-size="14.5" fill="#e2e2e2" textLength="13.5" lengthAdjust="spacingAndGlyphs" >m</text>
<text transform="translate(1311 893.7) rotate(-90)" x="0" y="5" font-size="14.5" fill="#e2e2e2" text-anchor="middle" textLength="40.5" lengthAdjust="spacingAndGlyphs">undef</text>
<text x="738" y="1052" font-size="18" fill="#e8e8e8" textLength="67.5" lengthAdjust="spacingAndGlyphs" >t0 = Sun</text>
<text x="1113" y="1052" font-size="18" fill="#e8e8e8" textLength="68.5" lengthAdjust="spacingAndGlyphs" >99.3750]</text>
<rect x="653" y="1071" width="1245" height="9" fill="#eeeeee" />
<rect x="1898" y="1071" width="22" height="9" fill="#eeeeee" />
<rect x="1808.5" y="1073.5" width="79" height="10" rx="3" fill="#f4f4f4" stroke="#c8c8c8"/>
<rect x="0" y="722" width="27" height="6" fill="#dcd8d4" />
<rect x="0" y="727" width="265" height="24" fill="#dcd8d4" />
<rect x="6.5" y="728.5" width="19" height="17" rx="2" fill="url(#winico)" stroke="#9a9c98"/>
<rect x="8" y="730" width="16" height="2" fill="#4a73ad" />
<text x="51.5" y="742" font-size="13.5" fill="#2e3436" font-weight="bold" textLength="188.5" lengthAdjust="spacingAndGlyphs" >GigE Camera - FC-GR TRANS</text>
<rect x="265" y="727" width="87" height="24" fill="#000" />
<rect x="286" y="727" width="2" height="24" fill="#e8e8e8" />
<rect x="309" y="727" width="2" height="24" fill="#e8e8e8" />
<rect x="332" y="727" width="2" height="24" fill="#e8e8e8" />
<rect x="0" y="751" width="358" height="329" fill="#efefef" />
<rect x="0" y="751" width="2" height="329" fill="#d8d8d8" />
<text x="103" y="781.7" font-size="22" fill="#202020" style="font-family:&quot;Liberation Mono&quot;,monospace" textLength="152" lengthAdjust="spacingAndGlyphs" >FC-GR TRANS</text>
<rect x="14" y="796" width="332" height="249" fill="#000" />
<ellipse cx="122" cy="944.5" rx="59" ry="60" fill="url(#beam1)"/>
<ellipse cx="116.5" cy="939" rx="26" ry="24" fill="url(#beamcore)"/>
<ellipse cx="121" cy="943.5" rx="50" ry="52" fill="url(#streak)"/>
<text x="73" y="819" font-size="12.5" fill="#e6e6e6" style="font-family:&quot;Liberation Mono&quot;,monospace" textLength="80" lengthAdjust="spacingAndGlyphs" >FC-TRANS_GR</text>
<text x="33" y="834" font-size="12.5" fill="#e6e6e6" style="font-family:&quot;Liberation Mono&quot;,monospace" textLength="167" lengthAdjust="spacingAndGlyphs" >2023-07-23 08:33:01 PDT</text>
<rect x="14.5" y="1062.5" width="35" height="22" rx="3" fill="#f4f4f4" stroke="#bdbdbd"/>
<path d="M22 1080 V1074 Q22 1071 25 1071 H28 L29 1068 H34 L35 1071 H38 Q41 1071 41 1074 V1080 Z" fill="#3a3a3a"/>
<path d="M352 751 V726 Q352 722.7 355 722.7 H648 Q652.5 722.7 652.5 727 V751 Z" fill="#f6f5f4"/>
<text x="351" y="742" font-size="13.5" fill="#9a9a9a" font-weight="bold" textLength="187" lengthAdjust="spacingAndGlyphs" >igE Camera - FC-IR TRANS B</text>
<path d="M564 741 L568 737 L572 741" stroke="#8b8e8f" stroke-width="2" fill="none"/>
<rect x="587" y="741" width="9" height="2" fill="#8b8e8f" />
<rect x="610" y="733" width="8" height="8" fill="none" stroke="#8b8e8f" stroke-width="2"/>
<path d="M633 733 L641 741 M641 733 L633 741" stroke="#8b8e8f" stroke-width="2"/>
<rect x="352" y="751" width="301" height="329" fill="#efefef" />
<rect x="358" y="751" width="1" height="329" fill="#e4e4e4" />
<rect x="359" y="751" width="1.2" height="329" fill="#6e6e6e" />
<rect x="648" y="751" width="4.5" height="329" fill="#f4f4f4" />
<rect x="652" y="751" width="1" height="329" fill="#6a6a6a" />
<text x="382.5" y="781.7" font-size="22" fill="#202020" style="font-family:&quot;Liberation Mono&quot;,monospace" textLength="180" lengthAdjust="spacingAndGlyphs" >FC-IR TRANS B</text>
<rect x="360" y="796" width="279" height="249" fill="#000" />
<path d="M584.6 997.2h1M503.8 867.2h1M375 891.5h1M474 807.3h1M373.6 1044.8h1M542 854.4h1M481.4 1038.6h1M610.5 1006.2h1M469.5 918.8h1M548.8 811.1h1M515 863.6h1M605.4 812h1M549.5 1012.7h1M423.4 1019h1M603.3 800.6h1M557.4 796.3h1M500.4 904.7h1M416.7 876.9h1M584.9 874.8h1M401.6 969.9h1M485.1 994.9h1M425.7 875.6h1M583.2 922.3h1M501.3 854.8h1M364.1 1028.4h1M383.9 1006.4h1M462.6 1032.8h1M471.4 1029.2h1M515.2 855.8h1M566.9 963.9h1M550.9 911.5h1M421.9 955.6h1M389.9 968.4h1M537.3 889.8h1M582.8 844.3h1M468.9 994.7h1M466.2 973.6h1M530.9 1030.3h1M636.7 976.2h1M585.7 834.1h1M558.9 1007.1h1M471.9 933.8h1M493.8 1034.7h1M448.5 896.1h1M360.3 900.6h1M536.2 1028.8h1M617.7 877.5h1M635.9 842.7h1M589.7 835.2h1M473 814.3h1M599.4 1002.4h1M399 927.2h1M432 918.5h1M514.3 822.5h1M601.2 865.4h1M484.7 810.3h1M360.8 844.6h1M455.3 1027.1h1M608.2 915.6h1M486.9 962.1h1M599.6 880h1M581.4 895.3h1M525.7 979.6h1M499.9 968h1M554.6 797.4h1M370.9 833.1h1M419.6 846.6h1M373.7 850.1h1M527.7 1016.6h1M457.5 887.2h1M476.3 965.4h1M579.1 1030.3h1M464.8 972h1M455.3 1001.2h1M424.4 1012.9h1M500.9 976.6h1M509.3 874.7h1M497.9 808.6h1M372 928h1M493.1 1003.5h1M365.6 934.7h1M496.9 944.9h1M563.6 926.7h1M517.1 918.5h1M531.6 857.8h1M514.2 963.4h1M413.3 1042.6h1M568.3 1033.9h1M442 906.4h1M432.9 807.6h1M364.7 857.4h1M600.3 836.8h1M552.4 858.1h1M378.3 843.9h1M549.1 920.9h1M513.2 908.8h1M436.5 917.6h1M617.4 846.2h1M564.4 858.5h1M414 876.6h1M385.9 1028.9h1M461.9 839.8h1M360 811h1M419.9 900h1M527.8 1040.3h1M608.4 856.3h1M530.6 1025.5h1M388.3 1008.7h1M470.5 990.6h1M450 951.8h1M501.5 822h1M572 1000.9h1M494.8 892.6h1M624.4 889.2h1M605.4 900.2h1M464.2 886h1M376.7 865.1h1M424 811.5h1M511.1 906.1h1M367 834.8h1M616.3 829.3h1M464.2 1032.7h1M391.6 898h1M583.5 800.8h1M378.9 1027.6h1M550.9 861h1M494 858h1M609 1032.5h1M379.8 926.5h1M411.3 896.7h1M566.8 973.6h1M413 878.7h1M478.6 892.2h1M550.3 992.3h1M453.6 905.9h1M378.8 887.3h1M624.2 921h1M515.5 946.9h1M518.2 996.3h1M432.4 874.8h1M607.4 920.5h1M627.8 830.6h1M578.5 913.8h1M492.2 1015.4h1M396.4 924.1h1M429.6 881.4h1M588 895.1h1M578.9 799.4h1M638.8 1033.9h1M549.3 845h1M543.3 843.4h1M464.2 804.7h1M379.6 835.3h1M410.7 1004.8h1M428.1 1001.5h1M361.7 810.4h1M377 1028h1M588 799.9h1M619.9 852.4h1M433.8 941.5h1M417.1 1038.8h1M462.2 938.2h1M519.7 866.1h1M564.9 1043.1h1M526.2 816.9h1M585.4 962h1M496.7 958.9h1M432.9 871.7h1M503.8 813h1M524 841.4h1M430.8 1020.1h1M524 856.7h1M555 1044.2h1M610.4 994.9h1M452.8 941.2h1M523.2 818h1M553.3 925.8h1M505.6 979.6h1M381.6 848.9h1M635.6 870.6h1M431.2 813.9h1M447.2 935.6h1M370.9 868h1M431.5 834.3h1M580.9 1035.6h1M615.4 905.8h1M378.5 882.9h1M506.3 890.7h1M564 981h1M610.2 912.8h1M426.5 1022.9h1M606.7 827.6h1M419 960.4h1M589 1035.1h1M365.9 843.1h1M478 933.2h1M577.2 934.6h1M504.7 855.6h1M541.4 941h1M623.8 843.2h1M394.8 884h1M450.8 908.8h1M407.9 972h1M589.5 797.6h1M614 818.6h1M445.5 917.1h1M478.3 849.6h1M563.5 1004.9h1M423.5 837h1M504.8 833h1M622.1 1008h1M592.9 898.5h1M579.5 893.5h1M487.7 822.4h1M370.4 962.9h1M413.9 1034.1h1M517.6 939.5h1M609.6 870.1h1M363 850.7h1M487.7 833.8h1M438.3 979.7h1M465.2 881h1M425.2 928.4h1M637.7 838.1h1M595.4 988.9h1M527.7 931.2h1M505.1 821.6h1M518.7 1042.3h1M563.4 912.2h1M483.5 1012.6h1M361.7 845.8h1M627.1 958.7h1M590.9 928.9h1M371.5 929.5h1M535.7 818h1M494.1 1030.7h1M377.4 807.5h1M388.8 965.8h1M609.1 834.9h1M595.7 851.3h1M510.2 986.2h1M392.8 914.9h1M601.8 884.4h1M582.5 909.1h1M623.2 895.7h1M589.5 814.8h1M454.6 832.3h1M472.6 896.9h1M427.1 900.3h1M550.2 939.8h1M427.9 973.1h1M557.8 901h1M488.2 839.1h1M592.9 884.8h1M441.7 1027.2h1M445.2 845.3h1M466.7 924.4h1M531.3 895.2h1M550.9 801.7h1M618.5 910.8h1" stroke="#2a2a2a" stroke-width="1"/>
<ellipse cx="488" cy="900" rx="28" ry="30" fill="url(#beam2b)"/>
<ellipse cx="491" cy="905" rx="13" ry="12" fill="url(#beam2)"/>
<text x="369.5" y="819" font-size="12.5" fill="#e6e6e6" style="font-family:&quot;Liberation Mono&quot;,monospace" textLength="73" lengthAdjust="spacingAndGlyphs" >FC-TRANS_B</text>
<text x="362" y="834" font-size="12.5" fill="#e6e6e6" style="font-family:&quot;Liberation Mono&quot;,monospace" textLength="130.5" lengthAdjust="spacingAndGlyphs" >07-23 08:33:01 PDT</text>
<rect x="1339" y="43" width="565" height="96" rx="5" fill="#d8d6d4"/>
<rect x="1339.5" y="43.5" width="564" height="94" rx="5" fill="#e6e6e6" stroke="#dedede" stroke-width="1"/>
<path d="M1377 64.5 L1395.3 97.5 H1358.7 Z" fill="none" stroke="rgba(0,0,0,0.18)" stroke-width="4" stroke-linejoin="round" transform="translate(0 1.8)"/>
<path d="M1377 64.5 L1395.3 97.5 H1358.7 Z" fill="#d0d0d0" stroke="#a30000" stroke-width="4.4" stroke-linejoin="round"/>
<path d="M1377 64.5 L1395.3 97.5 H1358.7 Z" fill="none" stroke="#c80a0a" stroke-width="2.6" stroke-linejoin="round"/>
<path d="M1375.2 77.3 H1378.8 L1378.1 87.5 H1375.9 Z" fill="#000"/>
<circle cx="1377" cy="90.5" r="2" fill="#000"/>
<text x="1414.5" y="69.7" font-size="13.5" fill="#2e3436" font-weight="bold" textLength="220" lengthAdjust="spacingAndGlyphs" >Relogin or restarts required!</text>
<text x="1414.5" y="86.9" font-size="13.5" fill="#2e3436" textLength="443" lengthAdjust="spacingAndGlyphs" >Your session is running obsolete binaries or libraries as listed below.</text>
<text x="1414.5" y="103.8" font-size="13.5" fill="#2e3436" font-weight="bold" font-style="italic" textLength="476" lengthAdjust="spacingAndGlyphs" >Please consider a relogin or restart of the affected processes!</text>
<text x="1414.5" y="120.9" font-size="13.5" fill="#2e3436" textLength="222" lengthAdjust="spacingAndGlyphs" >bash[3863641], caRepeater[2649]</text>
<rect x="1339" y="155" width="565" height="96" rx="5" fill="#d8d6d4"/>
<rect x="1339.5" y="155.5" width="564" height="94" rx="5" fill="#e6e6e6" stroke="#dedede" stroke-width="1"/>
<path d="M1377 176.5 L1395.3 209.5 H1358.7 Z" fill="none" stroke="rgba(0,0,0,0.18)" stroke-width="4" stroke-linejoin="round" transform="translate(0 1.8)"/>
<path d="M1377 176.5 L1395.3 209.5 H1358.7 Z" fill="#d0d0d0" stroke="#a30000" stroke-width="4.4" stroke-linejoin="round"/>
<path d="M1377 176.5 L1395.3 209.5 H1358.7 Z" fill="none" stroke="#c80a0a" stroke-width="2.6" stroke-linejoin="round"/>
<path d="M1375.2 189.3 H1378.8 L1378.1 199.5 H1375.9 Z" fill="#000"/>
<circle cx="1377" cy="202.5" r="2" fill="#000"/>
<text x="1414.5" y="181.7" font-size="13.5" fill="#2e3436" font-weight="bold" textLength="220" lengthAdjust="spacingAndGlyphs" >Relogin or restarts required!</text>
<text x="1414.5" y="198.9" font-size="13.5" fill="#2e3436" textLength="443" lengthAdjust="spacingAndGlyphs" >Your session is running obsolete binaries or libraries as listed below.</text>
<text x="1414.5" y="215.8" font-size="13.5" fill="#2e3436" font-weight="bold" font-style="italic" textLength="476" lengthAdjust="spacingAndGlyphs" >Please consider a relogin or restart of the affected processes!</text>
<text x="1414.5" y="232.9" font-size="13.5" fill="#2e3436" textLength="222" lengthAdjust="spacingAndGlyphs" >bash[3863641], caRepeater[2649]</text>
<rect x="1339" y="267" width="565" height="96" rx="5" fill="#d8d6d4"/>
<rect x="1339.5" y="267.5" width="564" height="94" rx="5" fill="#e6e6e6" stroke="#dedede" stroke-width="1"/>
<path d="M1377 288.5 L1395.3 321.5 H1358.7 Z" fill="none" stroke="rgba(0,0,0,0.18)" stroke-width="4" stroke-linejoin="round" transform="translate(0 1.8)"/>
<path d="M1377 288.5 L1395.3 321.5 H1358.7 Z" fill="#d0d0d0" stroke="#a30000" stroke-width="4.4" stroke-linejoin="round"/>
<path d="M1377 288.5 L1395.3 321.5 H1358.7 Z" fill="none" stroke="#c80a0a" stroke-width="2.6" stroke-linejoin="round"/>
<path d="M1375.2 301.3 H1378.8 L1378.1 311.5 H1375.9 Z" fill="#000"/>
<circle cx="1377" cy="314.5" r="2" fill="#000"/>
<text x="1414.5" y="293.7" font-size="13.5" fill="#2e3436" font-weight="bold" textLength="220" lengthAdjust="spacingAndGlyphs" >Relogin or restarts required!</text>
<text x="1414.5" y="310.9" font-size="13.5" fill="#2e3436" textLength="443" lengthAdjust="spacingAndGlyphs" >Your session is running obsolete binaries or libraries as listed below.</text>
<text x="1414.5" y="327.8" font-size="13.5" fill="#2e3436" font-weight="bold" font-style="italic" textLength="476" lengthAdjust="spacingAndGlyphs" >Please consider a relogin or restart of the affected processes!</text>
<text x="1414.5" y="344.9" font-size="13.5" fill="#2e3436" textLength="222" lengthAdjust="spacingAndGlyphs" >bash[3863641], caRepeater[2649]</text>
<rect x="1339" y="379" width="565" height="96" rx="5" fill="#d8d6d4"/>
<rect x="1339.5" y="379.5" width="564" height="94" rx="5" fill="#e6e6e6" stroke="#dedede" stroke-width="1"/>
<path d="M1377 400.5 L1395.3 433.5 H1358.7 Z" fill="none" stroke="rgba(0,0,0,0.18)" stroke-width="4" stroke-linejoin="round" transform="translate(0 1.8)"/>
<path d="M1377 400.5 L1395.3 433.5 H1358.7 Z" fill="#d0d0d0" stroke="#a30000" stroke-width="4.4" stroke-linejoin="round"/>
<path d="M1377 400.5 L1395.3 433.5 H1358.7 Z" fill="none" stroke="#c80a0a" stroke-width="2.6" stroke-linejoin="round"/>
<path d="M1375.2 413.3 H1378.8 L1378.1 423.5 H1375.9 Z" fill="#000"/>
<circle cx="1377" cy="426.5" r="2" fill="#000"/>
<text x="1414.5" y="405.7" font-size="13.5" fill="#2e3436" font-weight="bold" textLength="220" lengthAdjust="spacingAndGlyphs" >Relogin or restarts required!</text>
<text x="1414.5" y="422.9" font-size="13.5" fill="#2e3436" textLength="443" lengthAdjust="spacingAndGlyphs" >Your session is running obsolete binaries or libraries as listed below.</text>
<text x="1414.5" y="439.8" font-size="13.5" fill="#2e3436" font-weight="bold" font-style="italic" textLength="476" lengthAdjust="spacingAndGlyphs" >Please consider a relogin or restart of the affected processes!</text>
<text x="1414.5" y="456.9" font-size="13.5" fill="#2e3436" textLength="222" lengthAdjust="spacingAndGlyphs" >bash[3863641], caRepeater[2649]</text>
<rect x="1339" y="491" width="565" height="96" rx="5" fill="#d8d6d4"/>
<rect x="1339.5" y="491.5" width="564" height="94" rx="5" fill="#e6e6e6" stroke="#dedede" stroke-width="1"/>
<path d="M1377 512.5 L1395.3 545.5 H1358.7 Z" fill="none" stroke="rgba(0,0,0,0.18)" stroke-width="4" stroke-linejoin="round" transform="translate(0 1.8)"/>
<path d="M1377 512.5 L1395.3 545.5 H1358.7 Z" fill="#d0d0d0" stroke="#a30000" stroke-width="4.4" stroke-linejoin="round"/>
<path d="M1377 512.5 L1395.3 545.5 H1358.7 Z" fill="none" stroke="#c80a0a" stroke-width="2.6" stroke-linejoin="round"/>
<path d="M1375.2 525.3 H1378.8 L1378.1 535.5 H1375.9 Z" fill="#000"/>
<circle cx="1377" cy="538.5" r="2" fill="#000"/>
<text x="1414.5" y="517.7" font-size="13.5" fill="#2e3436" font-weight="bold" textLength="220" lengthAdjust="spacingAndGlyphs" >Relogin or restarts required!</text>
<text x="1414.5" y="534.9" font-size="13.5" fill="#2e3436" textLength="443" lengthAdjust="spacingAndGlyphs" >Your session is running obsolete binaries or libraries as listed below.</text>
<text x="1414.5" y="551.8" font-size="13.5" fill="#2e3436" font-weight="bold" font-style="italic" textLength="476" lengthAdjust="spacingAndGlyphs" >Please consider a relogin or restart of the affected processes!</text>
<text x="1414.5" y="568.9" font-size="13.5" fill="#2e3436" textLength="222" lengthAdjust="spacingAndGlyphs" >bash[3863641], caRepeater[2649]</text>
<rect x="1339" y="603" width="565" height="96" rx="5" fill="#d8d6d4"/>
<rect x="1339.5" y="603.5" width="564" height="94" rx="5" fill="#e6e6e6" stroke="#dedede" stroke-width="1"/>
<path d="M1377 624.5 L1395.3 657.5 H1358.7 Z" fill="none" stroke="rgba(0,0,0,0.18)" stroke-width="4" stroke-linejoin="round" transform="translate(0 1.8)"/>
<path d="M1377 624.5 L1395.3 657.5 H1358.7 Z" fill="#d0d0d0" stroke="#a30000" stroke-width="4.4" stroke-linejoin="round"/>
<path d="M1377 624.5 L1395.3 657.5 H1358.7 Z" fill="none" stroke="#c80a0a" stroke-width="2.6" stroke-linejoin="round"/>
<path d="M1375.2 637.3 H1378.8 L1378.1 647.5 H1375.9 Z" fill="#000"/>
<circle cx="1377" cy="650.5" r="2" fill="#000"/>
<text x="1414.5" y="629.7" font-size="13.5" fill="#2e3436" font-weight="bold" textLength="220" lengthAdjust="spacingAndGlyphs" >Relogin or restarts required!</text>
<text x="1414.5" y="646.9" font-size="13.5" fill="#2e3436" textLength="443" lengthAdjust="spacingAndGlyphs" >Your session is running obsolete binaries or libraries as listed below.</text>
<text x="1414.5" y="663.8" font-size="13.5" fill="#2e3436" font-weight="bold" font-style="italic" textLength="476" lengthAdjust="spacingAndGlyphs" >Please consider a relogin or restart of the affected processes!</text>
<text x="1414.5" y="680.9" font-size="13.5" fill="#2e3436" textLength="222" lengthAdjust="spacingAndGlyphs" >bash[3863641], caRepeater[2649]</text>
<rect x="1339" y="715" width="565" height="96" rx="5" fill="#d8d6d4"/>
<rect x="1339.5" y="715.5" width="564" height="94" rx="5" fill="#e6e6e6" stroke="#dedede" stroke-width="1"/>
<path d="M1377 736.5 L1395.3 769.5 H1358.7 Z" fill="none" stroke="rgba(0,0,0,0.18)" stroke-width="4" stroke-linejoin="round" transform="translate(0 1.8)"/>
<path d="M1377 736.5 L1395.3 769.5 H1358.7 Z" fill="#d0d0d0" stroke="#a30000" stroke-width="4.4" stroke-linejoin="round"/>
<path d="M1377 736.5 L1395.3 769.5 H1358.7 Z" fill="none" stroke="#c80a0a" stroke-width="2.6" stroke-linejoin="round"/>
<path d="M1375.2 749.3 H1378.8 L1378.1 759.5 H1375.9 Z" fill="#000"/>
<circle cx="1377" cy="762.5" r="2" fill="#000"/>
<text x="1414.5" y="741.7" font-size="13.5" fill="#2e3436" font-weight="bold" textLength="220" lengthAdjust="spacingAndGlyphs" >Relogin or restarts required!</text>
<text x="1414.5" y="758.9" font-size="13.5" fill="#2e3436" textLength="443" lengthAdjust="spacingAndGlyphs" >Your session is running obsolete binaries or libraries as listed below.</text>
<text x="1414.5" y="775.8" font-size="13.5" fill="#2e3436" font-weight="bold" font-style="italic" textLength="476" lengthAdjust="spacingAndGlyphs" >Please consider a relogin or restart of the affected processes!</text>
<text x="1414.5" y="792.9" font-size="13.5" fill="#2e3436" textLength="222" lengthAdjust="spacingAndGlyphs" >bash[3863641], caRepeater[2649]</text>
<rect x="807.5" y="1031.5" width="305" height="52" fill="#f6f5f4" stroke="#c9c7c4" stroke-width="1"/>
<rect x="811" y="1035.5" width="41.5" height="40.5" rx="3" fill="#4d5d68"/>
<path d="M811 1062 V1038.5 Q811 1035.5 814 1035.5 H849.5 Q852.5 1035.5 852.5 1038.5 V1062 Z" fill="#00a9e0"/>
<rect x="860" y="1040" width="1.5" height="33" fill="#777" />
<rect x="868.5" y="1038" width="38.5" height="36" rx="2" fill="#d9dcdc"/>
<rect x="870.5" y="1040" width="34.5" height="31" rx="1" fill="#263238"/>
<path d="M874 1044 L877 1046.5 L874 1049 M877.5 1051 H882" stroke="#fff" stroke-width="1" fill="none"/>
<rect x="921" y="1038" width="29" height="36" rx="2" fill="#00a6de"/>
<rect x="921" y="1055" width="29" height="1.2" fill="#0a8ab8" />
<rect x="932" y="1043" width="8" height="2" fill="#cfd8dc" />
<rect x="932" y="1061" width="8" height="2" fill="#cfd8dc" />
<rect x="921" y="1072" width="29" height="2" fill="#0d7fa8" />
<circle cx="983.8" cy="1055.8" r="21" fill="#12a7dd"/>
<path d="M971 1040 Q977 1037 983 1036 L986 1040 Q982 1044 985 1047 L980 1050 Q975 1047 972 1049 Q969 1046 971 1040 Z M990 1037 Q998 1040 1002 1047 Q997 1048 994 1045 Q990 1044 988 1040 Z M988 1053 Q994 1050 1000 1054 Q1003 1060 1000 1066 Q996 1072 992 1070 Q991 1064 988 1060 Q986 1056 988 1053 Z M964 1058 Q968 1056 971 1060 Q974 1066 972 1072 Q967 1068 964 1062 Z" fill="#6fcff0"/>
<path d="M978.3 1052 L979.3 1074 L974.5 1069.8 L969.5 1077 L966 1075 L970.5 1067.5 L962.5 1066.5 Z" fill="#eef2f5" stroke="#d0d6da" stroke-width="0.6"/>
<rect x="1014" y="1038.5" width="35.5" height="35" rx="2.5" fill="#d6dbde"/>
<rect x="1017" y="1041" width="6" height="6" fill="#63c6ee" />
<rect x="1017" y="1049" width="6" height="6" fill="#63c6ee" />
<rect x="1017" y="1057" width="6" height="6" fill="#63c6ee" />
<rect x="1017" y="1065" width="6" height="6" fill="#63c6ee" />
<rect x="1025" y="1041" width="6" height="6" fill="#63c6ee" />
<rect x="1025" y="1049" width="6" height="6" fill="#63c6ee" />
<rect x="1025" y="1057" width="6" height="6" fill="#63c6ee" />
<rect x="1025" y="1065" width="6" height="6" fill="#63c6ee" />
<rect x="1033" y="1041" width="6" height="6" fill="#63c6ee" />
<rect x="1033" y="1049" width="6" height="6" fill="#63c6ee" />
<rect x="1033" y="1057" width="6" height="6" fill="#63c6ee" />
<rect x="1041" y="1041" width="6" height="6" fill="#63c6ee" />
<rect x="1041" y="1049" width="6" height="6" fill="#63c6ee" />
<circle cx="1029.5" cy="1052" r="9.5" fill="#8fd8f4" stroke="#1e2a30" stroke-width="2"/>
<path d="M1037 1059.5 L1046 1068.5" stroke="#1e2a30" stroke-width="3.6" stroke-linecap="round"/>
<circle cx="1037.3" cy="1059.8" r="1.3" fill="#e0b020"/>
<rect x="1059.5" y="1040" width="1.5" height="33" fill="#777" />
<path d="M1069.5 1039.5 H1083 L1085.5 1043 H1099.5 V1068 H1069.5 Z" fill="#8c8c8c" stroke="#6e6e6e" stroke-width="1"/>
<rect x="1071" y="1041.5" width="27" height="0.8" fill="#a8a8a8" />
<rect x="1071" y="1043.5" width="27" height="0.8" fill="#a8a8a8" />
<rect x="1071" y="1045.5" width="27" height="0.8" fill="#a8a8a8" />
<rect x="1071" y="1047.5" width="27" height="0.8" fill="#a8a8a8" />
<rect x="1071" y="1049.5" width="27" height="0.8" fill="#a8a8a8" />
<path d="M1073.5 1048.5 H1105.5 L1104 1070.5 H1070.5 Z" fill="#6d9fdb" stroke="#4f7fbf" stroke-width="1"/>
</svg></body></html>
